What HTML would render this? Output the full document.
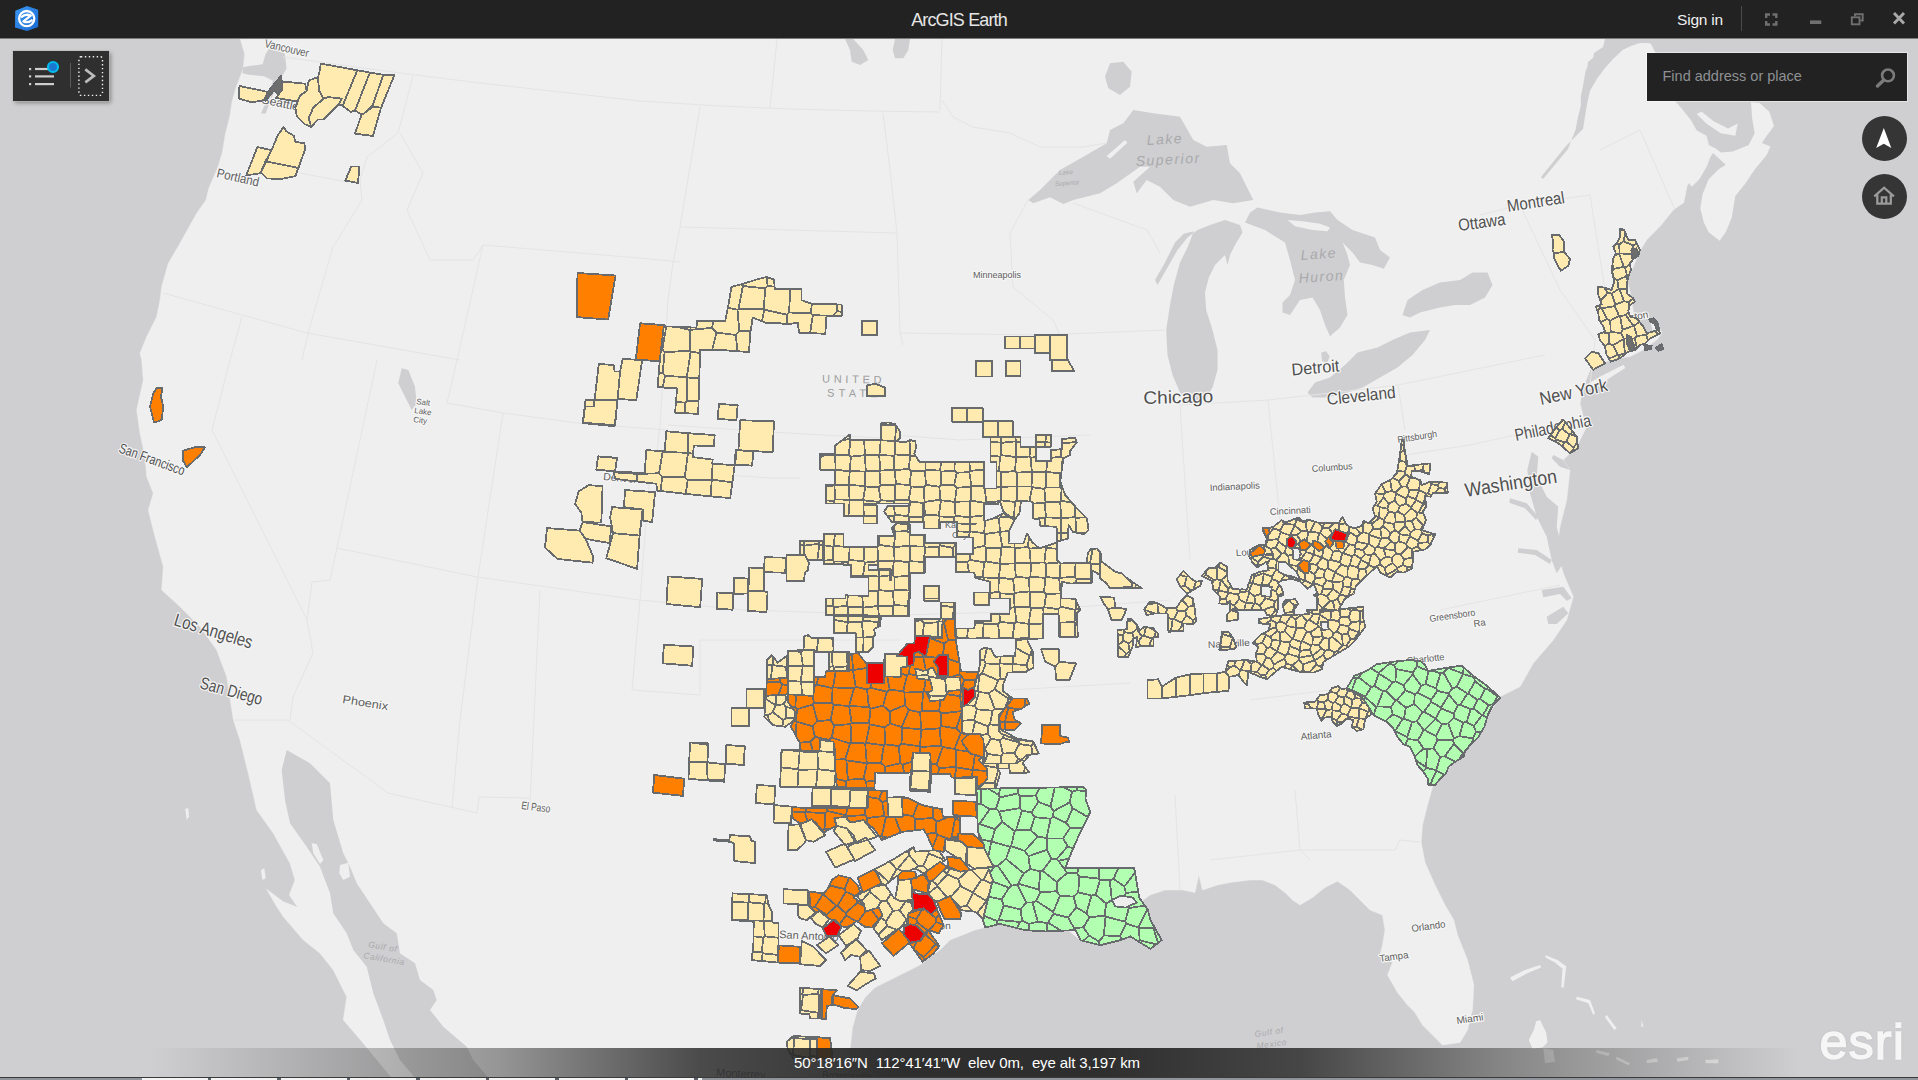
<!DOCTYPE html>
<html><head><meta charset="utf-8"><title>ArcGIS Earth</title>
<style>
html,body{margin:0;padding:0;background:#cfcfd1;overflow:hidden;}
body{width:1918px;height:1080px;position:relative;font-family:"Liberation Sans",sans-serif;}
#map{position:absolute;left:0;top:0;width:1918px;height:1080px;}
#titlebar{position:absolute;left:0;top:0;width:1918px;height:38px;background:#222222;border-bottom:1px solid #7c7c7d;}
#title{position:absolute;left:0;width:1918px;top:9px;text-align:center;color:#e6e6e6;font-size:18px;line-height:22px;letter-spacing:-0.86px;}
#signin{position:absolute;left:1677px;top:9px;color:#f0f0f0;font-size:15.5px;line-height:22px;letter-spacing:-0.2px;}
#tsep{position:absolute;left:1741px;top:6px;width:1px;height:25px;background:#4a4a4a;}
#toolbar{position:absolute;left:13px;top:51px;width:96px;height:50px;background:#2f2f2f;box-shadow:0 0 0 1px rgba(190,190,190,.55),2px 2px 4px rgba(0,0,0,.35);}
#search{position:absolute;left:1647px;top:53px;width:260px;height:48px;background:#222222;box-shadow:0 0 0 1px rgba(255,255,255,.45);}
#search span{position:absolute;left:15.5px;top:13px;color:#8e9093;font-size:14.5px;line-height:20px;letter-spacing:0px;}
.round{position:absolute;width:45px;height:45px;border-radius:50%;background:#353535;}
#status{position:absolute;left:0;top:1048px;width:1918px;height:29px;background:linear-gradient(90deg,rgba(64,64,64,0) 0px,rgba(64,64,64,0) 150px,rgba(60,60,60,.5) 500px,rgba(46,46,46,.85) 700px,rgba(34,34,34,.93) 900px,rgba(34,34,34,.93) 1100px,rgba(46,46,46,.85) 1300px,rgba(60,60,60,.5) 1500px,rgba(64,64,64,0) 1800px);}
#coords{position:absolute;left:794px;top:1052.5px;color:#fff;font-size:15px;line-height:20px;white-space:pre;letter-spacing:-0.125px;}
#esri{position:absolute;left:1819.5px;top:1012px;color:#f6f6f6;font-size:50.5px;line-height:60px;letter-spacing:1px;-webkit-text-stroke:1.5px #f6f6f6;text-shadow:0 0 2px rgba(0,0,0,.35);}
#bottomw{position:absolute;left:142px;top:1078px;width:560px;height:2px;background:repeating-linear-gradient(90deg,#f4f4f4 0px,#f4f4f4 66px,#5a6068 66px,#5a6068 69.5px);}
#bottom{position:absolute;left:0;top:1077px;width:1918px;height:3px;background:#8f959b;border-top:1px solid #3a3a3a;box-sizing:border-box;}
</style></head><body>
<svg id="map" width="1918" height="1080" viewBox="0 0 1918 1080">
<rect x="0" y="0" width="1918" height="1080" fill="#cfcfd1"/>
<polygon points="240.3,39 244.7,53.9 243.2,68.8 235.8,88.2 232.1,101.6 229.8,116.5 225.3,134.4 222.4,152.3 217.9,167.2 208.9,188.1 206,200 196.7,213.3 180,243.3 168.3,263.3 161.7,286.7 160,300 156.7,316.7 146.7,336.7 140,353.3 141.7,359.7 143.3,380 136.7,410 140,433.3 145,456.7 146.7,476.7 153.3,493.3 148.3,510 155,536.7 163.3,566.7 161.7,590 180,606.7 200,626.7 216.7,650 226.7,676.7 233.3,719.7 240,740 248.3,773.3 256.7,810 273.3,833.3 290,863.3 295,880 289.3,895 297.7,907.3 283.3,901.7 266.7,889.3 276.7,906.7 283.3,916.7 303.3,940 320,953.3 333.3,970 346.7,996.7 343.3,1020 363.3,1043.3 393.3,1079.7 848,1080 850,1049.8 852.5,1027.5 857.5,1010 865,997.5 875,987.5 890,980 905,972.5 920,965 932.5,955 940,950 950,940 962.5,935 975,930 985,927.5 1000,923.8 1025,930 1045,931.2 1055,925 1065,927.5 1080,940 1100,945 1120,940 1130,935 1150,947.5 1161.2,940 1147.5,920 1145,907.5 1137.5,905 1140,897.5 1140,902.5 1150,895 1165,890 1182.5,890 1195,892.5 1198.8,875 1202.5,890 1217.5,885 1230,882.5 1250,880 1262.5,880 1275,885 1285,892.5 1292.5,900 1300,905 1312.5,897.5 1325,887.5 1337.5,881.2 1350,890 1360,900 1370,910 1382.5,915 1385,930 1382.5,945 1380,955 1392.5,962.5 1387.5,975 1397.5,992.5 1407.5,1005 1415,1012.5 1422.5,1025 1432.5,1035 1442.5,1045 1460,1042.5 1467.5,1030 1472.5,1010 1473.8,985 1467.5,960 1457.5,935 1453.8,920 1445,905 1435,885 1425,862.5 1421.2,842.5 1422.5,825 1427.5,805 1432.5,787.5 1435,780 1433.3,783.3 1446.7,770 1463.3,753.3 1480,733.3 1485,720 1500,696.7 1520,686.7 1533.3,663.3 1553.3,640 1566.7,620 1573.3,596.7 1563.3,573.3 1556.7,550 1560,526.7 1566.7,500 1570,470 1563.3,460 1576.7,446.7 1586.7,426.7 1583.3,416.7 1580,403.3 1583.5,386.5 1590.2,369.8 1610.3,359.7 1630.3,356.4 1643.7,349.7 1657,339.7 1662,333 1657,323 1650.4,321.3 1653.7,333 1640.3,333 1633.6,313 1630.3,292.9 1627,279.6 1633.6,266.2 1638.7,252.8 1647,239.5 1660.4,226.1 1673.7,209.4 1683.8,202.7 1687.1,186 1689.1,182.7 1691.8,186.4 1699.1,179.2 1706.3,167.1 1710,157.4 1713.6,151.4 1716,149 1708.7,145.3 1706.3,135.7 1696.7,130.8 1690.6,120 1681,107.9 1674.9,101.3 1672.5,87.3 1648.3,39 240,39" fill="#efefef" stroke="#efefef" stroke-width="0.5" stroke-linejoin="round"/>
<polygon points="286.7,750 310,763.3 330,783.3 333.3,820 343.3,853.3 350,866.7 356.7,883.3 370,903.3 383.3,923.3 396.7,933.3 400,953.3 415,963.3 420,980 433.3,990 436.7,1000 430,1010 443.3,1026.7 466.7,1046.7 473.3,1060 490,1079.7 416.7,1079.7 400,1060 390,1040 383.3,1020 373.3,993.3 366.7,966.7 353.3,950 346.7,933.3 333.3,913.3 330,893.3 320,866.7 306.7,846.7 290,823.3 285,800 281.7,770" fill="#cfcfd1"/>
<polygon points="243.2,67.3 250.7,65.8 262.6,64.3 265.6,53.9 271.6,45 277.5,47.9 285,53.9 286.5,68.8 282,76.3 280.5,88.2 274.5,91.2 270.1,101.6 265.6,113.5 261.1,113.5 267.1,98.6 273,80.7 264.1,76.3 249.2,74.8 242.5,73.3" fill="#cfcfd1"/>
<polygon points="1028.3,200 1040,190 1060,170 1083.3,156.7 1106.7,143.3 1110,130 1123.3,123.3 1133.3,110 1153.3,113.3 1180,116.7 1193.3,140 1206.7,146.7 1226.7,145 1230,163.3 1240,173.3 1246.7,186.7 1253.3,200 1233.3,203.3 1213.3,200 1190,206.7 1173.3,200 1160,186.7 1146.7,180 1136.7,193.3 1133.3,181.7 1150,166.7 1140,166.7 1116.7,183.3 1100,193.3 1073.3,200 1063.3,204 1050,197.3 1033.3,203.3" fill="#cfcfd1"/>
<polygon points="1110,63.3 1123.3,61.7 1131.7,71.7 1130,86.7 1120,95 1108.3,88.3 1105,76.7" fill="#cfcfd1"/>
<polygon points="845,39 853.3,39 863.3,50 868.3,60 860,65 851.7,61.7 850,50" fill="#cfcfd1"/>
<polygon points="895,39 910,39 908.3,50 903.3,58.3 895,58.3 892.7,50" fill="#cfcfd1"/>
<polygon points="1240,225 1225,220 1210,225 1197.5,230 1187.5,237.5 1177.5,250 1167.5,267.5 1157.5,285 1155,280 1165,262.5 1175,242.5 1183.8,233.8 1193.8,231.2 1187.5,247.5 1180,262.5 1173.8,285 1170,305 1166.2,330 1167.5,355 1172.5,375 1180,392.5 1190,405 1205,400 1212.5,387.5 1217.5,370 1217.5,350 1212.5,330 1206.2,310 1205,292.5 1208.8,277.5 1215,265 1225,255 1227.5,265 1230,255 1235,245 1242.5,232.5" fill="#cfcfd1"/>
<polygon points="1245,222.5 1250,212.5 1257.5,207.5 1280,212.5 1300,215 1315,212.5 1330,211.2 1337.5,220 1352.5,230 1375,237.5 1380,250 1390,257.5 1383.8,268.8 1372.5,265 1360,262.5 1352.5,252.5 1342.5,242.5 1347.5,255 1350,265 1343.8,280 1345,297.5 1347.5,315 1340,327.5 1330,336.2 1325,325 1320,310 1312.5,297.5 1300,300 1290,315 1282.5,312.5 1282.5,302.5 1290,295 1295,280 1290,260 1285,242.5 1265,230" fill="#cfcfd1"/>
<polygon points="1321.2,352.5 1326.2,351.2 1329.5,356.2 1327.5,362.5 1322,361.2" fill="#cfcfd1"/>
<polygon points="1307.5,392.5 1315,382.5 1330,377.5 1345,365 1357.5,352.5 1377.5,347.5 1392.5,340 1410,332.5 1430,330 1425,340 1412.5,355 1397.5,367.5 1380,377.5 1362.5,387.5 1340,395 1325,397.5 1312.5,397.5" fill="#cfcfd1"/>
<polygon points="1402.5,315 1407.5,300 1422.5,290 1440,282.5 1460,280 1472.5,272.5 1487.5,272.5 1492.5,285 1485,297.5 1470,305 1455,305 1440,307.5 1420,312.5 1410,317.5" fill="#cfcfd1"/>
<polygon points="1605,39 1603,47 1594,53 1593,58 1588,62 1587.5,66.5 1585.4,72 1583,85.7 1580.8,97 1580.8,105.7 1577.5,119 1575.8,129 1568,149 1543,179 1541,177 1566,146 1583,129 1586.7,105.7 1590,90.7 1597.5,78 1605,68 1613,59 1623,49.8 1631.7,45.7 1640,43 1648,43 1658,45.7 1665,49.4 1673,50.7 1700,51.5 1700,39" fill="#cfcfd1"/>
<polygon points="1531.7,451.7 1538.3,456.7 1536.7,476.7 1546.7,496.7 1558.3,506.7 1556.7,526.7 1561.7,546.7 1563.3,563.3 1556.7,573.3 1551.7,560 1546.7,536.7 1536.7,516.7 1530,493.3 1527.3,470" fill="#cfcfd1"/>
<polygon points="1510,498.3 1526.7,503.3 1538.3,516.7 1536,520 1525,508.3 1509.3,502.7" fill="#cfcfd1"/>
<polygon points="1518.3,548.3 1536.7,550 1551.7,560 1550,564 1535,555 1517.7,552.7" fill="#cfcfd1"/>
<polygon points="1541.7,590 1563.3,586.7 1571.7,598.3 1566.7,600.7 1560,594 1543.3,597.3" fill="#cfcfd1"/>
<polygon points="1546.7,616.7 1563.3,606.7 1568.3,613.3 1556.7,624 1548.3,624" fill="#cfcfd1"/>
<polygon points="1563.3,460 1570,470 1560,466.7 1551.7,458.3 1553.3,455" fill="#cfcfd1"/>
<polygon points="401.7,368.3 408.3,370 415,386.7 416.7,403.3 411.7,410 405,396.7 398.3,383.3" fill="#cfcfd1"/>
<polygon points="1287.5,220 1302.5,221.2 1320,223.8 1330,227.5 1327.5,231.2 1312.5,230 1295,226.2" fill="#efefef"/>
<polygon points="1106.7,156 1125,140 1127.3,142.7 1110,158.7" fill="#efefef"/>
<polygon points="1583.5,386.5 1600.2,376.5 1623.6,364.8 1625.3,368.1 1606.9,379.8 1588.5,389.8" fill="#efefef"/>
<polygon points="1696.7,113.9 1701.5,111.5 1713.6,121.2 1728.1,128.4 1737.7,123.6 1735.3,135.7 1720.8,133.2 1706.3,123.6" fill="#efefef"/>
<polygon points="1712.4,152.6 1725.7,164.7 1718.4,169.5 1708.7,179.2 1702.7,193.7 1700.3,208.2 1703.9,222.7 1708.7,232.3 1719.6,240.8 1725.7,232.3 1731.7,217.8 1735.3,196.1 1745,184 1754.7,169.5 1766.7,155 1770.4,146.5 1761.9,142.9 1766.7,135.7 1774,126 1769.2,111.5 1759.5,103 1751,102.3 1752.2,118.7 1754.7,133.2 1748.6,145.3 1745,146.5 1732.9,151.4 1720.8,152.6 1715.5,148.2" fill="#efefef"/>
<polygon points="1510,977.5 1525,970 1540,965 1541.2,967.5 1526.2,973.8 1512.5,981.2" fill="#efefef"/>
<polygon points="1545,955 1557.5,960 1566.2,966.2 1563.8,987.5 1561.2,987.5 1562.5,968.8 1555,962.5 1546.2,958" fill="#efefef"/>
<polygon points="1536.2,1021.2 1540,1020 1546.2,1032.5 1547.5,1042.5 1542.5,1047.5 1532.5,1048.8 1528.8,1040 1533.8,1030" fill="#efefef"/>
<polygon points="311.7,843.3 316.7,844 323.3,860 320,864 313.3,853.3" fill="#efefef"/>
<polygon points="340,865 348.3,862.7 350,876.7 343.3,880 339.3,873.3" fill="#efefef"/>
<polygon points="261,870 264.3,868.3 265.7,878.3 262.3,880" fill="#efefef"/>
<polygon points="185.3,808.7 188.3,808.3 189,816.7 186.7,820" fill="#efefef"/>
<polygon points="1576.7,996.7 1590,1000 1595,1013.3 1593.3,1015 1588.3,1003.3 1576,999.3" fill="#efefef"/>
<polygon points="1606.7,1015 1616.7,1028.3 1614.3,1030 1605,1017.3" fill="#efefef"/>
<polygon points="1641.7,1020 1643.3,1026.7 1641.3,1026.7" fill="#efefef"/>
<polygon points="1543.3,1048.3 1553.3,1050 1555,1061.7 1545,1063.3" fill="#efefef"/>
<polygon points="1596.7,1050 1610,1053.3 1608.3,1056 1596,1052.7" fill="#efefef"/>
<polygon points="1616.7,1056.7 1630,1063.3 1628.3,1065.3 1616,1059.3" fill="#efefef"/>
<polygon points="1646.7,1060 1656.7,1058.3 1658.3,1061.7 1646.7,1063.3" fill="#efefef"/>
<polygon points="1676.7,1058.3 1688.3,1056.7 1688.3,1060 1677.3,1061.7" fill="#efefef"/>
<polygon points="1705,1060 1718.3,1059.3 1718.3,1063.3 1706,1063.3" fill="#efefef"/>
<g fill="none" stroke="#e4e4e4" stroke-width="1" stroke-linejoin="round">
<polyline points="283,57 320,62 400,73 480,83 560,92 640,101 720,106 790,109 870,111 940,112"/>
<polyline points="413,76 398,133 367,157 360,180 362,200 333,247 308,333 302,360"/>
<polyline points="300,173 347,182"/>
<polyline points="163,293 307,333 460,360"/>
<polyline points="400,133 423,173 407,210 430,260 473,260 483,245"/>
<polyline points="483,245 639,258 680,262"/>
<polyline points="483,245 457,360 447,403"/>
<polyline points="700,107 680,227 673,263 668,300"/>
<polyline points="680,227 897,233"/>
<polyline points="883,113 890,170 897,233 900,333 903,345"/>
<polyline points="942,39 940,110"/>
<polyline points="777,39 770,108"/>
<polyline points="447,403 503,413 585,424 668,430"/>
<polyline points="668,300 660,425 655,470"/>
<polyline points="242,317 230,360 212,430 307,620"/>
<polyline points="377,360 337,548 330,580 312,582 307,620 313,653 293,697 290,720"/>
<polyline points="503,413 478,577 460,720 452,808"/>
<polyline points="337,548 477,577 639,600"/>
<polyline points="233,720 288,720 388,793 477,813 479,797 530,798"/>
<polyline points="668,425 770,432 880,438"/>
<polyline points="655,470 770,478 800,478"/>
<polyline points="640,600 745,610 900,615 1010,612"/>
<polyline points="650,470 640,600 632,690"/>
<polyline points="540,590 530,803"/>
<polyline points="632,690 700,695 700,640 900,640"/>
<polyline points="900,333 1040,335 1165,330"/>
<polyline points="893,435 960,440 1090,435"/>
<polyline points="1028,200 1010,233 1013,287 1053,320 1060,335"/>
<polyline points="1073,203 1147,230 1160,253"/>
<polyline points="942,100 953,117 973,127 1010,133 1040,147 1083,147 1107,143"/>
<polyline points="1010,612 1170,600"/>
<polyline points="1010,690 1130,683"/>
<polyline points="1180,405 1190,560"/>
<polyline points="1268,400 1280,520"/>
<polyline points="1180,405 1268,400 1340,392"/>
<polyline points="1398,385 1405,430"/>
<polyline points="1340,392 1398,385 1545,355"/>
<polyline points="1405,455 1470,445 1560,425"/>
<polyline points="1250,700 1330,690 1420,680"/>
<polyline points="1440,610 1560,585"/>
<polyline points="1175,795 1180,890"/>
<polyline points="1295,790 1300,850 1310,860"/>
<polyline points="1210,860 1300,850 1395,850 1400,840 1420,842"/>
<polyline points="1590,385 1595,340 1560,290 1520,205"/>
<polyline points="1480,215 1520,205 1590,195"/>
<polyline points="1590,195 1605,290 1625,300"/>
<polyline points="1600,150 1640,130 1675,210"/>
</g>
<g font-family="Liberation Sans, sans-serif"><text x="264" y="47" transform="rotate(13 264 47)" fill="#606060" text-anchor="start" style="font-size:11.5px;" stroke="#f6f6f6" stroke-width="2.4" paint-order="stroke" stroke-linejoin="round" textLength="45" lengthAdjust="spacingAndGlyphs">Vancouver</text>
<text x="261" y="103" transform="rotate(12 261 103)" fill="#606060" text-anchor="start" style="font-size:12px;" stroke="#f6f6f6" stroke-width="2.4" paint-order="stroke" stroke-linejoin="round" textLength="38" lengthAdjust="spacingAndGlyphs">Seattle</text>
<text x="216" y="177" transform="rotate(13 216 177)" fill="#606060" text-anchor="start" style="font-size:13px;" stroke="#f6f6f6" stroke-width="2.4" paint-order="stroke" stroke-linejoin="round" textLength="43" lengthAdjust="spacingAndGlyphs">Portland</text>
<text x="118" y="452" transform="rotate(20 118 452)" fill="#505050" text-anchor="start" style="font-size:14px;" stroke="#f6f6f6" stroke-width="2.4" paint-order="stroke" stroke-linejoin="round" textLength="69" lengthAdjust="spacingAndGlyphs">San Francisco</text>
<text x="173" y="625" transform="rotate(17 173 625)" fill="#505050" text-anchor="start" style="font-size:18px;" stroke="#f6f6f6" stroke-width="2.4" paint-order="stroke" stroke-linejoin="round" textLength="81" lengthAdjust="spacingAndGlyphs">Los Angeles</text>
<text x="199" y="688" transform="rotate(15.5 199 688)" fill="#505050" text-anchor="start" style="font-size:17px;" stroke="#f6f6f6" stroke-width="2.4" paint-order="stroke" stroke-linejoin="round" textLength="64" lengthAdjust="spacingAndGlyphs">San Diego</text>
<text x="342" y="703" transform="rotate(9 342 703)" fill="#606060" text-anchor="start" style="font-size:11.5px;" stroke="#f6f6f6" stroke-width="2.4" paint-order="stroke" stroke-linejoin="round" textLength="46" lengthAdjust="spacingAndGlyphs">Phoenix</text>
<text x="416" y="404" transform="rotate(8 416 404)" fill="#606060" text-anchor="start" style="font-size:8px;" stroke="#f6f6f6" stroke-width="2.4" paint-order="stroke" stroke-linejoin="round">Salt</text>
<text x="414" y="413" transform="rotate(8 414 413)" fill="#606060" text-anchor="start" style="font-size:8px;" stroke="#f6f6f6" stroke-width="2.4" paint-order="stroke" stroke-linejoin="round">Lake</text>
<text x="413" y="422" transform="rotate(8 413 422)" fill="#606060" text-anchor="start" style="font-size:8px;" stroke="#f6f6f6" stroke-width="2.4" paint-order="stroke" stroke-linejoin="round">City</text>
<text x="521" y="809" transform="rotate(7 521 809)" fill="#606060" text-anchor="start" style="font-size:11px;" stroke="#f6f6f6" stroke-width="2.4" paint-order="stroke" stroke-linejoin="round" textLength="29" lengthAdjust="spacingAndGlyphs">El Paso</text>
<text x="603" y="480" transform="rotate(5 603 480)" fill="#606060" text-anchor="start" style="font-size:10.5px;" stroke="#f6f6f6" stroke-width="2.4" paint-order="stroke" stroke-linejoin="round">Denver</text>
<text x="973" y="278" transform="rotate(0 973 278)" fill="#606060" text-anchor="start" style="font-size:9.5px;" stroke="#f6f6f6" stroke-width="2.4" paint-order="stroke" stroke-linejoin="round" textLength="48" lengthAdjust="spacingAndGlyphs">Minneapolis</text>
<text x="822" y="382.5" transform="rotate(1 822 382.5)" fill="#9c9c9c" text-anchor="start" style="font-size:11px;letter-spacing:3.7px;">UNITED</text>
<text x="827" y="396.5" transform="rotate(1 827 396.5)" fill="#9c9c9c" text-anchor="start" style="font-size:11px;letter-spacing:4.2px;">STATE</text>
<text x="1143.5" y="404" transform="rotate(-1.5 1143.5 404)" fill="#505050" text-anchor="start" style="font-size:18px;" stroke="#f6f6f6" stroke-width="2.4" paint-order="stroke" stroke-linejoin="round" textLength="70" lengthAdjust="spacingAndGlyphs">Chicago</text>
<text x="1292" y="375.5" transform="rotate(-5 1292 375.5)" fill="#505050" text-anchor="start" style="font-size:17px;" stroke="#f6f6f6" stroke-width="2.4" paint-order="stroke" stroke-linejoin="round" textLength="48" lengthAdjust="spacingAndGlyphs">Detroit</text>
<text x="1327.5" y="405" transform="rotate(-6 1327.5 405)" fill="#505050" text-anchor="start" style="font-size:17px;" stroke="#f6f6f6" stroke-width="2.4" paint-order="stroke" stroke-linejoin="round" textLength="69" lengthAdjust="spacingAndGlyphs">Cleveland</text>
<text x="1210" y="491" transform="rotate(-3 1210 491)" fill="#606060" text-anchor="start" style="font-size:9.5px;" stroke="#f6f6f6" stroke-width="2.4" paint-order="stroke" stroke-linejoin="round" textLength="50" lengthAdjust="spacingAndGlyphs">Indianapolis</text>
<text x="1312" y="472" transform="rotate(-4 1312 472)" fill="#606060" text-anchor="start" style="font-size:9.5px;" stroke="#f6f6f6" stroke-width="2.4" paint-order="stroke" stroke-linejoin="round" textLength="41" lengthAdjust="spacingAndGlyphs">Columbus</text>
<text x="1398" y="443" transform="rotate(-9 1398 443)" fill="#606060" text-anchor="start" style="font-size:9.5px;" stroke="#f6f6f6" stroke-width="2.4" paint-order="stroke" stroke-linejoin="round" textLength="40" lengthAdjust="spacingAndGlyphs">Pittsburgh</text>
<text x="1270" y="515" transform="rotate(-3 1270 515)" fill="#606060" text-anchor="start" style="font-size:9.5px;" stroke="#f6f6f6" stroke-width="2.4" paint-order="stroke" stroke-linejoin="round" textLength="41" lengthAdjust="spacingAndGlyphs">Cincinnati</text>
<text x="1236" y="556" transform="rotate(-3 1236 556)" fill="#606060" text-anchor="start" style="font-size:9.5px;" stroke="#f6f6f6" stroke-width="2.4" paint-order="stroke" stroke-linejoin="round" textLength="40" lengthAdjust="spacingAndGlyphs">Louisville</text>
<text x="1208" y="648" transform="rotate(-3 1208 648)" fill="#606060" text-anchor="start" style="font-size:9.5px;" stroke="#f6f6f6" stroke-width="2.4" paint-order="stroke" stroke-linejoin="round" textLength="42" lengthAdjust="spacingAndGlyphs">Nashville</text>
<text x="1430" y="622" transform="rotate(-8 1430 622)" fill="#606060" text-anchor="start" style="font-size:9.5px;" stroke="#f6f6f6" stroke-width="2.4" paint-order="stroke" stroke-linejoin="round" textLength="46" lengthAdjust="spacingAndGlyphs">Greensboro</text>
<text x="1474" y="627" transform="rotate(-8 1474 627)" fill="#606060" text-anchor="start" style="font-size:9.5px;" stroke="#f6f6f6" stroke-width="2.4" paint-order="stroke" stroke-linejoin="round">Ra</text>
<text x="1407" y="664" transform="rotate(-6 1407 664)" fill="#606060" text-anchor="start" style="font-size:9.5px;" stroke="#f6f6f6" stroke-width="2.4" paint-order="stroke" stroke-linejoin="round" textLength="38" lengthAdjust="spacingAndGlyphs">Charlotte</text>
<text x="1301" y="740" transform="rotate(-5 1301 740)" fill="#606060" text-anchor="start" style="font-size:10px;" stroke="#f6f6f6" stroke-width="2.4" paint-order="stroke" stroke-linejoin="round" textLength="31" lengthAdjust="spacingAndGlyphs">Atlanta</text>
<text x="1466" y="497" transform="rotate(-9 1466 497)" fill="#505050" text-anchor="start" style="font-size:19.5px;" stroke="#f6f6f6" stroke-width="2.4" paint-order="stroke" stroke-linejoin="round" textLength="93" lengthAdjust="spacingAndGlyphs">Washington</text>
<text x="1516" y="441" transform="rotate(-11.5 1516 441)" fill="#505050" text-anchor="start" style="font-size:17px;" stroke="#f6f6f6" stroke-width="2.4" paint-order="stroke" stroke-linejoin="round" textLength="77.5" lengthAdjust="spacingAndGlyphs">Philadelphia</text>
<text x="1541" y="405" transform="rotate(-12 1541 405)" fill="#505050" text-anchor="start" style="font-size:18px;" stroke="#f6f6f6" stroke-width="2.4" paint-order="stroke" stroke-linejoin="round" textLength="69" lengthAdjust="spacingAndGlyphs">New York</text>
<text x="1459" y="231" transform="rotate(-7.7 1459 231)" fill="#505050" text-anchor="start" style="font-size:17px;" stroke="#f6f6f6" stroke-width="2.4" paint-order="stroke" stroke-linejoin="round" textLength="47.5" lengthAdjust="spacingAndGlyphs">Ottawa</text>
<text x="1508" y="212" transform="rotate(-9 1508 212)" fill="#505050" text-anchor="start" style="font-size:17px;" stroke="#f6f6f6" stroke-width="2.4" paint-order="stroke" stroke-linejoin="round" textLength="58" lengthAdjust="spacingAndGlyphs">Montreal</text>
<text x="1618" y="323" transform="rotate(-10 1618 323)" fill="#606060" text-anchor="start" style="font-size:10px;" stroke="#f6f6f6" stroke-width="2.4" paint-order="stroke" stroke-linejoin="round">Boston</text>
<text x="1412" y="932" transform="rotate(-8 1412 932)" fill="#606060" text-anchor="start" style="font-size:10px;" stroke="#f6f6f6" stroke-width="2.4" paint-order="stroke" stroke-linejoin="round" textLength="34" lengthAdjust="spacingAndGlyphs">Orlando</text>
<text x="1380" y="962" transform="rotate(-8 1380 962)" fill="#606060" text-anchor="start" style="font-size:10px;" stroke="#f6f6f6" stroke-width="2.4" paint-order="stroke" stroke-linejoin="round" textLength="29" lengthAdjust="spacingAndGlyphs">Tampa</text>
<text x="1457" y="1024" transform="rotate(-8 1457 1024)" fill="#606060" text-anchor="start" style="font-size:10px;" stroke="#f6f6f6" stroke-width="2.4" paint-order="stroke" stroke-linejoin="round" textLength="27" lengthAdjust="spacingAndGlyphs">Miami</text>
<text x="779" y="938" transform="rotate(3 779 938)" fill="#606060" text-anchor="start" style="font-size:11px;" stroke="#f6f6f6" stroke-width="2.4" paint-order="stroke" stroke-linejoin="round">San Antonio</text>
<text x="913" y="931" transform="rotate(-3 913 931)" fill="#606060" text-anchor="start" style="font-size:10px;" stroke="#f6f6f6" stroke-width="2.4" paint-order="stroke" stroke-linejoin="round" textLength="38" lengthAdjust="spacingAndGlyphs">Houston</text>
<text x="716" y="1076" transform="rotate(3 716 1076)" fill="#606060" text-anchor="start" style="font-size:11px;" stroke="#f6f6f6" stroke-width="2.4" paint-order="stroke" stroke-linejoin="round">Monterrey</text>
<text x="822" y="1078" transform="rotate(2 822 1078)" fill="#606060" text-anchor="start" style="font-size:10px;" stroke="#f6f6f6" stroke-width="2.4" paint-order="stroke" stroke-linejoin="round">Brownsville</text>
<text x="945" y="528" transform="rotate(0 945 528)" fill="#606060" text-anchor="start" style="font-size:9px;" stroke="#f6f6f6" stroke-width="2.4" paint-order="stroke" stroke-linejoin="round">Kansas</text>
<text x="952" y="538" transform="rotate(0 952 538)" fill="#606060" text-anchor="start" style="font-size:9px;" stroke="#f6f6f6" stroke-width="2.4" paint-order="stroke" stroke-linejoin="round">City</text>
<text x="1147" y="145" transform="rotate(-3 1147 145)" fill="#a9a9ac" text-anchor="start" style="font-size:14px;font-style:italic;letter-spacing:1.5px;">Lake</text>
<text x="1136" y="166" transform="rotate(-3 1136 166)" fill="#a9a9ac" text-anchor="start" style="font-size:14px;font-style:italic;letter-spacing:1.5px;">Superior</text>
<text x="1059" y="175" transform="rotate(-4 1059 175)" fill="#a9a9ac" text-anchor="start" style="font-size:6.5px;font-style:italic;">Lake</text>
<text x="1055" y="186" transform="rotate(-4 1055 186)" fill="#a9a9ac" text-anchor="start" style="font-size:6.5px;font-style:italic;">Superior</text>
<text x="1301" y="260" transform="rotate(-4 1301 260)" fill="#a9a9ac" text-anchor="start" style="font-size:14px;font-style:italic;letter-spacing:1.5px;">Lake</text>
<text x="1299" y="283" transform="rotate(-4 1299 283)" fill="#a9a9ac" text-anchor="start" style="font-size:14px;font-style:italic;letter-spacing:1.5px;">Huron</text>
<text x="368" y="947" transform="rotate(10 368 947)" fill="#a9a9ac" text-anchor="start" style="font-size:8.5px;font-style:italic;letter-spacing:0.6px;">Gulf of</text>
<text x="363" y="958" transform="rotate(10 363 958)" fill="#a9a9ac" text-anchor="start" style="font-size:8.5px;font-style:italic;letter-spacing:0.6px;">California</text>
<text x="1255" y="1037" transform="rotate(-8 1255 1037)" fill="#a9a9ac" text-anchor="start" style="font-size:8.5px;font-style:italic;letter-spacing:0.6px;">Gulf of</text>
<text x="1257" y="1049" transform="rotate(-8 1257 1049)" fill="#a9a9ac" text-anchor="start" style="font-size:8.5px;font-style:italic;letter-spacing:0.6px;">Mexico</text></g>
<g stroke="#686b6e" stroke-width="1.8" stroke-linejoin="round" shape-rendering="crispEdges">
<path fill="#ffebaf" d="M660.7,349.3 660.9,347.6 663.9,326.3 666.3,326.4 662.4,349.5ZM658.8,373.0 660.7,349.3 662.4,349.5 664.6,352.3 662.6,373.1ZM662.8,387.5 657.6,387.1 658.8,373.0 662.6,373.1 665.0,375.8ZM677.0,326.8 690.6,327.4 690.3,329.9 690.2,330.0ZM666.3,326.4 677.0,326.8 690.2,330.0 689.9,350.6 664.6,352.3 662.4,349.5ZM686.8,377.2 665.0,375.8 662.6,373.1 664.6,352.3 689.9,350.6 690.7,351.7ZM676.0,401.6 677.1,388.4 662.8,387.5 665.0,375.8 686.8,377.2 687.1,377.5 687.1,400.8 685.1,402.8ZM685.1,413.2 675.1,412.7 676.0,401.6 685.1,402.8ZM690.6,327.4 696.4,327.6 697.2,320.6 713.7,320.7 712.0,327.8 690.3,329.9ZM716.4,332.6 712.2,349.9 700.2,349.6 700.1,353.1 690.7,351.7 689.9,350.6 690.2,330.0 690.3,329.9 712.0,327.8ZM700.1,353.1 699.3,378.3 687.1,377.5 686.8,377.2 690.7,351.7ZM699.3,378.3 698.6,401.2 687.1,400.8 687.1,377.5ZM698.6,401.2 698.2,413.9 685.1,413.2 685.1,402.8 687.1,400.8ZM738.6,308.8 737.5,309.7 727.9,307.9 731.4,287.0 741.4,284.2 742.9,286.0ZM713.7,320.7 725.2,320.8 727.7,308.8 727.9,307.9 737.5,309.7 739.3,331.0 735.9,335.0 716.4,332.6 712.0,327.8ZM737.4,351.2 722.7,350.1 712.2,349.9 716.4,332.6 735.9,335.0ZM742.9,286.0 741.4,284.2 749.0,282.0 756.5,279.5 766.5,277.0 766.9,277.2 767.6,286.1 765.3,288.4ZM738.6,308.8 742.9,286.0 765.3,288.4 763.7,308.8ZM761.9,321.3 752.7,317.6 750.6,331.2 739.3,331.0 737.5,309.7 738.6,308.8 763.7,308.8 764.3,309.7ZM750.6,331.2 750.2,333.8 749.0,352.1 737.4,351.2 735.9,335.0 739.3,331.0ZM766.9,277.2 774.0,279.5 774.6,286.6 767.6,286.1ZM774.6,286.6 774.7,288.8 790.3,288.8 789.1,312.5 786.8,314.7 764.3,309.7 763.7,308.8 765.3,288.4 767.6,286.1ZM786.7,324.5 786.5,324.6 777.7,322.6 765.2,322.6 761.9,321.3 764.3,309.7 786.8,314.7ZM810.9,313.2 789.1,312.5 790.3,288.8 798.9,288.8 801.5,289.1 801.5,300.1 811.5,303.8 811.8,303.8ZM810.9,313.2 812.8,315.2 810.1,333.1 809.0,333.1 799.0,332.6 797.8,322.6 786.7,324.5 786.8,314.7 789.1,312.5ZM811.8,303.8 837.0,304.4 837.4,311.0 832.9,315.8 812.8,315.2 810.9,313.2ZM832.9,316.3 826.5,316.3 825.3,333.8 810.1,333.1 812.8,315.2 832.9,315.8ZM837.0,304.4 841.6,304.6 841.6,312.0 837.4,311.0ZM841.6,312.0 841.6,316.3 832.9,316.3 832.9,315.8 837.4,311.0Z"/>
<path fill="#ffebaf" d="M614.0,472.3 613.8,471.3 637.2,472.7 637.3,473.9ZM636.5,481.4 615.1,478.8 614.0,472.3 637.3,473.9 637.4,473.9ZM637.2,472.7 644.6,473.1 646.4,450.1 662.1,451.1 662.6,451.7 659.1,473.3 637.4,473.9 637.3,473.9ZM660.8,491.0 657.1,490.6 656.4,483.8 636.5,481.4 637.4,473.9 659.1,473.3 662.1,476.7ZM662.1,451.1 664.6,451.3 666.4,431.3 688.4,433.2 687.8,452.9 662.6,451.7ZM687.8,452.9 688.0,453.0 684.8,477.0 662.1,476.7 659.1,473.3 662.6,451.7ZM685.8,493.9 685.2,493.8 660.8,491.0 662.1,476.7 684.8,477.0 687.6,480.2ZM688.4,433.2 694.7,433.8 714.7,435.0 713.9,446.3 693.9,445.5 693.1,453.6 688.0,453.0 687.8,452.9ZM687.6,480.2 684.8,477.0 688.0,453.0 693.1,453.6 692.7,457.1 712.7,459.6 712.2,463.8 712.6,463.8 711.9,479.7 711.7,479.9ZM710.8,496.4 709.7,496.3 685.8,493.9 687.6,480.2 711.7,479.9ZM712.6,463.8 734.7,465.1 732.4,482.3 711.9,479.7ZM732.4,482.3 730.2,498.1 710.8,496.4 711.7,479.9 711.9,479.7Z"/>
<path fill="#ffebaf" d="M748.5,902.2 748.1,902.6 732.4,901.8 732.3,901.6 732.5,893.4 749.2,894.2ZM731.7,919.4 732.2,903.0 732.4,901.8 748.1,902.6 747.6,919.7ZM748.2,921.3 731.7,920.1 731.7,919.4 747.6,919.7 748.3,920.4ZM749.2,894.2 766.1,895.0 765.1,903.3 764.4,903.8 748.5,902.2ZM764.4,903.8 763.5,920.7 748.3,920.4 747.6,919.7 748.1,902.6 748.5,902.2ZM764.7,936.4 763.4,937.6 753.5,936.3 753.7,921.7 748.2,921.3 748.3,920.4 763.5,920.7 764.0,921.1ZM761.7,952.2 752.5,952.2 753.4,944.3 753.5,936.3 763.4,937.6ZM761.7,961.0 751.7,960.1 752.5,952.2 761.7,952.2 762.6,953.3ZM766.1,895.0 766.7,895.0 768.3,903.8 765.1,903.3ZM768.3,903.8 768.4,904.2 771.7,911.7 772.4,920.6 764.0,921.1 763.5,920.7 764.4,903.8 765.1,903.3ZM772.4,920.6 772.6,922.6 778.4,923.4 778.4,937.7 764.7,936.4 764.0,921.1ZM778.4,937.7 778.4,945.1 778.2,955.0 762.6,953.3 761.7,952.2 763.4,937.6 764.7,936.4ZM778.2,955.0 778.1,962.6 761.7,961.0 762.6,953.3Z"/>
<path fill="#ffebaf" d="M868.7,888.2 871.0,886.7 873.0,886.5 869.9,889.0ZM869.7,891.8 862.2,900.6 860.5,899.9 856.8,895.9 868.7,888.2 869.9,889.0ZM862.5,902.2 860.5,899.9 862.2,900.6ZM873.0,886.5 885.2,885.0 891.0,893.5 886.7,900.5 881.2,901.4 869.7,891.8 869.9,889.0ZM865.0,910.0 864.3,904.2 862.5,902.2 862.2,900.6 869.7,891.8 881.2,901.4 877.0,908.0 867.1,911.1ZM867.1,911.1 865.2,911.7 865.0,910.0ZM891.0,893.5 894.4,898.4 905.2,899.5 905.8,901.1 899.6,910.3 893.0,910.7 886.7,900.5ZM880.9,917.6 882.7,915.1 878.5,907.5 877.0,908.0 881.2,901.4 886.7,900.5 893.0,910.7 886.0,921.2ZM877.5,934.0 873.5,928.4 880.9,917.6 886.0,921.2 886.9,926.0 878.3,934.6ZM905.2,899.5 910.2,900.0 911.2,902.9 905.8,901.1ZM911.2,902.9 913.5,910.1 908.5,913.4 907.6,919.3 906.5,919.4 899.6,910.3 905.8,901.1ZM901.3,927.1 896.6,929.7 886.9,926.0 886.0,921.2 893.0,910.7 899.6,910.3 906.5,919.4ZM896.6,929.7 896.0,930.1 881.8,940.1 878.3,935.1 878.3,934.6 886.9,926.0ZM907.6,919.3 906.9,924.2 901.9,926.7 901.3,927.1 906.5,919.4Z"/>
<path fill="#ffebaf" d="M905.9,851.6 912.1,847.9 908.7,852.2ZM889.4,861.4 893.5,859.2 905.9,851.6 908.7,852.2 909.1,855.1 897.6,869.0 896.6,869.0ZM889.6,881.5 888.8,882.2 875.5,870.0 875.2,869.2 889.4,861.4 896.6,869.0ZM888.8,882.2 885.2,885.0 881.8,883.4 875.5,870.0ZM912.1,847.9 913.5,847.0 915.2,851.7 928.1,850.7 928.8,853.4 923.3,865.7 918.2,866.0 909.1,855.1 908.7,852.2ZM909.1,855.1 918.2,866.0 915.6,868.6 915.2,868.3 904.8,872.6 897.6,869.0ZM904.8,872.6 896.9,875.8 889.6,881.5 896.6,869.0 897.6,869.0ZM928.1,850.7 938.6,850.0 943.5,857.4 942.3,859.1 928.8,853.4ZM923.3,865.7 928.8,853.4 942.3,859.1 942.8,861.7 933.6,868.3 928.2,871.0ZM928.2,871.0 923.6,873.3 915.6,868.6 918.2,866.0 923.3,865.7ZM943.5,857.4 945.2,860.0 942.8,861.7 942.3,859.1Z"/>
<path fill="#ffebaf" d="M943.2,870.7 946.9,867.5 949.7,868.4 947.2,874.1ZM931.7,880.5 943.2,870.7 947.2,874.1 947.2,874.4 937.5,885.2ZM928.0,893.7 927.7,893.4 930.2,881.7 931.7,880.5 937.5,885.2 937.5,886.2ZM949.7,868.4 960.3,871.7 968.0,870.4 958.4,879.2 947.2,874.4 947.2,874.1ZM950.9,896.8 950.3,895.9 947.3,897.2 946.8,897.2 937.5,886.2 937.5,885.2 947.2,874.4 958.4,879.2 960.5,886.0ZM946.8,897.2 946.6,897.5 936.9,901.7 933.6,900.0 928.0,893.7 937.5,886.2ZM971.2,869.8 980.3,867.5 989.5,868.3 983.6,879.6 981.2,879.9ZM968.0,870.4 970.3,870.0 971.2,869.8 981.2,879.9 972.9,892.4 960.5,886.0 958.4,879.2ZM952.5,899.1 950.9,896.8 960.5,886.0 972.9,892.4 973.0,892.8 966.6,905.4 960.4,907.0ZM947.3,897.2 946.6,897.5 946.8,897.2ZM959.5,909.0 952.5,899.1 960.4,907.0ZM983.6,879.6 989.5,868.3 990.3,868.3 995.3,875.0 992.7,884.4ZM992.7,884.4 991.1,890.0 988.5,896.3 985.8,900.7 973.0,892.8 972.9,892.4 981.2,879.9 983.6,879.6ZM976.9,913.2 975.3,911.7 973.1,911.5 966.6,905.4 973.0,892.8 985.8,900.7 986.2,901.5ZM973.1,911.5 960.3,910.1 959.5,909.0 960.4,907.0 966.6,905.4ZM988.5,896.3 987.0,900.0 987.0,902.0 986.2,901.5 985.8,900.7ZM987.0,902.0 987.0,913.4 983.6,919.2 976.9,913.2 986.2,901.5Z"/>
<path fill="#ffebaf" d="M800.1,994.0 800.1,987.6 802.7,987.8 802.6,994.4ZM802.6,994.4 803.1,994.9 801.0,1010.1 800.1,1010.9 800.1,994.0ZM802.7,987.8 818.8,989.1 818.0,994.0 803.1,994.9 802.6,994.4ZM803.1,994.9 818.0,994.0 819.3,995.4 819.2,1011.9 818.2,1012.8 801.0,1010.1ZM817.9,1018.5 810.1,1018.5 809.3,1014.3 800.1,1013.5 800.1,1010.9 801.0,1010.1 818.2,1012.8ZM818.8,989.1 821.0,989.3 820.8,995.5 819.3,995.4 818.0,994.0ZM819.2,1011.9 819.3,995.4 820.8,995.5 820.3,1011.9ZM820.3,1011.9 820.1,1018.5 817.9,1018.5 818.2,1012.8 819.2,1011.9Z"/>
<path fill="#ffebaf" d="M794.3,1037.9 791.3,1037.9 793.4,1036.0 794.3,1036.1ZM794.3,1037.9 794.5,1038.1 792.8,1054.9 792.5,1055.1 791.4,1055.1 787.6,1048.5 786.8,1041.8 791.3,1037.9ZM792.3,1056.6 791.4,1055.1 792.5,1055.1ZM794.3,1036.1 811.0,1036.9 810.8,1038.8 810.3,1039.2 794.5,1038.1 794.3,1037.9ZM794.5,1038.1 810.3,1039.2 810.3,1056.1 808.3,1057.8 792.8,1054.9ZM792.5,1055.1 792.8,1054.9 808.3,1057.8 808.2,1058.5 793.4,1058.5 792.3,1056.6ZM811.0,1036.9 816.8,1037.2 816.8,1039.5 810.8,1038.8ZM816.8,1039.5 816.8,1056.5 810.3,1056.1 810.3,1039.2 810.8,1038.8ZM816.8,1056.5 816.8,1058.5 808.2,1058.5 808.3,1057.8 810.3,1056.1Z"/>
<path fill="#ff7f00" d="M822.9,893.3 822.7,893.2 823.0,893.2ZM828.0,888.1 828.5,887.5 830.2,883.6 830.4,885.7ZM812.0,907.9 810.1,905.0 809.3,891.7 822.7,893.2 822.9,893.3 822.9,893.9 814.9,907.0ZM830.2,883.6 831.8,880.0 838.5,875.3 849.0,877.9 844.6,889.0 830.4,885.7ZM823.0,893.2 824.3,893.4 828.0,888.1 830.4,885.7 844.6,889.0 845.7,891.7 837.5,905.8 836.4,905.8 822.9,893.9 822.9,893.3ZM814.9,907.0 822.9,893.9 836.4,905.8 826.5,914.8ZM826.6,916.9 819.3,910.9 815.1,912.6 812.0,907.9 814.9,907.0 826.5,914.8ZM849.0,877.9 851.0,878.4 857.7,885.0 860.1,891.5 855.3,895.9 845.7,891.7 844.6,889.0ZM845.5,913.1 837.5,905.8 845.7,891.7 855.3,895.9 855.3,895.9 853.5,897.5 856.6,899.5 857.7,902.5ZM839.4,924.3 835.1,920.1 829.3,919.2 826.6,916.9 826.5,914.8 836.4,905.8 837.5,905.8 845.5,913.1 846.1,915.3ZM860.1,891.5 860.2,891.7 855.3,895.9 855.3,895.9ZM856.6,899.5 864.3,904.2 864.6,906.5 857.7,902.5ZM864.6,906.5 865.2,911.7 865.2,911.7 858.0,921.8 856.8,920.9 856.2,921.4 846.1,915.3 845.5,913.1 857.7,902.5ZM856.2,921.4 852.7,924.2 845.1,927.6 841.0,925.9 839.4,924.3 846.1,915.3ZM871.6,909.7 878.5,907.5 882.7,915.1 878.7,919.7ZM865.2,911.7 871.6,909.7 878.7,919.7 871.8,927.6 866.8,927.0 862.9,925.6 858.0,921.8ZM866.8,927.0 864.3,926.7 862.9,925.6Z"/>
<path fill="#ff7f00" d="M921.5,910.6 920.3,909.5 923.6,908.4 924.8,909.3ZM921.5,910.6 916.4,919.1 908.3,916.4 908.5,913.4 920.3,909.5ZM914.2,925.4 907.7,924.2 908.3,916.4 916.4,919.1 916.9,922.4ZM931.2,914.1 936.9,909.2 939.3,914.8 935.9,918.4ZM924.8,909.3 931.1,914.2 931.2,914.1 935.9,918.4 936.3,922.1 929.0,930.2 928.6,930.1 928.0,930.5 916.9,922.4 916.4,919.1 921.5,910.6ZM928.0,930.5 924.4,933.4 916.9,925.9 914.2,925.4 916.9,922.4ZM939.3,914.8 943.4,924.6 936.3,922.1 935.9,918.4ZM943.4,924.6 943.6,925.1 938.6,933.4 929.0,930.2 936.3,922.1Z"/>
<path fill="#ff7f00" d="M913.5,947.9 912.2,947.3 909.4,943.4 916.7,941.7ZM914.0,949.5 913.9,949.6 912.2,947.3 913.5,947.9ZM935.9,944.2 935.9,944.2 925.7,934.7 926.6,933.2 928.6,930.9 937.1,942.8ZM923.5,957.2 914.0,949.5 913.5,947.9 916.7,941.7 920.2,940.9 925.4,934.7 925.7,934.7 935.9,944.2ZM923.5,961.2 922.7,961.8 913.9,949.6 914.0,949.5 923.5,957.2 923.9,960.5ZM937.1,942.8 939.4,945.9 938.7,946.8 935.9,944.2ZM938.7,946.8 933.6,953.4 924.2,960.6 923.9,960.5 923.5,957.2 935.9,944.2 935.9,944.2Z"/>
<path fill="#ffebaf" d="M983.8,751.2 984.3,745.0 983.7,733.9 983.9,734.1 985.4,749.7ZM982.9,764.5 978.4,760.0 983.3,756.8ZM979.5,789.1 977.6,789.2 979.9,786.9ZM983.7,733.9 983.4,728.3 997.8,728.3 996.6,732.3 983.9,734.1ZM996.6,732.3 998.9,734.9 999.9,748.0 1000.0,748.4 995.7,750.9 985.4,749.7 983.9,734.1ZM983.9,765.5 982.9,764.5 983.3,756.8 983.4,756.7 983.8,751.2 985.4,749.7 995.7,750.9 997.1,767.8ZM983.5,783.3 987.6,778.4 986.8,768.4 983.9,765.5 997.1,767.8 997.6,768.2 997.6,768.4 998.3,769.7 994.7,783.3ZM994.8,783.5 995.2,788.4 979.5,789.1 979.9,786.9 983.4,783.4 983.5,783.3 994.7,783.3ZM997.8,728.3 998.4,728.3 998.9,734.9 996.6,732.3ZM1000.0,748.4 1000.1,750.0 997.6,768.2 997.1,767.8 995.7,750.9 1000.0,748.4ZM998.3,769.7 1000.1,773.4 997.2,783.8 994.8,783.5 994.7,783.3ZM997.2,783.8 995.9,788.4 995.2,788.4 994.8,783.5Z"/>
<path fill="#ffebaf" d="M999.4,740.3 998.4,728.3 1013.9,736.8 1013.7,742.3 1012.0,743.7ZM999.0,757.8 1000.1,750.0 999.4,740.3 1012.0,743.7 1008.0,758.2ZM1008.9,768.4 997.6,768.4 999.0,757.8 1008.0,758.2 1008.8,759.0ZM1013.9,736.8 1016.8,738.3 1028.6,740.7 1027.7,745.9 1013.7,742.3ZM1028.7,747.5 1026.2,758.9 1024.7,760.8 1008.8,759.0 1008.0,758.2 1012.0,743.7 1013.7,742.3 1027.7,745.9ZM1024.2,772.8 1010.1,773.4 1009.3,768.4 1008.9,768.4 1008.8,759.0 1024.7,760.8 1022.6,763.4 1024.7,766.2ZM1028.6,740.7 1033.5,741.7 1035.9,747.3 1028.7,747.5 1027.7,745.9ZM1035.9,747.3 1038.5,753.4 1030.1,754.2 1026.2,758.9 1028.7,747.5ZM1024.7,766.2 1029.3,772.5 1024.2,772.8Z"/>
<path fill="#ffebaf" d="M1180.0,575.2 1183.4,570.9 1188.0,575.5 1188.0,576.2 1186.6,576.8ZM1179.9,586.3 1176.7,579.2 1180.0,575.2 1186.6,576.8 1184.7,585.7 1180.4,586.7ZM1193.3,589.5 1190.5,590.1 1184.7,585.7 1186.6,576.8 1188.0,576.2 1189.1,576.5 1190.9,578.4 1195.9,581.7ZM1189.2,592.2 1186.8,593.4 1180.3,587.0 1180.4,586.7 1184.7,585.7 1190.5,590.1ZM1195.9,581.7 1195.9,581.7 1201.8,580.9 1200.1,585.9 1193.5,589.7 1193.3,589.5ZM1193.5,589.7 1190.1,591.7 1189.2,592.2 1190.5,590.1 1193.3,589.5Z"/>
<path fill="#ffebaf" d="M1144.3,609.5 1144.2,609.2 1146.1,606.8 1144.8,609.5ZM1148.2,604.1 1150.1,601.7 1156.7,602.6 1157.5,603.0 1157.3,603.1ZM1146.1,606.8 1148.2,604.1 1157.3,603.1 1158.2,612.7 1156.8,613.4 1155.1,613.4 1154.9,613.4 1145.0,610.0 1144.8,609.5ZM1154.9,613.4 1146.7,615.1 1145.0,611.0 1145.0,610.0ZM1165.5,613.4 1160.2,613.4 1158.2,612.7 1157.3,603.1 1157.5,603.0 1166.7,608.4 1168.1,608.3ZM1160.2,613.4 1156.8,613.4 1158.2,612.7ZM1167.8,617.5 1167.6,613.4 1165.5,613.4 1168.1,608.3 1175.1,607.7 1175.2,607.7 1178.1,611.2 1174.0,619.0 1172.7,619.5ZM1172.7,619.5 1171.1,630.3 1168.4,631.3 1167.8,617.5ZM1182.1,599.7 1186.8,595.1 1192.6,598.4 1193.0,600.2 1192.3,605.5 1188.4,606.9ZM1178.1,611.2 1175.2,607.7 1175.2,607.7 1176.7,607.6 1181.7,600.1 1182.1,599.7 1188.4,606.9 1185.3,611.2ZM1174.0,619.0 1178.1,611.2 1185.3,611.2 1186.6,615.4 1181.5,622.6ZM1172.7,619.5 1174.0,619.0 1181.5,622.6 1182.4,625.4 1177.7,631.2 1174.3,631.4 1171.1,630.3ZM1174.3,631.4 1168.4,631.8 1168.4,631.3 1171.1,630.3ZM1193.0,600.2 1194.3,606.4 1192.3,605.5ZM1194.3,606.4 1195.1,610.1 1195.7,618.6 1193.1,620.2 1186.6,615.4 1185.3,611.2 1188.4,606.9 1192.3,605.5ZM1182.4,625.4 1181.5,622.6 1186.6,615.4 1193.1,620.2 1192.6,624.2 1183.4,623.4 1183.4,625.7ZM1183.4,625.7 1183.4,630.9 1177.7,631.2 1182.4,625.4ZM1195.7,618.6 1195.9,621.7 1193.4,624.3 1192.6,624.2 1193.1,620.2Z"/>
<path fill="#ffebaf" d="M1127.4,621.1 1127.5,619.2 1131.7,619.2 1132.6,620.3ZM1117.7,635.4 1117.5,630.1 1123.5,629.5 1124.2,632.2 1122.9,634.9ZM1118.0,645.6 1117.7,635.4 1122.9,634.9 1123.5,640.4ZM1132.6,620.3 1137.5,625.8 1136.6,628.8 1132.0,633.2 1124.2,632.2 1123.5,629.5 1126.7,629.3 1127.4,621.1ZM1134.1,638.1 1133.4,638.4 1133.1,640.6 1128.3,643.2 1123.5,640.4 1122.9,634.9 1124.2,632.2 1132.0,633.2ZM1118.0,646.1 1118.0,645.6 1123.5,640.4 1128.3,643.2 1129.8,651.7 1126.4,653.7ZM1124.8,656.8 1118.4,656.8 1118.0,646.1 1126.4,653.7ZM1144.1,635.7 1141.9,636.5 1136.6,628.8 1137.5,625.8 1138.4,626.8 1139.2,630.9 1144.2,626.8 1145.9,627.1ZM1138.5,641.2 1136.9,640.6 1137.5,636.8 1134.1,638.1 1132.0,633.2 1136.6,628.8 1141.9,636.5ZM1139.7,646.6 1135.9,646.8 1136.9,640.6 1138.5,641.2 1140.4,645.8ZM1133.1,640.6 1132.5,646.8 1130.4,651.8 1129.8,651.7 1128.3,643.2ZM1129.8,651.7 1130.4,651.8 1128.4,656.8 1124.8,656.8 1126.4,653.7ZM1150.0,627.8 1153.4,628.4 1155.6,631.1ZM1155.6,631.1 1156.1,631.6 1154.0,637.5 1153.4,637.6 1153.4,638.0 1152.2,638.7 1144.1,635.7 1145.9,627.1 1150.0,627.8ZM1148.8,646.2 1143.4,646.4 1140.4,645.8 1138.5,641.2 1141.9,636.5 1144.1,635.7 1152.2,638.7ZM1143.4,646.4 1139.7,646.6 1140.4,645.8ZM1156.1,631.6 1157.6,633.4 1158.4,636.8 1154.0,637.5ZM1153.4,638.0 1153.4,645.9 1148.8,646.2 1152.2,638.7Z"/>
<path fill="#ffebaf" d="M1221.6,633.9 1221.8,631.8 1223.7,631.8 1223.1,634.1 1222.8,634.3ZM1221.2,638.4 1221.6,633.9 1222.8,634.3ZM1219.8,650.1 1219.3,650.1 1220.4,644.5 1221.4,647.3ZM1223.7,631.8 1228.5,631.8 1232.8,637.5 1223.1,634.1ZM1220.4,644.5 1221.0,641.8 1221.2,638.4 1222.8,634.3 1223.1,634.1 1232.8,637.5 1232.8,637.5 1229.7,647.3 1221.4,647.3ZM1231.1,649.4 1219.8,650.1 1221.4,647.3 1229.7,647.3ZM1232.8,637.5 1233.5,638.4 1236.0,646.8 1233.5,649.3 1231.1,649.4 1229.7,647.3Z"/>
<path fill="#ffebaf" d="M1283.1,606.6 1282.7,605.1 1285.2,600.1 1288.6,599.8 1288.7,600.2ZM1288.6,599.8 1295.2,599.2 1298.2,603.8 1294.4,605.5 1288.7,600.2ZM1284.6,612.9 1283.1,606.6 1288.7,600.2 1294.4,605.5 1292.8,612.0ZM1293.8,613.0 1293.5,615.1 1285.2,615.1 1284.6,612.9 1292.8,612.0ZM1298.2,603.8 1298.5,604.2 1294.4,608.4 1293.8,613.0 1292.8,612.0 1294.4,605.5Z"/>
<path fill="#ffebaf" d="M1304.4,704.4 1304.2,702.6 1308.6,702.2 1308.1,703.7ZM1309.1,708.4 1305.0,708.4 1304.4,704.4 1308.1,703.7 1310.0,707.3ZM1316.7,708.5 1316.7,708.4 1312.9,708.4 1310.0,707.3 1308.1,703.7 1308.6,702.2 1315.0,701.7 1317.0,699.1 1318.5,701.5ZM1312.9,708.4 1309.1,708.4 1310.0,707.3ZM1329.4,692.5 1330.8,690.0 1330.8,691.6ZM1317.0,699.1 1320.0,695.1 1327.6,694.3 1327.7,699.7 1324.0,702.2 1318.5,701.5ZM1318.5,701.5 1324.0,702.2 1325.7,709.0 1316.8,708.7 1316.7,708.5ZM1319.6,717.3 1318.4,715.1 1316.8,708.7 1325.7,709.0 1326.6,709.8 1322.7,718.0 1321.4,718.1ZM1320.9,719.6 1319.6,717.3 1321.4,718.1ZM1330.8,691.6 1330.8,690.0 1331.7,688.4 1338.4,685.9 1339.0,686.5 1339.8,688.2 1336.8,693.7ZM1327.6,694.3 1328.4,694.2 1329.4,692.5 1330.8,691.6 1336.8,693.7 1338.5,696.2 1334.9,701.9 1332.8,703.2 1327.7,699.7ZM1332.8,703.2 1331.8,709.5 1326.6,709.8 1325.7,709.0 1324.0,702.2 1327.7,699.7ZM1331.8,709.5 1332.6,710.3 1332.0,717.7 1331.9,717.8 1331.7,716.7 1325.0,717.6 1323.9,718.7 1322.7,718.0 1326.6,709.8ZM1323.9,718.7 1321.7,720.9 1320.9,719.6 1321.4,718.1 1322.7,718.0ZM1339.0,686.5 1340.7,688.2 1339.8,688.2ZM1340.7,688.2 1341.7,689.2 1346.6,688.4 1347.7,691.2 1345.6,696.1 1343.5,697.3 1338.5,696.2 1336.8,693.7 1339.8,688.2ZM1334.9,701.9 1338.5,696.2 1343.5,697.3 1344.2,703.7 1341.2,706.0ZM1332.8,703.2 1334.9,701.9 1341.2,706.0 1339.8,711.2 1332.6,710.3 1331.8,709.5ZM1332.6,710.3 1339.8,711.2 1341.9,713.5 1336.6,720.4 1332.0,717.7ZM1336.1,725.4 1332.5,721.7 1331.9,717.8 1332.0,717.7 1336.6,720.4 1337.1,721.8ZM1346.6,688.4 1346.7,688.4 1351.3,691.3 1347.7,691.2ZM1351.3,691.3 1353.4,692.6 1353.8,692.8 1355.4,698.1 1352.5,699.7 1345.6,696.1 1347.7,691.2ZM1343.5,697.3 1345.6,696.1 1352.5,699.7 1351.1,707.4 1344.2,703.7ZM1341.2,706.0 1344.2,703.7 1351.1,707.4 1351.1,707.5 1347.6,715.0 1341.9,713.5 1339.8,711.2ZM1348.3,716.6 1347.9,718.7 1346.7,718.4 1342.8,722.4 1337.1,721.8 1336.6,720.4 1341.9,713.5 1347.6,715.0ZM1342.8,722.4 1341.7,723.4 1336.7,725.9 1336.1,725.4 1337.1,721.8ZM1353.8,692.8 1361.7,696.7 1361.8,696.9 1360.7,698.7 1355.4,698.1ZM1362.0,702.6 1359.2,708.1 1358.7,708.4 1351.1,707.5 1351.1,707.4 1352.5,699.7 1355.4,698.1 1360.7,698.7ZM1359.0,718.5 1348.3,716.6 1347.6,715.0 1351.1,707.5 1358.7,708.4 1359.3,718.3ZM1351.7,726.7 1353.4,720.1 1347.9,718.7 1348.3,716.6 1359.0,718.5 1356.4,726.5 1354.5,727.5ZM1354.4,729.0 1351.7,726.8 1351.7,726.7 1354.5,727.5ZM1361.8,696.9 1366.3,703.6 1362.0,702.6 1360.7,698.7ZM1366.3,703.6 1368.4,706.7 1369.2,708.4 1368.8,711.0 1367.9,711.8 1359.2,708.1 1362.0,702.6ZM1365.8,718.0 1365.1,718.4 1365.0,719.0 1359.3,718.3 1358.7,708.4 1359.2,708.1 1367.9,711.8ZM1356.4,726.5 1359.0,718.5 1359.3,718.3 1365.0,719.0 1363.4,729.3 1362.4,729.5ZM1354.5,727.5 1356.4,726.5 1362.4,729.5 1356.7,730.9 1354.4,729.0ZM1369.2,708.4 1370.6,711.6 1368.8,711.0ZM1370.6,711.6 1371.7,714.2 1365.8,718.0 1367.9,711.8 1368.8,711.0Z"/>
<path fill="#b2ffb2" d="M1353.6,676.9 1354.2,675.9 1362.2,672.7 1358.9,677.5 1356.0,678.4ZM1347.5,688.8 1346.7,688.4 1353.6,676.9 1356.0,678.4 1351.9,690.2 1351.9,690.2ZM1351.4,691.3 1347.5,688.8 1351.9,690.2ZM1370.8,668.2 1376.8,664.2 1388.8,662.4 1389.5,663.6 1378.5,673.0ZM1362.2,672.7 1366.7,670.9 1370.8,668.2 1378.5,673.0 1378.6,673.4 1374.6,686.1 1371.2,687.1 1358.9,677.5ZM1371.2,687.1 1365.2,696.8 1351.9,690.2 1356.0,678.4 1358.9,677.5ZM1363.5,699.4 1361.7,696.7 1353.4,692.6 1351.4,691.3 1351.9,690.2 1351.9,690.2 1365.2,696.8 1365.3,697.3ZM1388.8,662.4 1393.4,661.7 1398.6,661.2 1394.2,665.1 1389.5,663.6ZM1389.5,663.6 1394.2,665.1 1396.3,669.0 1395.4,681.2 1392.6,682.3 1378.6,673.4 1378.5,673.0ZM1386.0,691.0 1383.0,691.3 1374.6,686.1 1378.6,673.4 1392.6,682.3ZM1383.0,691.3 1377.2,706.4 1376.2,707.0 1365.3,697.3 1365.2,696.8 1371.2,687.1 1374.6,686.1ZM1373.9,714.5 1373.2,714.7 1368.4,706.7 1363.5,699.4 1365.3,697.3 1376.2,707.0ZM1414.3,660.4 1417.5,660.6 1416.6,661.6ZM1398.6,661.2 1410.1,660.0 1414.3,660.4 1416.6,661.6 1417.3,666.1 1412.8,672.4 1396.3,669.0 1394.2,665.1ZM1403.5,685.4 1395.4,681.2 1396.3,669.0 1412.8,672.4 1412.6,674.4ZM1386.0,691.0 1392.6,682.3 1395.4,681.2 1403.5,685.4 1405.3,690.3 1396.7,700.4 1395.5,700.6ZM1386.0,691.0 1395.5,700.6 1390.9,706.9 1377.2,706.4 1383.0,691.3ZM1377.2,706.4 1390.9,706.9 1392.6,714.2 1385.6,721.1 1380.1,718.4 1375.1,715.9 1373.9,714.5 1376.2,707.0ZM1375.1,715.9 1373.4,715.1 1373.2,714.7 1373.9,714.5ZM1432.6,670.6 1428.4,671.3 1417.3,666.1 1416.6,661.6 1417.5,660.6 1420.1,660.9 1425.1,665.0 1427.6,670.9 1432.6,670.1ZM1428.4,671.3 1425.6,684.1 1421.3,685.8 1412.6,674.4 1412.8,672.4 1417.3,666.1ZM1421.3,685.8 1417.4,692.7 1414.7,694.2 1405.3,690.3 1403.5,685.4 1412.6,674.4ZM1405.9,707.7 1396.7,700.4 1405.3,690.3 1414.7,694.2 1414.2,704.0ZM1395.5,700.6 1396.7,700.4 1405.9,707.7 1404.1,718.4 1402.8,718.8 1392.6,714.2 1390.9,706.9ZM1394.3,730.4 1393.4,728.4 1386.8,721.7 1385.6,721.1 1392.6,714.2 1402.8,718.8 1395.1,730.9 1395.0,730.9ZM1432.6,670.6 1432.6,670.1 1448.3,667.5 1448.3,668.1 1443.4,672.5 1440.5,673.4ZM1432.6,670.6 1440.5,673.4 1436.0,688.3 1425.6,684.1 1428.4,671.3ZM1421.3,685.8 1425.6,684.1 1436.0,688.3 1437.3,690.9 1431.2,699.8 1417.4,692.7ZM1417.4,692.7 1431.2,699.8 1431.2,701.8 1424.1,711.6 1422.6,711.9 1414.2,704.0 1414.7,694.2ZM1405.9,707.7 1414.2,704.0 1422.6,711.9 1416.9,721.4 1412.0,722.1 1404.1,718.4ZM1412.0,722.1 1407.2,737.2 1395.1,730.9 1402.8,718.8 1404.1,718.4ZM1407.2,737.2 1408.1,739.1 1405.0,744.9 1403.4,744.3 1396.8,735.9 1394.7,731.4 1395.0,730.9 1395.1,730.9ZM1448.3,667.5 1453.5,666.7 1461.8,665.9 1463.9,667.7 1462.7,673.4 1448.3,668.1ZM1448.3,668.1 1462.7,673.4 1463.2,674.1 1456.6,686.6 1452.4,688.5 1443.4,672.5ZM1440.5,673.4 1443.4,672.5 1452.4,688.5 1448.6,693.5 1437.3,690.9 1436.0,688.3ZM1437.3,690.9 1448.6,693.5 1448.9,694.8 1441.0,707.6 1431.2,701.8 1431.2,699.8ZM1431.2,701.8 1441.0,707.6 1441.2,708.3 1435.6,718.7 1424.1,711.6ZM1422.6,711.9 1424.1,711.6 1435.6,718.7 1435.7,719.0 1424.7,730.0 1423.8,730.0 1416.9,721.4ZM1412.0,722.1 1416.9,721.4 1423.8,730.0 1418.0,740.2 1408.1,739.1 1407.2,737.2ZM1408.1,739.1 1418.0,740.2 1423.5,748.5 1414.8,756.5 1414.3,755.1 1410.1,746.8 1405.0,744.9ZM1463.9,667.7 1473.5,675.9 1474.3,676.5 1473.7,677.1 1463.2,674.1 1462.7,673.4ZM1473.7,677.1 1475.1,681.4 1468.2,693.3 1467.3,693.5 1456.6,686.6 1463.2,674.1ZM1448.6,693.5 1452.4,688.5 1456.6,686.6 1467.3,693.5 1460.4,704.8 1457.9,705.4 1448.9,694.8ZM1441.0,707.6 1448.9,694.8 1457.9,705.4 1453.6,713.7 1441.2,708.3ZM1441.9,724.1 1435.7,719.0 1435.6,718.7 1441.2,708.3 1453.6,713.7 1453.8,717.9 1448.2,723.5ZM1436.1,736.2 1424.7,730.0 1435.7,719.0 1441.9,724.1ZM1436.1,736.2 1437.4,740.3 1433.5,748.3 1427.1,749.1 1423.5,748.5 1418.0,740.2 1423.8,730.0 1424.7,730.0ZM1427.1,749.1 1426.1,767.2 1416.1,760.5 1414.8,756.5 1423.5,748.5ZM1423.0,771.3 1417.6,765.1 1416.1,760.5 1426.1,767.2 1426.6,768.0ZM1486.9,688.7 1485.0,688.9 1475.1,681.4 1473.7,677.1 1474.3,676.5 1486.9,685.9 1488.1,686.9ZM1485.0,688.9 1479.9,698.9 1477.4,699.9 1468.2,693.3 1475.1,681.4ZM1473.5,708.4 1470.6,709.2 1460.4,704.8 1467.3,693.5 1468.2,693.3 1477.4,699.9ZM1466.7,722.2 1463.3,722.5 1453.8,717.9 1453.6,713.7 1457.9,705.4 1460.4,704.8 1470.6,709.2ZM1454.0,738.5 1448.2,723.5 1453.8,717.9 1463.3,722.5 1459.4,736.1ZM1436.1,736.2 1441.9,724.1 1448.2,723.5 1454.0,738.5 1453.1,740.2 1437.4,740.3ZM1437.4,740.3 1453.1,740.2 1454.0,744.0 1444.8,756.3 1440.2,756.9 1433.5,748.3ZM1433.5,748.3 1440.2,756.9 1436.3,770.1 1426.6,768.0 1426.1,767.2 1427.1,749.1ZM1426.6,768.0 1436.3,770.1 1436.7,770.7 1430.1,784.5 1428.3,783.9 1427.6,778.5 1423.5,771.8 1423.0,771.3ZM1430.3,785.1 1428.5,785.1 1428.3,783.9 1430.1,784.5ZM1497.3,696.2 1486.9,688.7 1488.1,686.9 1498.3,695.9ZM1488.8,705.1 1479.9,698.9 1485.0,688.9 1486.9,688.7 1497.3,696.2 1493.7,704.1ZM1488.8,705.1 1482.8,715.2 1482.0,715.3 1473.5,708.4 1477.4,699.9 1479.9,698.9ZM1482.0,715.3 1473.7,726.1 1466.7,722.2 1470.6,709.2 1473.5,708.4ZM1473.7,726.1 1476.1,731.9 1472.7,738.3 1459.4,736.1 1463.3,722.5 1466.7,722.2ZM1467.7,748.1 1465.2,750.9 1464.8,752.3 1464.4,752.9 1463.0,753.1 1454.0,744.0 1453.1,740.2 1454.0,738.5 1459.4,736.1 1472.7,738.3 1473.1,740.4ZM1454.0,744.0 1463.0,753.1 1459.0,759.5 1455.5,761.6 1444.8,756.3ZM1455.5,761.6 1455.2,761.8 1448.5,766.8 1446.0,773.5 1444.6,774.7 1436.7,770.7 1436.3,770.1 1440.2,756.9 1444.8,756.3ZM1444.6,774.7 1440.2,778.5 1435.1,785.1 1430.3,785.1 1430.1,784.5 1436.7,770.7ZM1498.3,695.9 1500.2,697.6 1493.9,704.5 1493.7,704.1 1497.3,696.2ZM1493.9,704.5 1491.9,706.7 1487.7,715.1 1486.9,718.0 1482.8,715.2 1488.8,705.1 1493.7,704.1ZM1486.9,718.0 1484.4,726.8 1481.4,731.9 1476.1,731.9 1473.7,726.1 1482.0,715.3 1482.8,715.2ZM1473.1,740.4 1472.7,738.3 1476.1,731.9 1481.4,731.9 1478.5,736.8 1474.0,741.3ZM1474.0,741.3 1471.8,743.4 1467.7,748.1 1473.1,740.4ZM1464.8,752.3 1464.6,753.0 1464.4,752.9ZM1464.6,753.0 1463.5,756.8 1459.0,759.5 1463.0,753.1 1464.4,752.9Z"/>
<path fill="#ffebaf" d="M1597.4,310.8 1595.8,306.7 1599.6,305.1 1600.6,307.7ZM1600.7,322.4 1599.2,320.0 1598.3,313.3 1597.4,310.8 1600.6,307.7 1601.7,308.3 1606.8,319.1ZM1602.8,332.5 1605.0,331.7 1603.3,326.7 1600.7,322.4 1606.8,319.1 1610.2,320.7 1610.7,332.0 1609.4,333.0ZM1604.7,346.2 1600.0,340.0 1598.3,334.2 1602.8,332.5 1609.4,333.0 1609.1,343.4ZM1608.9,358.6 1606.7,355.0 1605.0,346.7 1604.7,346.2 1609.1,343.4 1613.0,345.2 1617.9,354.8ZM1617.9,354.8 1619.2,355.0 1619.4,358.5 1610.8,361.7 1608.9,358.6ZM1600.5,301.0 1598.3,295.0 1597.5,286.7 1603.3,287.5 1604.1,287.7 1607.8,292.8ZM1599.6,305.1 1601.7,304.2 1600.5,301.0 1607.8,292.8 1611.8,293.6 1615.4,304.4 1614.8,306.1 1601.7,308.3 1600.6,307.7ZM1614.8,306.1 1619.1,315.9 1610.2,320.7 1606.8,319.1 1601.7,308.3ZM1622.5,329.7 1620.8,333.0 1610.7,332.0 1610.2,320.7 1619.1,315.9 1620.1,316.2ZM1620.8,333.0 1623.8,338.5 1623.6,339.0 1613.0,345.2 1609.1,343.4 1609.4,333.0 1610.7,332.0ZM1623.6,339.0 1624.9,353.5 1619.2,355.0 1617.9,354.8 1613.0,345.2ZM1624.9,353.5 1625.7,353.7 1620.0,358.3 1619.4,358.5 1619.2,355.0ZM1611.9,271.2 1611.7,270.0 1612.4,264.8 1613.6,268.9 1612.3,271.2ZM1613.4,277.6 1613.3,277.7 1611.9,271.2 1612.3,271.2ZM1618.5,289.0 1611.8,293.6 1607.8,292.8 1604.1,287.7 1611.7,290.0 1614.2,281.7 1613.3,277.7 1613.4,277.6 1617.4,280.5ZM1615.4,304.4 1611.8,293.6 1618.5,289.0 1619.7,289.4 1624.0,301.3ZM1628.7,309.4 1628.3,310.8 1628.7,312.2 1625.6,315.0 1620.1,316.2 1619.1,315.9 1614.8,306.1 1615.4,304.4 1624.0,301.3 1628.7,302.0ZM1622.5,329.7 1620.1,316.2 1625.6,315.0 1633.5,325.8ZM1622.5,329.7 1633.5,325.8 1634.0,325.9 1636.9,335.9 1634.8,338.5 1623.8,338.5 1620.8,333.0ZM1623.8,338.5 1634.8,338.5 1637.0,348.0 1635.0,350.0 1628.3,351.7 1625.7,353.7 1624.9,353.5 1623.6,339.0ZM1614.8,255.4 1615.8,253.3 1613.3,246.7 1616.7,243.3 1616.8,243.2 1619.3,244.4 1619.5,253.4 1619.2,253.7ZM1612.4,264.8 1613.3,258.3 1614.8,255.4 1619.2,253.7 1623.7,266.8 1613.6,268.9ZM1623.7,266.8 1625.1,267.5 1626.8,274.8 1626.0,276.3 1617.4,280.5 1613.4,277.6 1612.3,271.2 1613.6,268.9ZM1627.6,280.1 1626.7,285.0 1626.7,289.3 1619.7,289.4 1618.5,289.0 1617.4,280.5 1626.0,276.3ZM1626.7,289.3 1626.7,293.3 1632.8,298.0 1632.9,298.6 1628.7,302.0 1624.0,301.3 1619.7,289.4ZM1633.6,298.9 1635.0,301.7 1630.0,305.0 1628.7,309.4 1628.7,302.0 1632.9,298.6 1633.5,298.8ZM1628.7,312.2 1630.0,316.7 1636.7,318.3 1639.5,321.8 1634.0,325.9 1633.5,325.8 1625.6,315.0ZM1639.5,321.8 1643.3,326.7 1646.7,333.3 1647.9,333.0 1646.3,334.9 1636.9,335.9 1634.0,325.9ZM1634.8,338.5 1636.9,335.9 1646.3,334.9 1647.9,340.4 1645.0,343.3 1640.0,345.0 1637.0,348.0ZM1620.0,230.2 1620.0,228.3 1622.9,229.5ZM1622.9,229.5 1624.2,230.0 1625.4,233.1 1623.6,241.2 1619.3,244.4 1616.8,243.2 1620.0,236.7 1620.0,230.2ZM1619.3,244.4 1623.6,241.2 1633.0,245.6 1631.3,254.1 1619.5,253.4ZM1619.5,253.4 1631.3,254.1 1634.6,258.3 1633.3,259.2 1630.0,263.3 1630.1,264.3 1625.1,267.5 1623.7,266.8 1619.2,253.7ZM1630.1,264.3 1630.8,270.0 1629.0,275.0 1626.8,274.8 1625.1,267.5ZM1629.0,275.0 1628.3,276.7 1627.6,280.1 1626.0,276.3 1626.8,274.8ZM1653.0,331.5 1657.2,330.3 1656.1,331.7ZM1646.3,334.9 1647.9,333.0 1653.0,331.5 1656.1,331.7 1657.9,334.4 1650.0,338.3 1647.9,340.4ZM1625.4,233.1 1628.3,240.0 1635.0,240.0 1636.6,243.2 1633.0,245.6 1623.6,241.2ZM1636.6,243.2 1640.0,250.0 1638.3,255.8 1634.6,258.3 1631.3,254.1 1633.0,245.6ZM1657.2,330.3 1658.3,330.0 1660.0,333.3 1657.9,334.4 1656.1,331.7Z"/>
<path fill="#ffebaf" d="M1556.1,427.4 1556.7,426.7 1563.0,419.7 1564.2,420.5 1565.3,421.9 1562.4,429.1 1559.6,429.9ZM1550.5,435.3 1556.1,427.4 1559.6,429.9 1555.5,438.3ZM1554.5,441.4 1548.3,438.3 1550.5,435.3 1555.5,438.3 1555.8,439.4ZM1562.4,429.1 1565.3,421.9 1572.4,431.1 1570.9,434.3 1569.7,434.7ZM1559.6,429.9 1562.4,429.1 1569.7,434.7 1566.4,441.4 1563.9,442.3 1555.8,439.4 1555.5,438.3ZM1563.9,442.3 1562.8,447.1 1558.3,443.3 1554.5,441.4 1555.8,439.4ZM1572.4,431.1 1576.7,436.7 1576.7,436.8 1570.9,434.3ZM1576.7,436.8 1577.4,442.1 1573.4,447.8 1566.4,441.4 1569.7,434.7 1570.9,434.3ZM1573.4,447.8 1573.7,449.4 1570.1,453.2 1570.0,453.3 1562.8,447.1 1563.9,442.3 1566.4,441.4ZM1577.4,442.1 1578.3,448.3 1575.4,450.1 1573.7,449.4 1573.4,447.8ZM1575.4,450.1 1570.1,453.2 1573.7,449.4Z"/>
<path fill="#ffebaf" d="M766.8,665.3 766.8,660.1 771.8,655.1 772.7,656.2 772.8,665.1 772.5,665.4ZM770.8,679.0 766.8,679.3 766.8,665.3 772.5,665.4ZM772.7,656.2 777.6,662.6 786.8,655.9 787.2,665.4 787.1,666.0 786.1,666.9 772.8,665.1ZM787.6,660.8 787.6,650.9 788.4,650.9 788.6,651.1ZM786.9,677.7 770.8,679.0 772.5,665.4 772.8,665.1 786.1,666.9ZM800.0,545.2 800.0,541.0 803.8,541.0 804.0,545.5ZM800.0,559.6 800.0,545.2 804.0,545.5 804.1,545.7 803.9,559.9ZM804.0,560.1 800.0,560.1 800.0,559.6 803.9,559.9 804.0,560.0ZM788.4,650.9 802.8,650.1 800.9,651.8 788.6,651.1ZM787.6,666.0 787.6,660.8 788.6,651.1 800.9,651.8 803.0,666.1 802.7,666.4ZM787.2,665.4 787.2,666.0 787.1,666.0ZM787.6,681.1 787.6,677.6 787.6,666.0 802.7,666.4 800.7,681.5 787.8,681.2ZM787.2,666.0 787.6,677.6 786.9,677.7 786.1,666.9 787.1,666.0ZM801.9,695.2 787.6,694.3 787.6,682.0 787.8,681.2 800.7,681.5 801.3,682.1ZM819.7,466.3 819.7,454.4 820.9,455.7ZM803.8,541.0 818.6,541.0 818.6,543.8 804.1,545.7 804.0,545.5ZM818.6,543.8 819.3,544.6 817.4,560.1 807.1,560.1 804.0,560.0 803.9,559.9 804.1,545.7ZM806.6,635.5 808.5,635.1 809.4,635.9ZM809.4,635.9 812.1,638.2 818.3,637.7 816.9,650.5 803.5,649.8 804.3,635.9 806.6,635.5ZM802.8,650.1 803.5,650.1 803.5,649.8 816.9,650.5 817.7,651.6 817.7,651.7 814.3,651.7 814.3,666.1 803.0,666.1 800.9,651.8ZM814.3,666.1 814.3,676.8 814.1,681.9 801.3,682.1 800.7,681.5 802.7,666.4 803.0,666.1ZM814.1,681.9 813.5,696.0 801.9,695.2 801.3,682.1ZM819.7,454.4 819.7,453.7 834.7,453.7 834.7,445.9 835.1,445.6 835.5,454.8 835.2,455.2 820.9,455.7ZM834.7,470.5 834.7,470.1 820.4,470.1 819.7,469.2 819.7,466.3 820.9,455.7 835.2,455.2 835.6,469.6ZM825.8,486.3 825.8,485.1 834.3,485.1 834.3,485.5ZM825.8,500.5 825.8,486.3 834.3,485.5 834.4,485.5 835.2,499.4 834.0,500.8ZM834.1,503.4 825.8,503.4 825.8,500.5 834.0,500.8ZM824.2,545.3 824.2,533.8 835.0,533.8 833.7,546.0 833.0,546.7ZM818.6,541.0 823.3,541.0 823.3,545.2 819.3,544.6 818.6,543.8ZM824.2,560.6 824.2,545.3 833.0,546.7 832.8,560.1ZM823.3,545.2 823.3,560.1 817.4,560.1 819.3,544.6ZM833.6,564.3 824.2,564.3 824.2,560.6 832.8,560.1 834.0,561.4ZM825.8,606.3 825.8,598.4 833.0,598.4 833.1,606.0ZM834.1,615.1 825.8,615.0 825.8,606.3 833.1,606.0 834.3,607.2ZM829.2,652.2 829.2,652.1 831.8,652.1 831.6,652.3ZM818.3,637.7 819.3,637.6 819.3,637.6 819.6,637.6 820.0,637.6 820.9,637.7 832.2,638.3 833.4,646.9 833.4,650.6 832.2,651.7 821.1,651.7 817.7,651.6 816.9,650.5ZM831.6,652.3 832.7,666.4 829.2,666.8 829.2,652.2ZM821.1,651.7 817.7,651.7 817.7,651.6ZM832.7,666.4 834.1,667.5 833.8,671.4 829.2,671.4 829.2,666.8ZM842.4,440.1 849.4,434.9 849.8,439.0ZM835.1,445.6 842.4,440.1 849.8,439.0 850.5,439.6 848.8,454.9 835.5,454.8ZM835.6,469.6 835.2,455.2 835.5,454.8 848.8,454.9 850.8,456.6 850.0,471.1 849.7,471.4ZM834.3,485.1 834.7,485.1 834.7,470.5 835.6,469.6 849.7,471.4 848.9,484.7 834.4,485.5 834.3,485.5ZM849.5,499.8 835.2,499.4 834.4,485.5 848.9,484.7 849.0,484.9ZM844.2,515.4 844.2,503.4 834.1,503.4 834.0,500.8 835.2,499.4 849.5,499.8 849.7,500.0 848.5,515.4 848.4,515.6ZM848.4,515.9 844.2,515.9 844.2,515.4 848.4,515.6ZM846.3,546.8 849.8,546.8 849.6,547.0ZM835.0,533.8 843.4,533.8 843.4,546.6 833.7,546.0ZM843.4,546.6 843.4,546.8 846.3,546.8 849.6,547.0 849.1,560.1 847.6,561.8 834.0,561.4 832.8,560.1 833.0,546.7 833.7,546.0ZM834.0,561.4 847.6,561.8 848.1,565.2 843.4,565.2 843.4,564.3 833.6,564.3ZM833.0,598.4 845.4,598.4 845.4,595.3 847.8,595.4 847.1,605.7 834.3,607.2 833.1,606.0ZM848.2,615.2 834.1,615.1 834.3,607.2 847.1,605.7 848.4,606.9ZM834.2,619.9 834.2,615.9 848.2,616.2 848.1,622.0 847.8,622.3ZM846.5,633.2 834.2,633.1 834.2,619.9 847.8,622.3ZM832.2,638.3 833.5,638.4 833.4,641.0 833.4,646.9ZM831.6,652.3 831.8,652.1 847.1,652.1 847.5,665.6 846.8,666.4 834.1,667.5 832.7,666.4ZM833.4,650.6 833.4,651.7 832.2,651.7ZM847.6,671.4 833.8,671.4 834.1,667.5 846.8,666.4ZM849.8,439.0 849.4,434.9 849.7,434.7 850.8,439.7 850.5,439.6ZM857.4,440.0 863.9,440.0 863.9,440.4ZM850.8,439.7 850.9,440.0 857.4,440.0 863.9,440.4 864.2,440.7 864.9,455.2 850.8,456.6 848.8,454.9 850.5,439.6ZM865.3,471.6 850.0,471.1 850.8,456.6 864.9,455.2 865.0,455.3 865.8,471.1ZM865.3,471.6 864.8,486.0 849.0,484.9 848.9,484.7 849.7,471.4 850.0,471.1ZM849.7,500.0 849.5,499.8 849.0,484.9 864.8,486.0 865.3,486.5 863.1,499.9ZM863.4,516.0 863.4,515.9 862.6,515.9 848.5,515.4 849.7,500.0 863.1,499.9 863.4,500.3 863.5,503.4 863.4,503.4 863.4,505.1 863.5,505.1 863.7,515.7 863.4,516.0ZM862.6,515.9 848.4,515.9 848.4,515.6 848.5,515.4ZM863.4,516.5 863.4,516.0 863.4,516.0ZM849.8,546.8 864.1,546.8 863.6,561.1 849.1,560.1 849.6,547.0ZM847.6,561.8 849.1,560.1 863.6,561.1 865.0,562.7 863.0,575.7 862.5,576.2 850.9,576.0 850.9,565.2 848.1,565.2ZM862.6,576.8 850.9,576.8 850.9,576.0 862.5,576.2ZM847.8,595.4 862.3,595.7 863.0,607.1 848.4,606.9 847.1,605.7ZM863.1,620.6 861.9,621.9 848.1,622.0 848.2,616.2 863.2,616.6ZM863.3,615.3 848.2,615.2 848.4,606.9 863.0,607.1 863.4,607.6ZM855.9,637.6 855.9,633.4 846.5,633.2 847.8,622.3 848.1,622.0 861.9,621.9 863.2,637.4ZM855.9,651.5 855.9,637.6 863.2,637.4 863.5,637.6 863.3,651.4 863.2,651.5ZM863.2,652.4 855.9,652.1 855.9,651.5 863.2,651.5ZM847.1,652.1 849.2,652.1 849.2,665.6 847.5,665.6ZM846.8,666.4 847.5,665.6 849.2,665.6 849.2,671.4 847.6,671.4ZM863.9,440.0 873.2,440.0 864.2,440.7 863.9,440.4ZM879.4,455.0 879.2,455.2 865.0,455.3 864.9,455.2 864.2,440.7 873.2,440.0 880.4,440.0 880.7,440.3ZM865.8,471.1 865.0,455.3 879.2,455.2 880.3,470.6 879.5,471.4ZM865.3,471.6 865.8,471.1 879.5,471.4 880.5,485.2 878.7,487.3 865.3,486.5 864.8,486.0ZM878.9,501.9 863.4,500.3 863.1,499.9 865.3,486.5 878.7,487.3 880.8,500.2ZM863.5,505.1 876.7,505.1 876.7,515.8 863.7,515.7ZM878.8,503.4 863.5,503.4 863.4,500.3 878.9,501.9ZM876.7,515.8 876.7,523.4 863.4,523.4 863.4,516.5 863.4,516.0 863.7,515.7ZM877.6,546.3 877.6,536.0 879.1,536.0 879.0,544.9ZM864.1,546.8 877.4,546.8 878.4,560.9 878.1,561.2 865.0,562.7 863.6,561.1ZM878.1,561.2 878.6,569.3 877.6,569.3 877.6,565.2 868.4,565.2 868.4,570.2 878.6,570.2 878.9,576.5 863.0,575.7 865.0,562.7ZM868.4,590.9 868.4,580.0 868.4,576.8 862.6,576.8 862.5,576.2 863.0,575.7 878.9,576.5 879.1,576.6 879.1,590.1 877.7,591.3ZM862.3,595.7 868.4,595.8 868.4,590.9 877.7,591.3 878.2,605.8 878.1,606.0 863.4,607.6 863.0,607.1ZM879.2,621.2 878.2,622.2 863.1,620.6 863.2,616.6 878.9,617.0ZM878.8,615.6 867.6,615.4 863.3,615.3 863.4,607.6 878.1,606.0ZM878.2,622.2 878.3,626.9 874.2,629.2 875.1,635.1 873.2,636.9 863.5,637.6 863.2,637.4 861.9,621.9 863.1,620.6ZM873.2,636.9 872.6,637.6 873.4,646.7 868.5,651.6 863.3,651.4 863.5,637.6ZM868.5,651.6 867.6,652.6 863.2,652.4 863.2,651.5 863.3,651.4ZM894.6,424.8 880.9,424.6 880.9,423.3 888.4,422.5 894.7,424.1ZM895.0,440.7 894.6,441.0 880.7,440.3 880.4,440.0 880.9,440.0 880.9,424.6 894.6,424.8 896.2,426.3ZM879.4,455.0 880.7,440.3 894.6,441.0 895.1,454.5 894.0,455.8ZM879.4,455.0 894.0,455.8 894.4,469.8 880.3,470.6 879.2,455.2ZM879.5,471.4 880.3,470.6 894.4,469.8 894.8,470.2 895.9,484.1 895.0,485.1 880.5,485.2ZM893.8,501.3 880.8,500.2 878.7,487.3 880.5,485.2 895.0,485.1 895.0,500.1ZM893.9,515.8 887.6,516.3 884.2,511.8 887.6,505.9 894.1,505.9 894.9,514.8ZM893.9,503.4 878.8,503.4 878.9,501.9 880.8,500.2 893.8,501.3ZM894.1,521.8 891.7,521.8 887.6,516.3 893.9,515.8ZM892.6,530.7 891.7,528.4 894.3,525.9 894.4,530.7ZM879.1,536.0 894.6,536.0 892.6,530.7 894.4,530.7 895.4,531.5 893.9,546.9 879.0,544.9ZM879.0,544.9 893.9,546.9 894.2,547.2 894.5,560.6 893.7,561.3 878.4,560.9 877.4,546.8 877.6,546.8 877.6,546.3ZM893.7,561.3 892.7,575.0 890.9,575.2 890.9,569.3 878.6,569.3 878.1,561.2 878.4,560.9ZM878.6,570.2 890.1,570.2 890.1,575.3 879.1,576.6 878.9,576.5ZM894.5,589.9 892.9,591.4 879.1,590.1 879.1,576.6 890.1,575.3 890.1,580.0 890.9,580.0 890.9,575.2 892.7,575.0 894.5,576.9ZM892.9,606.2 878.2,605.8 877.7,591.3 879.1,590.1 892.9,591.4 893.9,605.1ZM878.9,617.0 880.9,617.0 880.5,621.1 879.2,621.2ZM892.9,615.9 888.4,615.9 878.8,615.6 878.1,606.0 878.2,605.8 892.9,606.2ZM880.5,621.1 880.1,625.9 878.3,626.9 878.2,622.2 879.2,621.2ZM894.7,424.1 895.1,424.2 896.5,426.3 896.2,426.3 894.6,424.8ZM909.6,441.3 907.8,441.2 910.1,440.0 910.7,440.2ZM896.5,426.3 900.1,431.7 900.1,438.4 896.9,440.8 895.0,440.7 896.2,426.3ZM896.9,440.8 896.8,440.9 895.1,440.8 895.1,440.9 905.1,442.5 907.8,441.2 909.6,441.3 909.7,455.2 895.1,454.5 894.6,441.0 895.0,440.7ZM894.0,455.8 895.1,454.5 909.7,455.2 910.2,455.7 908.8,468.8 894.8,470.2 894.4,469.8ZM895.9,484.1 894.8,470.2 908.8,468.8 911.2,471.3 909.6,485.0ZM895.0,500.1 895.0,485.1 895.9,484.1 909.6,485.0 911.0,486.6 908.8,499.9ZM908.1,516.1 894.9,514.8 894.1,505.9 908.4,505.9 908.4,503.4 893.9,503.4 893.8,501.3 895.0,500.1 908.8,499.9 910.3,501.6ZM894.3,525.9 896.8,523.4 908.4,524.2 907.5,531.3 895.4,531.5 894.4,530.7ZM908.6,521.8 908.4,521.8 894.1,521.8 893.9,515.8 894.9,514.8 908.1,516.1 909.2,517.3ZM893.9,546.9 895.4,531.5 907.5,531.3 909.4,533.0 909.4,545.7 894.2,547.2ZM909.4,545.7 909.9,546.2 909.8,561.3 908.7,562.2 894.5,560.6 894.2,547.2ZM894.5,560.6 908.7,562.2 908.6,575.8 894.5,576.9 892.7,575.0 893.7,561.3ZM908.9,590.5 894.5,589.9 894.5,576.9 908.6,575.8 909.1,576.4ZM893.9,605.1 892.9,591.4 894.5,589.9 908.9,590.5 909.5,591.1 907.7,605.8ZM907.6,615.9 892.9,615.9 892.9,606.2 893.9,605.1 907.7,605.8 907.8,605.9ZM909.7,455.2 909.6,441.3 910.7,440.2 915.4,441.4 915.9,448.4 914.3,453.7 915.5,455.6 910.2,455.7ZM915.5,455.6 919.3,461.7 925.5,461.7 925.6,469.9 924.8,470.9 911.2,471.3 908.8,468.8 910.2,455.7ZM911.0,486.6 909.6,485.0 911.2,471.3 924.8,470.9 926.1,484.9 924.0,486.7ZM910.3,501.6 908.8,499.9 911.0,486.6 924.0,486.7 924.5,501.9 923.6,503.0ZM923.4,517.1 923.4,503.4 922.6,503.4 922.6,517.4 909.2,517.3 908.1,516.1 910.3,501.6 923.6,503.0 925.2,514.8ZM908.4,524.2 910.1,524.3 910.1,532.9 909.4,533.0 907.5,531.3ZM922.6,517.4 922.6,521.8 908.6,521.8 909.2,517.3ZM924.4,528.4 923.4,528.4 923.4,519.5ZM910.1,532.9 910.1,535.1 923.9,535.1 924.4,546.6 909.9,546.2 909.4,545.7 909.4,533.0ZM909.9,546.2 924.4,546.6 925.5,547.6 923.5,561.7 923.4,561.8 909.8,561.3ZM923.6,572.7 910.1,572.7 910.1,576.4 909.1,576.4 908.6,575.8 908.7,562.2 909.8,561.3 923.4,561.8ZM910.1,576.4 910.1,591.1 909.5,591.1 908.9,590.5 909.1,576.4ZM910.1,591.1 910.1,598.5 908.9,598.5 909.0,606.0 907.8,605.9 907.7,605.8 909.5,591.1ZM914.8,620.9 914.8,618.7 921.9,618.7 921.6,620.4ZM909.0,606.0 909.3,615.9 907.6,615.9 907.8,605.9ZM914.8,635.6 914.8,620.9 921.6,620.4 924.0,623.3 922.8,635.9ZM923.5,636.7 914.8,636.7 914.8,635.6 922.8,635.9ZM925.5,461.7 941.0,461.7 940.2,470.6 925.6,469.9ZM940.8,485.1 939.3,486.7 926.1,484.9 924.8,470.9 925.6,469.9 940.2,470.6 941.1,471.6ZM924.5,501.9 924.0,486.7 926.1,484.9 939.3,486.7 940.4,499.7ZM925.2,514.8 923.6,503.0 924.5,501.9 940.4,499.7 941.0,500.3 938.8,515.5ZM938.6,528.4 924.4,528.4 923.4,519.5 923.4,517.1 925.2,514.8 938.8,515.5 939.6,516.4ZM923.9,535.1 925.1,535.1 925.1,542.6 939.8,542.6 940.0,545.5 938.8,546.6 925.5,547.6 924.4,546.6ZM938.8,556.8 925.1,556.8 925.1,561.9 923.5,561.7 925.5,547.6 938.8,546.6ZM925.1,561.9 925.1,572.7 923.6,572.7 923.4,561.8 923.5,561.7ZM921.9,618.7 938.5,618.7 939.0,621.5 938.3,622.2 924.0,623.3 921.6,620.4ZM937.9,636.7 923.5,636.7 922.8,635.9 924.0,623.3 938.3,622.2ZM941.0,461.7 954.7,461.7 954.5,470.6 941.1,471.6 940.2,470.6ZM954.5,470.6 956.6,472.7 954.2,485.1 940.8,485.1 941.1,471.6ZM941.0,500.3 940.4,499.7 939.3,486.7 940.8,485.1 954.2,485.1 956.7,487.8 954.9,501.7 954.7,501.9ZM941.0,500.3 954.7,501.9 955.5,515.8 954.1,517.2 939.6,516.4 938.8,515.5ZM953.9,521.8 940.1,521.8 940.1,528.4 938.6,528.4 939.6,516.4 954.1,517.2ZM939.8,542.6 954.9,542.6 954.9,545.9 952.6,547.8 940.0,545.5ZM953.3,556.8 938.8,556.8 938.8,546.6 940.0,545.5 952.6,547.8ZM941.0,605.8 941.0,602.5 953.8,602.5 953.7,607.0ZM952.7,618.7 942.6,618.7 942.6,621.6 939.0,621.5 938.5,618.7 941.0,618.7 941.0,605.8 953.7,607.0 953.9,607.3ZM942.6,621.6 942.6,636.7 937.9,636.7 938.3,622.2 939.0,621.5ZM954.7,461.7 956.8,461.7 969.2,461.7 970.4,470.8 969.3,472.2 956.6,472.7 954.5,470.6ZM971.1,486.7 956.7,487.8 954.2,485.1 956.6,472.7 969.3,472.2 971.5,486.3ZM971.1,486.7 970.7,500.5 969.8,501.4 954.9,501.7 956.7,487.8ZM954.9,501.7 969.8,501.4 970.0,517.0 969.7,517.3 955.5,515.8 954.7,501.9ZM970.0,523.4 956.8,523.4 956.8,521.8 953.9,521.8 954.1,517.2 955.5,515.8 969.7,517.3ZM956.8,531.3 956.8,523.4 970.0,524.1 970.3,531.4 969.7,531.9ZM968.9,537.4 956.8,536.8 956.8,531.3 969.7,531.9ZM954.9,542.6 956.0,542.6 956.0,546.0 954.9,545.9ZM956.2,562.4 956.5,554.3 969.6,554.3 969.6,559.7 967.3,562.1ZM956.0,546.0 956.0,556.8 953.3,556.8 952.6,547.8 954.9,545.9ZM969.1,572.4 956.0,571.8 956.2,562.4 967.3,562.1ZM953.8,602.5 954.8,602.5 954.8,607.3 953.9,607.3 953.7,607.0ZM954.8,607.3 954.8,618.7 952.7,618.7 953.9,607.3ZM957.4,638.4 956.8,638.4 956.0,628.4 967.9,628.4 967.2,637.3ZM968.4,638.4 957.4,638.4 967.2,637.3ZM969.2,461.7 984.3,461.7 984.3,469.7 970.4,470.8ZM984.3,486.3 971.5,486.3 969.3,472.2 970.4,470.8 984.3,469.7 984.3,486.1ZM984.3,486.3 984.3,488.4 984.7,488.4 986.4,502.3 985.7,503.1 970.7,500.5 971.1,486.7 971.5,486.3 984.3,486.3ZM970.7,500.5 985.7,503.1 985.5,504.3 984.3,504.3 984.3,514.0 984.2,515.3 970.0,517.0 969.8,501.4ZM969.7,517.3 970.0,517.0 984.2,515.3 984.3,515.5 984.3,521.1 985.0,520.9 984.2,533.2 970.3,531.4 970.0,524.1 973.5,524.3 976.4,523.4 970.0,523.4ZM972.7,548.2 972.7,537.6 968.9,537.4 969.7,531.9 970.3,531.4 984.2,533.2 984.9,534.0 984.6,546.0ZM984.3,562.5 969.6,559.7 969.6,554.3 972.7,554.3 972.7,548.2 984.6,546.0 986.4,548.0 985.7,561.3ZM975.1,577.2 974.3,572.7 969.1,572.4 967.3,562.1 969.6,559.7 984.3,562.5 982.6,576.5ZM983.8,580.1 975.2,577.7 975.1,577.2 982.6,576.5 983.8,577.5ZM975.0,622.6 975.2,620.9 983.0,621.1 982.7,623.0ZM976.1,638.4 968.4,638.4 967.2,637.3 967.9,628.4 974.3,628.4 975.0,622.6 982.7,623.0 983.5,623.8 983.1,637.9ZM983.2,638.4 976.1,638.4 983.1,637.9 983.2,638.0ZM990.5,441.7 990.5,436.7 1000.9,436.7 1000.6,442.7ZM990.5,455.9 990.5,441.7 1000.6,442.7 1000.8,442.9 1001.2,455.1 999.9,456.5ZM996.5,471.0 996.5,461.7 990.5,461.7 990.5,455.9 999.9,456.5 999.2,470.8ZM996.5,486.8 996.5,471.0 999.2,470.8 1000.8,472.3 1000.9,486.7 1000.7,486.9ZM984.3,486.1 984.3,486.3 984.3,486.3ZM998.8,501.4 997.7,501.2 997.7,501.5 986.4,502.3 984.7,488.4 996.5,488.4 996.5,486.8 1000.7,486.9 1000.8,500.4 999.8,501.4ZM997.7,501.5 997.7,504.3 985.5,504.3 985.7,503.1 986.4,502.3ZM999.8,501.7 998.8,501.4 999.8,501.4ZM994.5,517.9 1001.0,514.7 1001.1,516.6 999.1,518.6ZM984.3,514.0 984.3,515.5 984.2,515.3ZM999.7,532.0 984.9,534.0 984.2,533.2 985.0,520.9 993.5,518.4 994.5,517.9 999.1,518.6 999.9,531.8ZM986.4,548.0 984.6,546.0 984.9,534.0 999.7,532.0 1002.3,547.0 1001.3,547.9ZM985.7,561.3 986.4,548.0 1001.3,547.9 999.9,563.7ZM982.6,576.5 984.3,562.5 985.7,561.3 999.9,563.7 1000.1,563.9 999.1,577.7 998.8,578.0 983.8,577.5ZM990.2,593.1 990.2,583.3 990.2,581.8 983.8,580.1 983.8,577.5 998.8,578.0 998.4,591.5ZM999.8,598.5 990.2,598.5 990.2,595.8 990.2,593.1 998.4,591.5 1000.4,593.4ZM983.0,621.1 991.0,621.4 991.0,614.2 999.5,614.2 1000.1,621.9 998.1,624.0 983.5,623.8 982.7,623.0ZM998.5,638.4 990.3,638.4 983.2,638.0 983.1,637.9 983.5,623.8 998.1,624.0 999.4,637.5ZM990.3,638.4 983.2,638.4 983.2,638.0ZM1015.8,441.3 1000.8,442.9 1000.6,442.7 1000.9,436.7 1015.4,436.7ZM1016.2,441.6 1015.7,457.1 1001.2,455.1 1000.8,442.9 1015.8,441.3ZM1015.7,457.1 1016.1,457.4 1015.0,471.1 1000.8,472.3 999.2,470.8 999.9,456.5 1001.2,455.1ZM1000.9,486.7 1000.8,472.3 1015.0,471.1 1016.6,472.7 1016.9,486.5 1016.9,486.5ZM1000.8,500.4 1000.7,486.9 1000.9,486.7 1016.9,486.5 1016.8,500.6 1014.9,501.9ZM1009.8,516.6 1003.5,511.8 1000.2,501.8 999.8,501.7 999.8,501.4 1000.8,500.4 1014.9,501.9 1014.1,516.6ZM1001.0,514.7 1003.5,513.4 1008.6,516.6 1001.1,516.6ZM1001.1,516.6 1008.6,516.6 1014.4,520.1 1009.4,530.1 1009.3,531.1 999.9,531.8 999.1,518.6ZM1015.8,518.2 1014.4,520.1 1009.8,516.6 1014.1,516.6ZM1002.3,547.0 999.7,532.0 999.9,531.8 1009.3,531.1 1008.5,543.5 1014.6,543.5 1014.4,547.6ZM1002.3,547.0 1014.4,547.6 1014.9,548.0 1014.9,563.3 1014.9,563.4 1000.1,563.9 999.9,563.7 1001.3,547.9ZM1013.1,579.2 999.1,577.7 1000.1,563.9 1014.9,563.4 1015.8,576.6ZM1014.6,592.8 1013.6,594.0 1000.4,593.4 998.4,591.5 998.8,578.0 999.1,577.7 1013.1,579.2ZM1014.7,607.2 1009.7,607.9 1010.1,598.5 999.8,598.5 1000.4,593.4 1013.6,594.0ZM999.5,614.2 1009.4,614.2 1009.7,607.9 1014.7,607.2 1014.9,607.4 1016.2,622.1 1014.5,623.4 1000.1,621.9ZM1000.1,621.9 1014.5,623.4 1012.5,638.4 999.4,637.5 998.1,624.0ZM1012.5,638.4 998.5,638.4 999.4,637.5 1012.5,638.4ZM1016.2,441.6 1015.8,441.3 1015.4,436.7 1020.5,436.7 1020.5,441.6ZM1020.5,441.6 1020.5,446.7 1030.2,446.7 1029.5,456.5 1016.1,457.4 1015.7,457.1 1016.2,441.6ZM1015.0,471.1 1016.1,457.4 1029.5,456.5 1030.7,457.6 1031.8,471.6 1016.6,472.7ZM1031.5,486.5 1016.9,486.5 1016.6,472.7 1031.8,471.6 1032.2,471.9ZM1029.4,501.5 1021.0,500.9 1021.0,501.4 1016.8,500.6 1016.9,486.5 1016.9,486.5 1031.5,486.5 1032.2,487.2ZM1021.0,501.4 1019.4,513.4 1015.8,518.2 1014.1,516.6 1014.9,501.9 1016.8,500.6ZM1014.6,543.5 1023.5,543.5 1026.9,533.5 1029.1,537.2 1027.8,547.2 1014.9,548.0 1014.4,547.6ZM1027.8,547.2 1029.5,548.7 1030.7,562.8 1014.9,563.3 1014.9,548.0ZM1014.9,563.4 1014.9,563.3 1030.7,562.8 1031.0,563.1 1030.4,576.7 1029.1,578.1 1015.8,576.6ZM1014.6,592.8 1013.1,579.2 1015.8,576.6 1029.1,578.1 1029.6,591.5ZM1014.9,607.4 1014.7,607.2 1013.6,594.0 1014.6,592.8 1029.6,591.5 1030.1,591.9 1030.1,606.6ZM1014.9,607.4 1030.1,606.6 1031.1,607.6 1028.6,623.9 1016.2,622.1ZM1016.0,638.8 1016.0,638.4 1012.5,638.4 1012.5,638.4 1014.5,623.4 1016.2,622.1 1028.6,623.9 1028.9,624.2 1029.2,637.6ZM1027.9,652.7 1016.0,652.8 1016.0,638.8 1029.2,637.6 1029.8,638.4 1029.7,639.1 1026.9,639.2 1028.1,651.1ZM1028.3,653.2 1028.6,655.9 1016.0,655.9 1016.0,652.8 1027.9,652.7ZM1045.4,442.2 1045.3,442.3 1035.6,441.6 1035.6,435.0 1046.3,435.0ZM1045.3,446.7 1035.6,446.7 1035.6,441.6 1045.3,442.3ZM1030.2,446.7 1035.6,446.7 1035.6,457.1 1030.7,457.6 1029.5,456.5ZM1035.6,457.1 1035.6,460.9 1047.2,460.9 1046.3,471.8 1032.2,471.9 1031.8,471.6 1030.7,457.6ZM1044.3,488.9 1032.2,487.2 1031.5,486.5 1032.2,471.9 1046.3,471.8 1046.4,471.9 1045.8,487.4ZM1044.3,488.9 1045.5,502.0 1044.7,503.0 1032.7,503.6 1032.7,501.8 1029.4,501.5 1032.2,487.2ZM1034.0,518.6 1032.7,518.4 1032.7,503.6 1044.7,503.0 1046.0,517.4 1045.3,518.1ZM1045.4,526.2 1040.2,525.9 1039.4,519.3 1034.0,518.6 1045.3,518.1ZM1029.1,537.2 1031.9,541.8 1038.6,547.7 1029.5,548.7 1027.8,547.2ZM1043.2,547.2 1045.1,546.6 1045.1,547.0ZM1038.6,547.7 1039.4,548.5 1043.2,547.2 1045.1,547.0 1045.9,547.9 1044.4,562.4 1031.0,563.1 1030.7,562.8 1029.5,548.7ZM1045.6,563.6 1046.4,577.1 1045.6,577.9 1030.4,576.7 1031.0,563.1 1044.4,562.4ZM1043.9,591.8 1030.1,591.9 1029.6,591.5 1029.1,578.1 1030.4,576.7 1045.6,577.9ZM1031.1,607.6 1030.1,606.6 1030.1,591.9 1043.9,591.8 1046.1,594.0 1044.3,607.3 1043.1,608.4ZM1043.7,614.2 1042.7,614.2 1042.7,623.5 1028.9,624.2 1028.6,623.9 1031.1,607.6 1043.1,608.4ZM1042.7,623.5 1042.7,638.4 1034.2,638.8 1029.8,638.4 1029.2,637.6 1028.9,624.2ZM1028.1,651.1 1028.3,653.2 1027.9,652.7ZM1034.2,638.8 1029.7,639.1 1029.8,638.4ZM1046.3,435.0 1051.1,435.0 1051.1,442.6 1045.4,442.2ZM1051.1,442.6 1051.1,446.7 1045.3,446.7 1045.3,442.3 1045.4,442.2ZM1051.1,457.9 1051.1,450.0 1061.0,449.3 1061.0,456.6ZM1061.5,471.5 1061.4,472.4 1060.0,473.4 1046.4,471.9 1046.3,471.8 1047.2,460.9 1051.1,460.9 1051.1,457.9 1061.0,456.6 1062.7,458.3ZM1045.8,487.4 1046.4,471.9 1060.0,473.4 1060.0,487.6ZM1061.1,501.0 1060.3,501.8 1045.5,502.0 1044.3,488.9 1045.8,487.4 1060.0,487.6 1061.5,489.2ZM1061.0,517.9 1046.0,517.4 1044.7,503.0 1045.5,502.0 1060.3,501.8ZM1061.0,517.9 1061.3,518.2 1060.7,532.6 1060.7,532.7 1056.7,533.0 1056.6,526.8 1045.4,526.2 1045.3,518.1 1046.0,517.4ZM1060.7,532.7 1061.5,540.4 1056.9,541.8 1056.7,533.0ZM1045.1,546.6 1056.9,542.6 1057.0,548.8 1045.9,547.9 1045.1,547.0ZM1057.0,548.8 1057.2,560.1 1059.4,562.5 1045.6,563.6 1044.4,562.4 1045.9,547.9ZM1045.6,563.6 1059.4,562.5 1060.3,563.5 1060.5,563.5 1059.7,577.8 1059.2,578.3 1046.4,577.1ZM1043.9,591.8 1045.6,577.9 1046.4,577.1 1059.2,578.3 1060.6,593.3 1060.5,593.4 1046.1,594.0ZM1046.1,594.0 1060.5,593.4 1060.6,606.7 1058.4,609.1 1044.3,607.3ZM1043.1,608.4 1044.3,607.3 1058.4,609.1 1058.4,614.2 1043.7,614.2ZM1059.7,636.7 1059.4,636.7 1058.9,621.5 1060.2,622.6ZM1076.1,442.0 1061.9,443.5 1061.9,439.2 1075.3,437.5 1075.9,439.9ZM1076.6,442.4 1076.6,442.5 1070.3,450.9 1070.3,455.0 1063.8,458.3 1062.7,458.3 1061.0,456.6 1061.0,449.3 1061.9,449.2 1061.9,443.5 1076.1,442.0ZM1063.8,458.3 1063.6,458.4 1061.9,468.4 1061.5,471.5 1062.7,458.3ZM1061.5,489.2 1060.0,487.6 1060.0,473.4 1061.4,472.4 1060.3,481.7 1062.9,488.9ZM1062.9,488.9 1065.3,495.1 1071.5,502.2 1061.1,501.0 1061.5,489.2ZM1071.5,502.2 1075.3,506.6 1074.8,517.2 1061.3,518.2 1061.0,517.9 1060.3,501.8 1061.1,501.0ZM1076.4,532.6 1072.8,531.8 1068.6,525.1 1068.1,532.7 1060.7,532.6 1061.3,518.2 1074.8,517.2 1075.4,517.7ZM1068.1,532.7 1067.8,538.5 1061.5,540.4 1060.7,532.7 1060.7,532.6ZM1060.5,563.5 1075.6,563.0 1074.7,576.9 1059.7,577.8ZM1074.7,576.9 1076.6,579.4 1075.9,583.3 1070.3,583.5 1061.9,581.8 1061.3,593.3 1060.6,593.3 1059.2,578.3 1059.7,577.8ZM1060.6,606.7 1060.5,593.4 1060.6,593.3 1061.3,593.3 1061.1,598.4 1075.3,598.7 1075.7,599.7 1075.7,608.9 1074.9,609.8ZM1074.6,622.1 1060.2,622.6 1058.9,621.5 1058.6,614.2 1058.4,614.2 1058.4,609.1 1060.6,606.7 1074.9,609.8ZM1074.9,636.7 1059.7,636.7 1060.2,622.6 1074.6,622.1 1075.2,622.7ZM1075.3,506.6 1076.9,508.4 1086.1,517.5 1075.4,517.7 1074.8,517.2ZM1086.1,517.5 1086.9,518.4 1088.6,530.1 1085.9,532.4 1078.1,533.0 1076.4,532.6 1075.4,517.7ZM1085.9,532.4 1083.6,534.3 1078.1,533.0ZM1079.2,562.9 1086.9,562.6 1087.8,553.5 1090.3,549.3 1092.6,549.0 1090.0,563.4ZM1090.0,563.4 1090.8,564.3 1091.0,578.9 1090.7,579.1 1076.6,579.4 1074.7,576.9 1075.6,563.0 1079.2,562.9ZM1090.7,582.7 1075.9,583.3 1076.6,579.4 1090.7,579.1ZM1075.7,599.7 1079.6,608.6 1075.7,608.9ZM1079.6,608.6 1080.3,610.0 1076.9,613.4 1077.3,622.7 1075.2,622.7 1074.6,622.1 1074.9,609.8 1075.7,608.9ZM1077.3,622.7 1077.8,636.7 1074.9,636.7 1075.2,622.7ZM1092.6,549.0 1097.0,548.5 1101.1,553.5 1100.3,560.1 1103.1,564.3 1090.8,564.3 1090.0,563.4ZM1103.9,579.6 1100.3,575.2 1091.9,570.2 1091.9,578.9 1091.0,578.9 1090.8,564.3 1103.1,564.3 1103.6,565.2 1104.8,565.8 1105.4,579.2 1104.9,579.7ZM1105.0,581.0 1103.9,579.6 1104.9,579.7ZM1091.9,578.9 1091.9,582.7 1090.7,582.7 1090.7,579.1 1091.0,578.9ZM1104.8,565.8 1119.2,574.0 1119.2,577.9 1105.4,579.2ZM1105.4,579.2 1119.2,577.9 1121.2,579.8 1120.9,588.0 1110.3,587.7 1105.0,581.0 1104.9,579.7ZM1119.2,574.0 1127.9,579.0 1121.2,579.8 1119.2,577.9ZM1127.9,579.0 1130.0,580.2 1135.7,584.1 1135.4,588.3 1120.9,588.0 1121.2,579.8ZM1135.7,584.1 1142.0,588.5 1135.4,588.3Z"/>
<path fill="#ff7f00" d="M766.7,682.0 766.8,679.3 780.1,678.2 780.0,681.8ZM778.6,695.0 766.0,696.0 766.7,682.0 780.0,681.8 782.2,684.4ZM780.1,678.2 787.6,677.6 787.6,685.0 782.2,684.4 780.0,681.8ZM787.6,685.0 787.6,694.3 778.6,695.0 782.2,684.4ZM791.0,706.3 787.6,701.8 787.6,694.3 795.9,694.8 795.4,707.3ZM792.3,722.0 795.2,711.8 791.0,706.3 795.4,707.3 797.0,709.2 796.1,721.2ZM796.0,736.0 791.0,726.8 792.3,722.0 796.1,721.2 796.5,721.7ZM813.9,686.5 814.3,676.8 818.2,676.8 816.9,684.7ZM795.4,707.3 795.9,694.8 812.5,695.9 812.7,695.8 813.9,703.2 812.8,704.5 797.0,709.2ZM817.4,721.1 812.6,726.2 796.5,721.7 796.1,721.2 797.0,709.2 812.8,704.5ZM799.7,742.7 796.0,736.0 796.5,721.7 812.6,726.2 814.9,736.8 810.2,741.8ZM815.7,760.2 813.0,762.5 810.0,762.0 810.0,750.9 800.2,750.3 800.2,743.5 799.7,742.7 810.2,741.8ZM812.9,763.5 810.0,763.5 810.0,762.0 813.0,762.5ZM792.3,811.2 792.2,807.1 806.8,808.0 805.2,812.1 804.9,812.3 792.5,811.5ZM804.9,812.3 807.7,822.6 800.2,823.4 792.7,818.4 792.4,811.9 792.5,811.5ZM818.2,676.8 825.2,676.8 825.8,671.4 835.3,671.2 835.7,671.5 833.1,687.4 832.5,688.1 816.9,684.7ZM812.7,695.8 813.5,695.5 813.9,686.5 816.9,684.7 832.5,688.1 832.2,703.0 813.9,703.2ZM833.7,704.9 830.5,720.1 817.4,721.1 812.8,704.5 813.9,703.2 832.2,703.0ZM830.5,720.1 834.2,725.4 831.8,737.6 828.8,739.9 814.9,736.8 812.6,726.2 817.4,721.1ZM828.2,758.5 815.7,760.2 810.2,741.8 814.9,736.8 828.8,739.9ZM830.3,763.5 819.2,763.5 812.9,763.5 813.0,762.5 815.7,760.2 828.2,758.5 830.1,759.8ZM806.8,808.0 814.3,808.4 827.1,808.1 827.1,810.9 825.4,813.2 805.2,812.1ZM804.9,812.3 805.2,812.1 825.4,813.2 824.5,828.8 822.1,830.6 822.0,830.6 815.2,821.8 807.7,822.6ZM849.2,654.4 849.2,653.4 854.1,653.4 852.0,655.5ZM849.2,670.4 849.2,654.4 852.0,655.5 853.0,670.0 853.0,670.1ZM835.3,671.2 840.7,671.1 835.7,671.5ZM833.1,687.4 835.7,671.5 840.7,671.1 849.2,670.9 849.2,670.4 853.0,670.1 855.7,686.8 853.9,688.4ZM833.1,687.4 853.9,688.4 849.1,706.0 833.7,704.9 832.2,703.0 832.5,688.1ZM849.1,706.0 849.1,706.0 851.6,722.9 850.5,724.1 834.2,725.4 830.5,720.1 833.7,704.9ZM850.5,724.1 851.4,742.7 850.0,743.6 831.8,737.6 834.2,725.4ZM830.1,759.8 828.2,758.5 828.8,739.9 831.8,737.6 850.0,743.6 845.3,759.2ZM836.1,779.0 835.2,768.4 834.9,763.5 830.3,763.5 830.1,759.8 845.3,759.2 846.4,760.4 847.9,779.8 846.4,781.3ZM846.1,787.4 836.9,787.1 836.1,779.0 846.4,781.3ZM827.1,810.9 827.1,808.1 830.2,808.1 847.3,808.1 846.0,815.3ZM846.3,817.1 846.0,816.7 834.4,818.4 836.0,825.9 829.4,829.4 824.5,828.8 825.4,813.2 827.1,810.9 846.0,815.3 846.3,816.0ZM822.1,830.6 824.5,828.8 829.4,829.4 823.5,832.6 822.2,830.8ZM854.1,653.4 858.4,653.4 865.9,663.1 870.7,663.1 869.3,667.7 853.0,670.0 852.0,655.5ZM853.0,670.1 853.0,670.0 869.3,667.7 874.2,672.9 870.3,687.7 867.0,689.5 855.7,686.8ZM853.9,688.4 855.7,686.8 867.0,689.5 868.9,707.0 849.1,706.0 849.1,706.0ZM870.6,708.7 869.0,723.4 851.6,722.9 849.1,706.0 868.9,707.0ZM869.0,723.4 869.7,724.4 866.0,742.9 865.2,743.5 851.4,742.7 850.5,724.1 851.6,722.9ZM845.3,759.2 850.0,743.6 851.4,742.7 865.2,743.5 866.8,763.2 846.4,760.4ZM846.4,760.4 866.8,763.2 866.9,763.4 863.7,778.6 847.9,779.8ZM866.7,788.1 846.1,787.4 846.4,781.3 847.9,779.8 863.7,778.6 866.2,781.7ZM847.3,808.1 865.0,808.1 865.1,815.2 846.3,816.0 846.0,815.3ZM867.4,818.0 866.5,822.6 863.6,820.1 850.2,822.6 846.3,817.1 846.3,816.0 865.1,815.2ZM886.5,654.2 891.9,654.0 891.9,654.5 891.1,655.0ZM870.7,663.1 884.2,663.1 884.7,654.2 886.5,654.2 891.1,655.0 889.7,669.4 886.7,672.9 874.2,672.9 869.3,667.7ZM886.8,691.7 870.3,687.7 874.2,672.9 886.7,672.9 889.7,689.7ZM870.6,708.7 868.9,707.0 867.0,689.5 870.3,687.7 886.8,691.7 883.2,705.6ZM889.6,711.5 890.3,723.5 884.5,727.3 869.7,724.4 869.0,723.4 870.6,708.7 883.2,705.6ZM869.7,724.4 884.5,727.3 885.0,744.4 883.8,745.3 866.0,742.9ZM865.2,743.5 866.0,742.9 883.8,745.3 881.1,763.0 866.9,763.4 866.8,763.2ZM885.1,773.0 875.2,772.5 874.8,780.5 866.2,781.7 863.7,778.6 866.9,763.4 881.1,763.0 885.4,766.7ZM879.0,798.7 868.2,796.9 868.6,790.1 882.7,790.7ZM874.8,780.5 874.4,788.4 866.7,788.1 866.2,781.7ZM884.4,816.0 867.4,818.0 865.1,815.2 865.0,808.1 867.7,808.1 868.2,796.9 879.0,798.7 882.2,802.0ZM881.8,836.1 878.7,835.7 873.6,828.4 870.2,825.9 866.5,822.6 867.4,818.0 884.4,816.0 885.9,817.3ZM881.8,836.1 882.6,837.2 882.3,839.9 881.9,840.1 878.7,835.7ZM891.9,654.0 898.7,653.7 906.8,644.4 906.8,643.4 907.6,643.4 911.4,643.4 910.7,655.8 891.9,654.5ZM910.7,655.8 911.2,656.4 908.9,673.8 907.0,675.5 889.7,669.4 891.1,655.0 891.9,654.5ZM903.2,691.2 889.7,689.7 886.7,672.9 889.7,669.4 907.0,675.5ZM889.6,711.5 883.2,705.6 886.8,691.7 889.7,689.7 903.2,691.2 904.4,692.6 904.9,705.1ZM901.6,727.1 890.3,723.5 889.6,711.5 904.9,705.1 909.0,710.0ZM901.6,727.1 902.2,727.8 901.5,743.8 898.9,746.0 885.0,744.4 884.5,727.3 890.3,723.5ZM900.2,763.2 885.4,766.7 881.1,763.0 883.8,745.3 885.0,744.4 898.9,746.0ZM904.3,772.9 893.6,773.4 885.1,773.0 885.4,766.7 900.2,763.2 902.4,764.5ZM882.7,790.7 886.9,790.9 887.2,797.6 898.8,797.2 882.2,802.0 879.0,798.7ZM885.9,817.3 884.4,816.0 882.2,802.0 898.8,797.2 899.6,797.1 900.3,797.8 900.6,814.2 895.2,817.6ZM900.7,832.6 888.4,837.5 882.6,837.2 881.8,836.1 885.9,817.3 895.2,817.6ZM888.4,837.5 882.3,839.9 882.6,837.2ZM914.6,640.0 915.1,635.9 927.9,635.9 927.9,636.1ZM927.9,636.1 929.0,637.7 923.4,657.0 923.2,657.2 911.2,656.4 910.7,655.8 911.4,643.4 914.3,643.4 914.6,640.0ZM923.2,657.2 927.2,676.9 925.8,678.3 908.9,673.8 911.2,656.4ZM904.4,692.6 903.2,691.2 907.0,675.5 908.9,673.8 925.8,678.3 924.0,691.2 923.2,691.8ZM909.0,710.0 904.9,705.1 904.4,692.6 923.2,691.8 921.7,711.2 920.3,712.3ZM901.6,727.1 909.0,710.0 920.3,712.3 920.9,729.2 902.2,727.8ZM902.2,727.8 920.9,729.2 921.4,729.7 919.9,746.3 901.5,743.8ZM920.4,747.0 919.8,759.6 902.4,764.5 900.2,763.2 898.9,746.0 901.5,743.8 919.9,746.3ZM921.8,763.5 911.9,763.5 911.1,772.5 904.3,772.9 902.4,764.5 919.8,759.6 921.9,762.0ZM899.6,797.1 901.9,797.1 906.9,797.6 907.4,797.8 900.3,797.8ZM907.4,797.8 918.2,803.2 913.1,816.0 900.6,814.2 900.3,797.8ZM913.1,816.0 915.2,819.2 915.0,830.3 902.8,831.8 900.7,832.6 895.2,817.6 900.6,814.2ZM942.5,622.0 942.6,618.7 947.3,618.7 943.8,622.0ZM948.2,640.3 944.4,643.6 930.8,638.4 941.8,638.4 942.5,622.0 943.8,622.0ZM927.9,635.9 930.1,635.9 930.1,638.1 929.0,637.7 927.9,636.1ZM944.4,643.6 942.7,657.0 941.9,657.7 923.4,657.0 929.0,637.7 930.1,638.1 930.1,638.4 930.8,638.4ZM939.1,675.1 927.2,676.9 923.2,657.2 923.4,657.0 941.9,657.7ZM939.1,675.1 944.3,679.4 944.8,693.9 941.0,697.1 924.0,691.2 925.8,678.3 927.2,676.9ZM924.0,691.2 941.0,697.1 939.1,710.9 921.7,711.2 923.2,691.8ZM920.9,729.2 920.3,712.3 921.7,711.2 939.1,710.9 940.8,713.5 941.3,726.1 939.6,728.3 921.4,729.7ZM941.3,745.7 920.4,747.0 919.9,746.3 921.4,729.7 939.6,728.3ZM930.7,763.5 930.7,763.5 930.7,763.5 921.9,762.0 919.8,759.6 920.4,747.0 941.3,745.7 942.7,747.1 936.6,764.5ZM930.7,763.5 921.8,763.5 921.9,762.0ZM938.1,774.2 931.1,774.2 930.7,763.5 936.6,764.5 939.1,768.1ZM918.2,803.2 921.9,805.1 932.7,807.3 933.2,818.0 915.2,819.2 913.1,816.0ZM926.2,833.9 923.6,829.3 915.0,830.3 915.2,819.2 933.2,818.0 936.5,821.8 935.9,832.7ZM935.9,832.7 937.6,834.8 932.5,847.5 927.0,835.1 926.2,833.9ZM954.8,619.0 955.1,635.1 955.8,639.7 948.2,640.3 943.8,622.0 947.3,618.7 953.9,618.7ZM955.8,639.7 956.8,646.7 959.5,662.6 942.7,657.0 944.4,643.6 948.2,640.3ZM942.7,657.0 959.5,662.6 960.0,665.7 959.4,674.3 944.3,679.4 939.1,675.1 941.9,657.7ZM944.3,679.4 959.4,674.3 964.1,679.6 959.9,696.2 944.8,693.9ZM961.7,711.1 940.8,713.5 939.1,710.9 941.0,697.1 944.8,693.9 959.9,696.2 960.2,696.6ZM962.0,711.5 956.4,728.4 941.3,726.1 940.8,713.5 961.7,711.1ZM954.6,748.9 942.7,747.1 941.3,745.7 939.6,728.3 941.3,726.1 956.4,728.4 960.7,733.1ZM936.6,764.5 942.7,747.1 954.6,748.9 955.7,750.2 956.1,766.9 939.1,768.1ZM939.1,768.1 956.1,766.9 956.4,767.3 954.7,777.8 952.0,777.5 950.3,774.2 938.1,774.2ZM932.7,807.3 942.0,809.2 942.8,816.7 949.6,816.7 936.5,821.8 933.2,818.0ZM955.0,818.4 951.7,837.3 949.0,839.0 937.6,834.8 935.9,832.7 936.5,821.8 949.6,816.7 953.8,816.7ZM949.0,839.1 945.3,839.3 943.6,851.8 933.6,850.1 932.5,847.5 937.6,834.8 949.0,839.0ZM960.0,665.7 961.0,671.4 978.5,672.1 975.8,679.8 964.1,679.6 959.4,674.3ZM960.2,696.6 959.9,696.2 964.1,679.6 975.8,679.8 975.2,681.8 974.4,687.8 975.1,696.0ZM962.0,711.5 961.7,711.1 960.2,696.6 975.1,696.0 975.2,696.8 968.5,703.5 962.7,706.8 962.6,711.7ZM962.6,711.7 962.3,728.3 975.4,728.3 975.5,729.3 973.2,732.1 960.7,733.1 956.4,728.4 962.0,711.5ZM954.6,748.9 960.7,733.1 973.2,732.1 977.0,750.1 975.3,751.5 955.7,750.2ZM956.1,766.9 955.7,750.2 975.3,751.5 972.9,769.9 972.7,770.1 956.4,767.3ZM972.0,776.9 960.0,777.5 960.0,778.4 954.7,777.8 956.4,767.3 972.7,770.1ZM953.8,816.7 960.0,816.7 960.0,820.1 955.0,818.4ZM960.0,820.1 960.0,837.4 951.7,837.3 955.0,818.4ZM960.0,837.4 960.0,838.4 949.0,839.1 949.0,839.0 951.7,837.3ZM975.5,729.3 975.4,728.3 983.4,728.3 983.5,729.9ZM973.2,732.1 975.5,729.3 983.5,729.9 984.3,745.0 983.9,750.2 977.0,750.1ZM983.9,750.2 983.4,756.7 978.4,760.0 986.8,768.4 987.0,771.0 972.9,769.9 975.3,751.5 977.0,750.1ZM987.0,771.0 987.6,778.4 983.4,783.4 977.6,786.7 976.7,776.7 972.0,776.9 972.7,770.1 972.9,769.9Z"/>
<path fill="#ffebaf" d="M916.3,675.8 915.1,668.4 923.4,670.9 928.6,669.1 927.5,674.8ZM928.9,679.9 916.8,678.4 916.3,675.8 927.5,674.8 929.2,676.7ZM927.3,693.2 927.4,693.1 927.4,693.2ZM929.3,699.0 926.8,693.4 927.3,693.2 927.4,693.2 930.2,695.5ZM928.6,669.1 932.6,667.6 937.6,676.8 946.8,677.1 945.2,679.3 929.2,676.7 927.5,674.8ZM945.2,679.3 946.6,693.7 945.1,696.2 930.2,695.5 927.4,693.2 927.4,693.1 932.6,690.1 930.1,680.1 928.9,679.9 929.2,676.7ZM945.2,696.9 943.5,700.1 930.1,701.0 929.3,699.0 930.2,695.5 945.1,696.2ZM960.2,677.6 961.0,690.1 948.5,690.9 947.0,693.6 946.6,693.7 945.2,679.3 946.8,677.1 960.0,677.6ZM947.0,693.6 945.2,696.9 945.1,696.2 946.6,693.7Z"/>
<path fill="#ffebaf" d="M884.7,654.2 906.8,653.4 906.8,666.8 900.9,667.6 900.9,676.8 885.1,676.4Z"/>
<path fill="#ffebaf" d="M820.0,740.2 830.0,741.0 835.0,748.5 835.0,763.5 834.9,763.5 819.2,763.5Z"/>
<path fill="#ffebaf" d="M887.2,797.6 901.9,797.1 902.8,816.7 888.6,817.1Z"/>
<path fill="#ee0000" d="M866.7,663.4 884.2,663.4 884.2,683.4 866.7,683.4Z"/>
<path fill="#ee0000" d="M907.6,643.4 914.3,643.4 915.1,635.9 930.1,635.9 925.9,656.7 918.4,651.7 914.3,653.4 913.4,665.1 907.6,665.9 906.8,656.7 896.8,655.9Z"/>
<path fill="#ee0000" d="M933.5,661.7 938.5,655.1 948.1,655.1 948.1,675.9 938.5,675.9 937.6,666.8Z"/>
<path fill="#ee0000" d="M962.7,687.6 967.7,690.1 974.3,686.8 975.2,696.8 968.5,703.5 962.7,706.8Z"/>
<path fill="#ffebaf" d="M980.2,659.4 980.2,650.1 985.2,647.6 987.0,648.1 984.2,660.1ZM977.7,675.1 978.5,672.1 980.2,663.4 980.2,659.4 984.2,660.1 985.7,663.4 982.1,673.4 979.0,675.5ZM974.5,690.4 974.3,688.4 977.7,675.1 979.0,675.5 978.1,690.8ZM965.2,705.2 968.5,703.5 975.2,696.8 974.5,690.4 978.1,690.8 979.0,692.0 975.0,705.8ZM962.0,720.8 962.2,706.8 965.2,705.2 975.0,705.8 976.8,709.3 974.2,719.8ZM961.8,732.5 962.0,720.8 974.2,719.8 975.2,721.3 971.9,735.3 968.5,734.3 968.5,734.3 968.4,734.3ZM968.2,750.9 962.7,743.5 962.2,740.2 968.5,734.3 971.9,735.3 973.2,737.3 972.4,748.0 968.8,751.1ZM968.4,734.3 961.8,733.5 961.8,732.5ZM987.0,648.1 991.0,649.2 995.2,656.7 1000.6,656.5 1000.1,663.5 999.4,664.2 985.7,663.4 984.2,660.1ZM1000.6,678.7 998.1,680.3 982.1,673.4 985.7,663.4 999.4,664.2ZM998.1,680.3 994.7,689.3 988.8,693.2 979.0,692.0 978.1,690.8 979.0,675.5 982.1,673.4ZM976.8,709.3 975.0,705.8 979.0,692.0 988.8,693.2 994.8,709.1 992.6,710.8ZM976.8,709.3 992.6,710.8 989.9,724.3 987.9,726.3 975.2,721.3 974.2,719.8ZM971.9,735.3 975.2,721.3 987.9,726.3 987.8,733.7 973.2,737.3ZM972.4,748.0 973.2,737.3 987.8,733.7 991.0,738.6 984.7,749.2ZM984.3,763.0 984.1,757.6 970.2,753.5 969.0,751.9 968.8,751.1 972.4,748.0 984.7,749.2 987.6,754.0ZM1000.6,656.5 1013.4,656.0 1012.6,664.0 1012.6,664.0 1000.1,663.5ZM1012.4,672.4 1007.7,672.6 1005.1,679.3 1000.6,678.7 999.4,664.2 1000.1,663.5 1012.6,664.0ZM1005.1,679.3 1003.5,683.4 1002.7,690.9 1009.4,696.0 1008.8,698.6 1008.6,698.8 994.7,689.3 998.1,680.3 1000.6,678.7ZM1008.6,698.8 1005.2,707.7 1003.1,709.0 994.8,709.1 988.8,693.2 994.7,689.3ZM989.9,724.3 992.6,710.8 994.8,709.1 1003.1,709.0 1003.2,710.4 998.5,715.1 998.5,725.4ZM999.9,725.5 999.4,716.8 1003.3,710.6 1005.1,726.2ZM998.5,725.4 998.5,730.2 1001.0,733.5 1003.8,734.6 1002.8,737.8 999.8,740.3 991.0,738.6 987.8,733.7 987.9,726.3 989.9,724.3ZM1005.3,729.6 1000.2,729.3 999.9,725.5 1005.1,726.2 1006.1,727.2ZM987.6,754.0 984.7,749.2 991.0,738.6 999.8,740.3 1002.9,753.6 1001.2,755.8ZM1001.0,763.5 984.3,763.5 984.3,763.0 987.6,754.0 1001.2,755.8ZM1015.6,648.0 1015.9,642.4 1016.4,640.0 1026.9,639.2 1031.9,649.9 1030.2,655.0 1029.7,655.2ZM1029.7,655.2 1026.6,665.2 1012.6,664.0 1013.4,656.0 1015.2,655.9 1015.6,648.0ZM1028.2,670.6 1026.0,671.8 1012.4,672.4 1012.6,664.0 1012.6,664.0 1026.6,665.2ZM1009.4,696.0 1012.7,698.5 1023.4,698.5 1022.6,699.1 1008.8,698.6ZM1022.6,708.0 1021.9,708.5 1013.0,711.7 1005.2,707.7 1008.6,698.8 1008.8,698.6 1022.6,699.1ZM1013.0,711.7 1012.7,711.8 1014.4,719.3 1018.6,722.0 1017.3,726.3 1006.1,727.2 1005.1,726.2 1003.3,710.6 1003.5,710.1 1003.2,710.4 1003.1,709.0 1005.2,707.7ZM1003.8,734.6 1016.9,740.2 1018.8,740.3 1018.6,742.4 1002.8,737.8ZM1017.7,726.9 1014.4,730.2 1005.3,729.6 1006.1,727.2 1017.3,726.3ZM1019.4,744.0 1014.3,752.8 1002.9,753.6 999.8,740.3 1002.8,737.8 1018.6,742.4ZM1015.6,763.5 1001.0,763.5 1001.2,755.8 1002.9,753.6 1014.3,752.8 1017.9,758.9ZM1031.9,649.9 1032.7,651.7 1032.9,655.5 1030.2,655.0ZM1032.9,655.5 1033.6,667.6 1028.2,670.6 1026.6,665.2 1029.7,655.2 1030.2,655.0ZM1023.4,698.5 1026.9,698.5 1029.4,703.5 1022.6,708.0 1022.6,699.1ZM1018.6,722.0 1021.0,723.5 1017.7,726.9 1017.3,726.3ZM1018.8,740.3 1032.7,741.0 1033.4,742.4 1033.0,744.2 1031.3,745.8 1019.4,744.0 1018.6,742.4ZM1032.5,754.4 1026.9,755.2 1021.3,759.8 1017.9,758.9 1014.3,752.8 1019.4,744.0 1031.3,745.8ZM1021.3,759.8 1016.9,763.5 1015.6,763.5 1017.9,758.9ZM1033.4,742.4 1034.3,744.4 1033.0,744.2ZM1034.3,744.4 1038.6,753.5 1032.5,754.4 1031.3,745.8 1033.0,744.2Z"/>
<path fill="#ff7f00" d="M999.7,721.6 999.4,716.8 1003.5,710.1 1007.0,705.7 1008.3,707.6 1004.8,722.3 1004.6,722.6ZM1004.6,722.6 1005.4,729.6 1000.2,729.3 999.7,721.6ZM1025.2,706.2 1021.9,708.5 1019.1,709.5 1008.3,707.6 1007.0,705.7 1012.7,698.5 1024.8,698.5ZM1019.1,709.5 1012.7,711.8 1014.4,719.3 1018.1,721.6 1004.8,722.3 1008.3,707.6ZM1018.1,721.6 1021.0,723.5 1014.4,730.2 1005.4,729.6 1004.6,722.6 1004.8,722.3ZM1024.8,698.5 1026.9,698.5 1029.4,703.5 1025.2,706.2Z"/>
<path fill="#ff7f00" d="M968.5,734.3 980.2,734.3 983.5,740.2 984.3,757.7 970.2,753.5 962.7,743.5 962.2,740.2Z"/>
<path fill="#ffebaf" d="M765.7,698.8 766.0,696.0 773.5,695.1 775.8,695.1 775.9,705.4 775.8,705.4ZM764.5,714.8 765.7,698.8 775.8,705.4 772.7,712.2 767.9,715.5ZM769.1,721.2 764.3,716.8 764.5,714.8 767.9,715.5ZM775.8,695.1 785.1,695.1 786.6,699.0 783.6,704.1 775.9,705.4ZM775.8,705.4 775.9,705.4 783.6,704.1 785.8,706.9 786.4,717.7 783.4,720.2 772.7,712.2ZM782.3,726.4 773.5,725.2 769.1,721.2 767.9,715.5 772.7,712.2 783.4,720.2ZM786.6,699.0 787.6,701.8 792.8,708.6 785.8,706.9 783.6,704.1ZM792.8,708.6 795.2,711.8 794.5,718.0 786.4,717.7 785.8,706.9ZM794.5,718.0 794.3,720.2 785.1,726.8 782.3,726.4 783.4,720.2 786.4,717.7Z"/>
<path fill="#ffebaf" d="M688.4,777.2 689.2,762.0 689.6,762.4ZM691.6,742.6 708.1,743.3 708.0,744.3 707.5,744.8ZM690.4,742.5 691.6,742.6 707.5,744.8 707.6,759.4 707.6,761.3 706.7,762.2 689.6,762.4 689.2,762.0 690.0,742.8ZM706.6,780.4 688.4,778.7 688.4,777.2 689.6,762.4 706.7,762.2 707.7,779.4ZM708.0,744.3 707.6,759.4 707.5,744.8ZM707.6,761.3 707.6,762.5 725.1,764.2 724.3,780.5 707.7,779.4 706.7,762.2ZM724.3,780.5 724.3,781.7 706.7,780.4 706.6,780.4 707.7,779.4Z"/>
<path fill="#ffebaf" d="M781.2,757.0 781.5,749.7 781.9,749.7ZM784.1,749.8 799.6,750.3 799.6,751.2ZM781.9,749.7 784.1,749.8 799.6,751.2 799.7,751.4 798.2,769.3 780.8,767.3 781.2,757.0ZM786.8,786.7 780.1,786.7 780.8,767.3 798.2,769.3 798.6,769.8 797.5,786.4ZM797.8,786.7 797.8,786.7 786.8,786.7 797.5,786.4ZM799.6,750.3 800.2,750.3 818.7,751.3 817.5,752.5 799.7,751.4 799.6,751.2ZM817.5,752.5 817.9,769.2 817.6,769.4 798.6,769.8 798.2,769.3 799.7,751.4ZM816.1,786.7 798.0,786.7 797.8,786.7 797.5,786.4 798.6,769.8 817.6,769.4ZM819.4,751.3 820.2,740.0 833.5,741.7 834.2,752.0ZM834.2,752.0 835.2,768.4 835.5,771.2 817.9,769.2 817.5,752.5 818.7,751.3 819.3,751.3 819.4,751.3ZM835.5,771.2 835.6,773.2 834.3,786.7 816.1,786.7 817.6,769.4 817.9,769.2ZM835.6,773.2 836.9,786.7 834.3,786.7Z"/>
<path fill="#ffebaf" d="M813.3,787.6 830.1,788.1 830.1,788.3 813.3,787.7ZM820.0,806.2 811.8,805.9 812.6,788.3 813.3,787.7 830.1,788.3 830.8,789.0 831.0,805.9 830.8,806.1ZM830.8,806.6 820.0,806.2 830.8,806.1ZM830.1,788.1 849.5,788.7 849.4,789.0 830.8,789.0 830.1,788.3ZM850.5,790.2 849.2,807.3 831.0,805.9 830.8,789.0 849.4,789.0ZM849.2,807.4 830.8,806.6 830.8,806.1 831.0,805.9 849.2,807.3ZM849.5,788.7 867.7,789.2 867.7,790.2 867.6,790.4 850.5,790.2 849.4,789.0ZM867.1,802.7 866.9,808.1 849.2,807.4 849.2,807.3 850.5,790.2 867.6,790.4ZM867.7,790.2 867.1,802.7 867.6,790.4Z"/>
<path fill="#ffebaf" d="M911.3,770.6 912.8,752.5 913.1,752.5 911.7,770.7ZM910.2,789.1 909.9,778.4 911.1,772.5 911.3,770.6 911.7,770.7 912.0,770.9 910.3,789.0ZM913.1,752.5 930.3,753.4 930.5,757.4 929.6,771.5 912.0,770.9 911.7,770.7ZM929.9,771.9 928.8,790.1 910.3,789.0 912.0,770.9 929.6,771.5ZM929.2,791.7 910.3,790.9 910.2,789.1 910.3,789.0 928.8,790.1 929.4,790.7ZM930.5,757.4 931.0,771.9 929.9,771.9 929.6,771.5ZM931.0,771.9 931.1,774.2 930.3,790.8 929.4,790.7 928.8,790.1 929.9,771.9ZM930.3,790.8 930.3,791.7 929.2,791.7 929.4,790.7Z"/>
<path fill="#b2ffb2" d="M977.0,804.2 976.5,788.8 980.7,788.7 980.8,803.7ZM977.6,825.2 977.0,804.2 980.8,803.7 989.8,809.2 979.5,823.9ZM980.0,841.2 978.2,832.3 981.6,839.4ZM988.1,788.6 1000.2,788.4 998.7,794.9ZM980.7,788.7 988.1,788.6 998.7,794.9 999.6,797.5 996.1,808.6 989.8,809.2 980.8,803.7ZM999.1,811.6 1002.3,821.9 995.0,829.1 979.5,823.9 989.8,809.2 996.1,808.6ZM978.2,832.3 977.8,830.1 977.6,825.2 979.5,823.9 995.0,829.1 991.6,841.5 991.4,841.5 981.6,839.4ZM984.3,858.9 982.8,855.1 980.0,841.2 981.6,839.4 991.4,841.5 987.7,859.4ZM989.9,872.8 984.3,858.9 987.7,859.4 994.5,866.0ZM982.9,919.8 984.0,915.2 985.0,916.2ZM1017.8,793.4 999.6,797.5 998.7,794.9 1000.2,788.4 1017.9,788.1ZM1017.8,793.4 1020.2,796.5 1019.8,808.2 999.1,811.6 996.1,808.6 999.6,797.5ZM1019.8,808.2 1021.9,810.7 1016.1,830.1 1014.6,831.0 1002.3,821.9 999.1,811.6ZM991.6,841.5 995.0,829.1 1002.3,821.9 1014.6,831.0 1011.2,846.1 1010.2,846.8ZM991.6,841.5 1010.2,846.8 1006.0,858.9 997.7,865.7 994.5,866.0 987.7,859.4 991.4,841.5ZM992.4,881.5 992.8,880.1 989.9,872.8 994.5,866.0 997.7,865.7 1011.5,885.6 1009.1,887.7ZM988.6,896.8 992.4,881.5 1009.1,887.7 1001.7,899.3ZM984.0,915.2 987.8,900.1 988.6,896.8 1001.7,899.3 1003.8,905.5 998.6,920.0 997.4,921.2 985.0,916.2ZM997.3,924.6 985.3,927.6 982.8,920.1 982.9,919.8 985.0,916.2 997.4,921.2ZM1017.9,788.1 1039.4,787.7 1035.9,795.4 1020.2,796.5 1017.8,793.4ZM1020.2,796.5 1035.9,795.4 1038.2,802.0 1031.6,812.4 1021.9,810.7 1019.8,808.2ZM1021.9,810.7 1031.6,812.4 1034.6,817.2 1030.5,830.0 1016.1,830.1ZM1014.6,831.0 1016.1,830.1 1030.5,830.0 1037.7,836.6 1024.8,851.0 1011.2,846.1ZM1010.2,846.8 1011.2,846.1 1024.8,851.0 1028.4,856.2 1030.2,869.0 1023.7,873.3 1006.0,858.9ZM1017.3,884.6 1011.5,885.6 997.7,865.7 1006.0,858.9 1023.7,873.3 1018.1,883.7ZM1020.5,909.4 1003.8,905.5 1001.7,899.3 1009.1,887.7 1011.5,885.6 1017.3,884.6 1026.4,902.5ZM1020.2,922.0 998.6,920.0 1003.8,905.5 1020.5,909.4 1022.2,920.8ZM1017.1,928.1 1000.3,923.9 997.3,924.6 997.4,921.2 998.6,920.0 1020.2,922.0ZM1039.4,787.7 1054.8,787.5 1050.5,806.3 1038.2,802.0 1035.9,795.4ZM1050.5,806.3 1053.6,811.1 1053.1,816.4 1050.6,818.8 1034.6,817.2 1031.6,812.4 1038.2,802.0ZM1050.6,818.8 1046.6,838.1 1037.7,836.6 1030.5,830.0 1034.6,817.2ZM1046.6,838.1 1047.0,838.6 1047.1,849.7 1028.4,856.2 1024.8,851.0 1037.7,836.6ZM1040.3,871.3 1030.2,869.0 1028.4,856.2 1047.1,849.7 1051.5,858.9 1042.6,870.7ZM1038.8,889.5 1018.1,883.7 1023.7,873.3 1030.2,869.0 1040.3,871.3ZM1038.8,889.5 1040.3,892.3 1036.1,900.8 1032.5,902.5 1026.4,902.5 1017.3,884.6 1018.1,883.7ZM1022.2,920.8 1020.5,909.4 1026.4,902.5 1032.5,902.5 1037.8,921.6 1029.1,923.9ZM1020.2,922.0 1022.2,920.8 1029.1,923.9 1028.9,930.4 1025.3,930.2 1017.1,928.1ZM1063.6,787.3 1076.8,787.1 1076.6,790.3 1072.1,791.8ZM1054.8,787.5 1063.6,787.3 1072.1,791.8 1069.5,802.4 1053.6,811.1 1050.5,806.3ZM1072.6,808.1 1066.3,822.9 1053.1,816.4 1053.6,811.1 1069.5,802.4ZM1053.1,816.4 1066.3,822.9 1070.1,827.8 1063.1,838.4 1047.0,838.6 1046.6,838.1 1050.6,818.8ZM1067.7,846.3 1056.5,859.3 1051.5,858.9 1047.1,849.7 1047.0,838.6 1063.1,838.4ZM1058.4,860.8 1067.2,873.0 1056.6,882.0 1042.6,870.7 1051.5,858.9 1056.5,859.3ZM1038.8,889.5 1040.3,871.3 1042.6,870.7 1056.6,882.0 1056.6,891.2 1040.3,892.3ZM1040.3,892.3 1056.6,891.2 1059.9,895.9 1053.3,911.9 1036.1,900.8ZM1036.1,900.8 1053.3,911.9 1053.5,913.9 1048.0,922.6 1047.3,923.1 1037.8,921.6 1032.5,902.5ZM1046.5,931.4 1045.3,931.4 1028.9,930.4 1029.1,923.9 1037.8,921.6 1047.3,923.1ZM1076.8,787.1 1082.9,787.0 1086.6,790.0 1086.5,791.3 1076.6,790.3ZM1086.5,791.3 1085.4,798.8 1090.2,811.9 1087.4,816.8 1072.6,808.1 1069.5,802.4 1072.1,791.8 1076.6,790.3ZM1087.4,818.5 1086.6,820.0 1082.8,827.6 1070.1,827.8 1066.3,822.9 1072.6,808.1 1087.4,816.8ZM1082.8,827.6 1077.9,837.6 1073.1,848.6 1067.7,846.3 1063.1,838.4 1070.1,827.8ZM1073.1,848.6 1070.4,855.1 1069.0,858.5 1058.4,860.8 1056.5,859.3 1067.7,846.3ZM1069.0,858.5 1065.4,867.6 1079.0,867.6 1077.0,873.1 1067.2,873.0 1058.4,860.8ZM1073.6,896.6 1059.9,895.9 1056.6,891.2 1056.6,882.0 1067.2,873.0 1077.0,873.1 1079.2,876.5 1078.3,892.4ZM1073.6,896.6 1076.3,907.4 1068.1,917.5 1053.5,913.9 1053.3,911.9 1059.9,895.9ZM1072.4,930.3 1061.1,930.7 1048.0,922.6 1053.5,913.9 1068.1,917.5 1074.1,928.2ZM1061.1,930.7 1046.5,931.4 1047.3,923.1 1048.0,922.6ZM1090.2,811.9 1090.4,812.5 1087.4,818.5 1087.4,816.8ZM1079.0,867.6 1099.3,867.6 1099.3,878.7 1079.2,876.5 1077.0,873.1ZM1100.0,879.6 1095.8,894.8 1091.5,895.5 1078.3,892.4 1079.2,876.5 1099.3,878.7ZM1073.6,896.6 1078.3,892.4 1091.5,895.5 1086.4,913.3 1076.3,907.4ZM1076.3,907.4 1086.4,913.3 1089.4,917.4 1083.4,927.3 1074.1,928.2 1068.1,917.5ZM1083.3,940.9 1080.4,940.2 1075.4,930.2 1072.4,930.3 1074.1,928.2 1083.4,927.3 1089.1,935.6ZM1113.6,878.8 1109.8,880.3 1100.0,879.6 1099.3,878.7 1099.3,867.6 1118.3,867.6 1118.4,867.7ZM1111.8,900.1 1106.2,903.7 1095.8,894.8 1100.0,879.6 1109.8,880.3ZM1089.4,917.4 1086.4,913.3 1091.5,895.5 1095.8,894.8 1106.2,903.7 1104.6,915.5ZM1103.8,935.5 1099.0,941.5 1089.1,935.6 1083.4,927.3 1089.4,917.4 1104.6,915.5 1105.5,916.6ZM1099.3,944.9 1083.3,940.9 1089.1,935.6 1099.0,941.5ZM1119.1,867.6 1132.3,867.6 1134.5,869.6 1135.0,872.7 1124.3,886.6 1113.6,878.8 1118.4,867.7ZM1123.0,898.2 1111.8,900.1 1109.8,880.3 1113.6,878.8 1124.3,886.6 1125.9,892.9ZM1123.0,898.2 1128.8,908.1 1125.1,921.7 1105.5,916.6 1104.6,915.5 1106.2,903.7 1111.8,900.1ZM1126.4,923.7 1120.3,935.9 1103.8,935.5 1105.5,916.6 1125.1,921.7ZM1121.4,939.8 1120.4,940.2 1100.4,945.2 1099.3,944.9 1099.0,941.5 1103.8,935.5 1120.3,935.9ZM1132.3,867.6 1134.2,867.6 1134.5,869.6ZM1125.9,892.9 1124.3,886.6 1135.0,872.7 1138.2,891.8ZM1123.0,898.2 1125.9,892.9 1138.2,891.8 1139.2,897.6 1143.6,903.9 1144.2,905.7 1128.8,908.1ZM1126.4,923.7 1125.1,921.7 1128.8,908.1 1144.2,905.7 1145.3,906.3 1147.2,909.1 1138.4,927.4ZM1126.4,923.7 1138.4,927.4 1138.9,928.0 1139.7,940.3 1138.8,941.7 1130.4,936.4 1121.4,939.8 1120.3,935.9ZM1143.6,903.9 1145.3,906.3 1144.2,905.7ZM1147.2,909.1 1147.9,910.1 1150.5,920.1 1154.5,927.3 1153.5,928.3 1138.9,928.0 1138.4,927.4ZM1153.5,928.3 1158.1,943.0 1157.8,943.2 1155.7,944.2 1139.7,940.3 1138.9,928.0ZM1155.2,945.2 1150.5,948.9 1138.8,941.7 1139.7,940.3 1155.7,944.2ZM1154.5,927.3 1161.7,940.2 1158.1,943.0 1153.5,928.3ZM1157.8,943.2 1155.2,945.2 1155.7,944.2Z"/>
<path fill="#ffebaf" d="M1203.8,576.9 1201.8,575.9 1205.5,571.6 1205.9,574.8ZM1213.1,567.8 1215.1,567.5 1219.3,563.3 1218.4,566.8 1216.7,568.1ZM1205.5,571.6 1208.4,568.4 1213.1,567.8 1216.7,568.1 1216.7,579.2 1214.1,580.0 1205.9,574.8ZM1212.3,583.8 1211.8,580.9 1203.8,576.9 1205.9,574.8 1214.1,580.0ZM1219.3,563.3 1220.1,562.5 1226.8,566.7 1227.0,570.3 1226.4,571.6 1218.4,566.8ZM1226.4,571.6 1227.2,574.8 1221.4,580.2 1221.0,580.2 1216.7,579.2 1216.7,568.1 1218.4,566.8ZM1213.3,589.3 1212.3,583.8 1214.1,580.0 1216.7,579.2 1221.0,580.2 1218.5,590.5 1218.4,590.5ZM1217.8,594.4 1213.4,590.1 1213.3,589.3 1218.4,590.5ZM1227.0,570.3 1227.3,574.8 1227.2,574.8 1226.4,571.6ZM1227.3,574.8 1227.6,580.0 1231.0,586.0 1228.2,588.7 1221.4,580.2 1227.2,574.8ZM1228.2,592.4 1218.5,590.5 1221.0,580.2 1221.4,580.2 1228.2,588.7ZM1228.2,592.4 1228.4,592.8 1225.9,598.6 1219.9,598.8 1220.1,596.7 1217.8,594.4 1218.4,590.5 1218.5,590.5ZM1226.2,604.2 1219.3,603.4 1219.9,598.8 1225.9,598.6 1227.2,602.5ZM1251.6,549.1 1255.3,546.9 1252.0,549.4ZM1250.6,558.5 1249.3,556.7 1250.2,550.0 1251.6,549.1 1252.0,549.4 1253.7,552.7 1252.5,558.2ZM1231.0,586.0 1231.8,587.5 1232.1,588.7 1239.9,589.5 1240.5,592.1 1238.2,594.4 1228.4,592.8 1228.2,592.4 1228.2,588.7ZM1230.0,603.6 1230.0,600.6 1228.0,602.8 1227.2,602.5 1225.9,598.6 1228.4,592.8 1238.2,594.4 1239.1,599.2 1234.3,605.4ZM1232.1,610.0 1230.0,610.0 1230.0,603.6 1234.3,605.4 1235.1,607.4ZM1228.0,602.8 1226.8,604.2 1226.2,604.2 1227.2,602.5ZM1271.1,527.5 1273.2,526.8 1273.4,527.9ZM1273.4,527.9 1273.7,528.3 1267.5,535.4 1264.6,533.6 1263.4,531.8 1262.7,528.6 1263.4,527.7 1268.4,528.4 1271.1,527.5ZM1264.1,545.1 1264.7,545.1 1264.6,545.3ZM1266.1,543.2 1266.7,536.8 1266.4,536.3 1265.9,536.8 1264.9,534.0 1264.6,533.6 1267.5,535.4 1268.1,540.2ZM1255.3,546.9 1258.5,545.0 1258.9,545.4 1259.2,545.1 1264.1,545.1 1264.6,545.3 1264.7,545.7 1262.7,551.1 1253.7,552.7 1252.0,549.4ZM1258.1,562.2 1252.5,558.2 1253.7,552.7 1262.7,551.1 1263.3,556.6ZM1255.9,566.2 1254.6,564.3 1251.7,561.8 1251.2,559.4 1250.6,558.5 1252.5,558.2 1258.1,562.2 1258.3,563.8ZM1249.3,582.4 1251.7,575.1 1253.3,574.5 1254.2,576.4 1252.6,583.3 1252.1,583.6ZM1248.9,591.3 1240.5,592.1 1239.9,589.5 1241.0,589.6 1241.8,589.2 1246.8,589.9 1248.2,585.6 1248.5,583.4 1249.0,583.3 1249.3,582.4 1252.1,583.6ZM1245.8,603.1 1239.1,599.2 1238.2,594.4 1240.5,592.1 1248.9,591.3 1249.5,592.5 1246.0,603.0ZM1235.1,607.4 1234.3,605.4 1239.1,599.2 1245.8,603.1 1244.3,609.8 1244.0,610.0 1237.8,610.0ZM1235.1,607.4 1237.8,610.0 1232.1,610.0ZM1273.2,526.8 1273.4,526.8 1281.7,520.1 1283.3,521.3 1283.5,523.7 1280.0,530.5 1273.7,528.3 1273.4,527.9ZM1278.0,539.0 1268.1,540.2 1267.5,535.4 1273.7,528.3 1280.0,530.5 1280.9,532.3ZM1275.5,547.6 1271.1,548.8 1264.7,545.7 1264.6,545.3 1264.7,545.1 1265.9,545.1 1266.1,543.2 1268.1,540.2 1278.0,539.0 1278.7,541.8ZM1271.1,548.8 1272.2,554.3 1265.9,554.3 1265.8,555.0 1272.4,555.0 1273.1,558.6 1270.3,559.0 1263.3,556.6 1262.7,551.1 1264.7,545.7ZM1267.3,564.1 1266.8,561.7 1260.3,565.5 1258.3,563.8 1258.1,562.2 1263.3,556.6 1270.3,559.0ZM1253.3,574.5 1260.0,571.8 1260.1,571.8 1260.2,571.7 1260.2,571.8 1263.4,571.2 1263.5,573.2 1254.2,576.4ZM1260.3,565.5 1256.8,567.5 1255.9,566.2 1258.3,563.8ZM1263.5,573.2 1263.9,573.6 1261.9,584.8 1260.3,585.5 1252.6,583.3 1254.2,576.4ZM1249.5,592.5 1248.9,591.3 1252.1,583.6 1252.6,583.3 1260.3,585.5 1261.4,593.7 1254.4,596.1ZM1249.5,592.5 1254.4,596.1 1255.2,603.2 1254.3,603.5 1246.0,603.0ZM1251.0,610.0 1244.8,610.0 1244.3,609.8 1245.8,603.1 1246.0,603.0 1254.3,603.5ZM1234.5,665.7 1229.3,667.6 1227.4,664.5 1228.5,661.0 1234.8,660.7ZM1229.3,667.6 1225.7,671.0 1225.4,671.0 1227.4,664.5ZM1227.3,674.4 1225.1,671.8 1225.4,671.0 1225.7,671.0ZM1283.3,521.3 1285.1,522.6 1296.4,518.3 1296.8,519.8 1294.5,524.8 1283.5,523.7ZM1290.1,534.9 1289.5,535.2 1280.9,532.3 1280.0,530.5 1283.5,523.7 1294.5,524.8 1294.6,525.2ZM1278.7,541.8 1278.0,539.0 1280.9,532.3 1289.5,535.2 1291.0,543.9 1286.2,547.0ZM1281.7,553.8 1275.5,547.6 1278.7,541.8 1286.2,547.0 1284.5,552.8ZM1281.7,553.8 1276.4,559.9 1273.1,558.6 1272.4,555.0 1273.5,555.0 1273.5,554.3 1273.4,554.3 1272.2,554.3 1271.1,548.8 1275.5,547.6ZM1276.4,559.9 1276.7,561.0 1276.0,568.7 1268.0,567.4 1267.3,564.1 1270.3,559.0 1273.1,558.6ZM1263.4,571.2 1268.9,570.3 1268.5,570.0 1268.0,567.4 1276.0,568.7 1276.3,569.5 1271.7,576.7 1263.9,573.6 1263.5,573.2ZM1263.9,573.6 1271.7,576.7 1272.3,579.0 1268.4,584.9 1261.9,584.8ZM1264.5,596.3 1264.8,596.3 1264.7,596.4ZM1269.4,586.6 1260.9,586.0 1261.5,593.8 1261.4,593.7 1260.3,585.5 1261.9,584.8 1268.4,584.9ZM1261.5,593.8 1261.7,596.0 1264.5,596.3 1264.7,596.4 1265.4,598.2 1260.1,605.5 1255.2,603.2 1254.4,596.1 1261.4,593.7ZM1254.3,603.5 1255.2,603.2 1260.1,605.5 1261.6,610.0 1251.0,610.0ZM1259.2,623.0 1258.5,619.2 1259.4,619.1 1259.9,622.6ZM1240.3,670.3 1234.5,665.7 1234.8,660.7 1244.7,660.2 1240.7,670.2ZM1234.0,676.0 1229.3,676.8 1227.3,674.4 1225.7,671.0 1229.3,667.6 1234.5,665.7 1240.3,670.3 1238.8,674.5ZM1239.1,676.0 1238.5,675.1 1234.0,676.0 1238.8,674.5ZM1296.4,518.3 1298.4,517.6 1301.7,520.9 1307.5,520.3 1305.5,522.5 1296.8,519.8ZM1301.4,531.1 1294.6,525.2 1294.5,524.8 1296.8,519.8 1305.5,522.5 1306.9,530.8ZM1297.2,535.0 1290.1,534.9 1294.6,525.2 1301.4,531.1ZM1297.2,535.0 1300.6,541.4 1295.0,545.6 1291.0,543.9 1289.5,535.2 1290.1,534.9ZM1295.9,547.8 1291.9,548.3 1292.6,550.3 1293.0,554.5 1288.2,555.7 1284.5,552.8 1286.2,547.0 1291.0,543.9 1295.0,545.6ZM1281.7,553.8 1284.5,552.8 1288.2,555.7 1289.4,564.5 1287.6,564.0 1285.1,561.8 1279.7,561.8 1276.7,561.0 1276.4,559.9ZM1289.4,565.5 1287.6,564.0 1289.4,564.5 1289.8,565.0ZM1279.7,561.8 1278.4,561.8 1278.4,570.3 1276.3,569.5 1276.0,568.7 1276.7,561.0ZM1278.4,570.3 1278.4,571.8 1284.8,575.0 1280.7,581.0 1278.9,581.9 1272.3,579.0 1271.7,576.7 1276.3,569.5ZM1271.5,589.1 1271.7,586.8 1269.4,586.6 1268.4,584.9 1272.3,579.0 1278.9,581.9 1277.7,582.5 1279.2,584.7 1276.0,591.3ZM1264.8,596.3 1270.9,596.8 1271.5,589.1 1276.0,591.3 1277.9,595.7 1277.4,599.3 1275.0,601.1 1265.4,598.2 1264.7,596.4ZM1275.0,601.1 1273.8,606.1 1263.3,610.0 1261.6,610.0 1260.1,605.5 1265.4,598.2ZM1266.6,614.4 1264.9,610.0 1263.3,610.0 1273.8,606.1 1275.4,610.3 1271.6,615.5 1267.8,615.2ZM1271.4,620.1 1265.2,623.9 1261.6,623.6 1259.9,622.6 1259.4,619.1 1270.7,617.2ZM1267.8,615.2 1266.8,615.1 1266.6,614.4ZM1262.6,633.9 1265.4,632.5 1265.2,633.8ZM1261.6,623.6 1259.3,623.4 1259.2,623.0 1259.9,622.6ZM1254.1,641.8 1260.2,635.1 1262.6,633.9 1265.2,633.8 1266.0,635.3 1262.3,642.9 1256.4,644.1ZM1256.3,645.5 1252.7,643.4 1254.1,641.8 1256.4,644.1ZM1256.2,655.2 1256.0,653.8 1256.3,654.1ZM1246.2,660.1 1246.8,660.1 1254.4,661.4 1251.6,664.0ZM1244.7,660.2 1246.2,660.1 1251.6,664.0 1250.4,671.2 1240.7,670.2ZM1238.8,674.5 1240.3,670.3 1240.7,670.2 1250.4,671.2 1250.4,671.2 1250.3,672.6 1248.5,671.8 1247.1,682.8 1245.8,684.1 1243.5,681.8 1239.1,676.0ZM1306.9,530.8 1305.5,522.5 1307.5,520.3 1310.1,520.1 1314.9,521.7 1310.4,531.6 1308.3,531.9ZM1297.2,535.0 1301.4,531.1 1306.9,530.8 1308.3,531.9 1306.7,541.1 1300.6,541.4ZM1298.9,548.6 1298.5,547.5 1295.9,547.8 1295.0,545.6 1300.6,541.4 1306.7,541.1 1308.0,543.0 1305.5,549.4ZM1299.5,557.6 1299.7,554.9 1301.0,554.2 1300.0,551.5 1300.1,551.0 1299.8,550.9 1298.9,548.6 1305.5,549.4 1305.9,552.1 1301.0,559.3ZM1289.4,564.5 1288.2,555.7 1293.0,554.5 1293.4,559.3 1299.2,560.1 1299.5,557.6 1301.0,559.3 1301.3,561.3 1297.3,565.9 1289.8,565.0ZM1286.0,575.3 1293.4,576.8 1294.1,577.2 1292.2,578.8 1291.9,578.7 1291.9,578.7ZM1296.9,572.2 1296.7,571.8 1289.4,565.5 1289.8,565.0 1297.3,565.9 1298.0,569.1ZM1284.8,575.0 1285.1,575.1 1286.0,575.3 1291.9,578.7 1281.8,580.4 1280.7,581.0ZM1279.2,584.7 1281.8,588.4 1283.0,592.8 1277.9,595.7 1276.0,591.3ZM1283.0,592.8 1283.5,595.1 1278.5,596.7 1278.4,599.8 1277.4,599.3 1277.9,595.7ZM1277.4,599.3 1278.4,599.8 1278.2,606.7 1277.6,610.0 1277.1,610.0 1276.9,611.2 1275.4,610.3 1273.8,606.1 1275.0,601.1ZM1270.7,617.2 1281.2,615.5 1279.9,621.3 1276.5,623.1 1271.4,620.1ZM1276.9,611.2 1276.0,615.9 1271.6,615.5 1275.4,610.3ZM1275.9,627.1 1268.8,629.6 1270.2,624.3 1265.2,623.9 1271.4,620.1 1276.5,623.1ZM1265.4,632.5 1268.5,630.9 1268.8,629.6 1275.9,627.1 1277.4,630.9 1270.0,637.0 1266.0,635.3 1265.2,633.8ZM1270.0,637.0 1272.3,639.9 1270.1,647.2 1267.2,648.0 1262.3,642.9 1266.0,635.3ZM1262.3,642.9 1267.2,648.0 1264.0,654.3 1256.3,654.1 1256.0,653.8 1256.0,653.4 1258.5,646.8 1256.3,645.5 1256.4,644.1ZM1256.3,654.1 1264.0,654.3 1266.4,657.3 1262.3,665.1 1261.7,665.1 1256.8,661.6 1256.2,655.2ZM1254.4,661.4 1256.8,661.8 1256.8,661.6 1261.7,665.1 1257.1,671.9 1250.4,671.2 1250.4,671.2 1251.6,664.0ZM1260.1,676.8 1250.3,672.6 1250.4,671.2 1257.1,671.9 1260.8,675.2ZM1247.1,682.8 1246.8,685.1 1245.8,684.1ZM1318.9,523.0 1320.1,523.4 1324.4,523.1 1322.3,527.2ZM1314.9,521.7 1318.9,523.0 1322.3,527.2 1322.6,528.3 1320.0,532.5 1319.2,532.9 1310.4,531.6ZM1306.7,541.1 1308.3,531.9 1310.4,531.6 1319.2,532.9 1316.5,544.7 1315.4,545.1 1308.0,543.0ZM1305.9,552.1 1305.5,549.4 1308.0,543.0 1315.4,545.1 1313.6,554.3ZM1313.7,554.5 1309.1,563.2 1301.3,561.3 1301.0,559.3 1305.9,552.1 1313.6,554.3ZM1309.8,563.9 1309.6,571.0 1305.3,573.6 1298.0,569.1 1297.3,565.9 1301.3,561.3 1309.1,563.2ZM1299.2,577.9 1296.9,572.2 1298.0,569.1 1305.3,573.6 1305.2,580.6 1304.9,580.7ZM1304.9,580.7 1302.0,583.4 1300.2,581.7 1292.2,578.8 1294.1,577.2 1300.1,580.2 1299.2,577.9ZM1281.2,615.5 1283.5,615.1 1290.0,614.9 1290.8,616.4 1285.7,623.9 1279.9,621.3ZM1277.4,630.9 1275.9,627.1 1276.5,623.1 1279.9,621.3 1285.7,623.9 1287.1,626.1 1284.5,631.2 1280.2,632.9ZM1277.4,630.9 1280.2,632.9 1280.4,640.7 1272.3,639.9 1270.0,637.0ZM1272.3,639.9 1280.4,640.7 1280.9,641.3 1277.1,651.0 1270.1,647.2ZM1270.1,647.2 1277.1,651.0 1277.2,651.3 1271.0,658.9 1266.4,657.3 1264.0,654.3 1267.2,648.0ZM1273.3,668.1 1269.3,669.6 1262.3,665.1 1266.4,657.3 1271.0,658.9 1273.7,664.5ZM1265.4,675.3 1260.8,675.2 1257.1,671.9 1261.7,665.1 1262.3,665.1 1269.3,669.6ZM1267.2,679.0 1266.8,679.3 1260.2,676.8 1260.1,676.8 1260.8,675.2 1265.4,675.3ZM1324.4,523.1 1330.1,522.6 1333.7,523.0 1328.9,528.4 1322.6,528.3 1322.3,527.2ZM1332.5,533.1 1326.6,538.7 1320.0,532.5 1322.6,528.3 1328.9,528.4ZM1326.6,538.7 1327.8,543.5 1326.8,545.8 1323.9,547.1 1316.5,544.7 1319.2,532.9 1320.0,532.5ZM1322.0,557.5 1321.9,557.5 1313.7,554.5 1313.6,554.3 1315.4,545.1 1316.5,544.7 1323.9,547.1ZM1313.7,554.5 1321.9,557.5 1316.6,564.8 1309.8,563.9 1309.1,563.2ZM1316.6,564.8 1318.5,568.0 1314.3,574.5 1309.6,571.0 1309.8,563.9ZM1305.2,580.6 1305.3,573.6 1309.6,571.0 1314.3,574.5 1315.5,578.4 1312.8,582.6 1311.6,583.6ZM1304.9,580.7 1305.2,580.6 1311.6,583.6 1311.5,585.5 1307.7,588.7 1302.0,583.4ZM1290.0,614.9 1301.6,614.5 1301.5,614.9 1295.5,619.2 1290.8,616.4ZM1285.7,623.9 1290.8,616.4 1295.5,619.2 1296.1,627.7 1287.1,626.1ZM1292.7,638.8 1292.6,638.9 1284.5,631.2 1287.1,626.1 1296.1,627.7 1296.7,628.3ZM1289.4,642.5 1280.9,641.3 1280.4,640.7 1280.2,632.9 1284.5,631.2 1292.6,638.9ZM1287.7,653.7 1284.8,655.7 1277.2,651.3 1277.1,651.0 1280.9,641.3 1289.4,642.5 1289.8,646.0ZM1273.7,664.5 1271.0,658.9 1277.2,651.3 1284.8,655.7 1284.5,658.7ZM1273.3,668.1 1273.7,664.5 1284.5,658.7 1286.6,663.3 1284.2,667.5 1281.8,666.8 1276.6,671.0ZM1273.3,668.1 1276.6,671.0 1273.5,673.5 1267.2,679.0 1265.4,675.3 1269.3,669.6ZM1339.4,524.2 1338.3,523.4 1338.4,523.4 1342.6,516.8 1345.9,523.4ZM1338.5,534.1 1337.9,534.9 1332.5,533.1 1328.9,528.4 1333.7,523.0 1338.3,523.4 1339.4,524.2ZM1337.9,534.9 1338.4,539.8 1327.8,543.5 1326.6,538.7 1332.5,533.1ZM1326.8,545.8 1327.8,543.5 1338.4,539.8 1339.6,541.1 1338.5,550.4 1333.2,551.6ZM1326.8,545.8 1333.2,551.6 1330.4,559.8 1328.4,560.8 1322.0,557.5 1323.9,547.1ZM1328.4,560.8 1327.6,568.1 1325.0,570.1 1318.5,568.0 1316.6,564.8 1321.9,557.5 1322.0,557.5ZM1318.5,568.0 1325.0,570.1 1323.7,577.3 1315.5,578.4 1314.3,574.5ZM1323.7,577.3 1326.5,580.3 1322.7,586.3 1312.8,582.6 1315.5,578.4ZM1315.6,594.4 1317.7,593.4 1313.5,583.7 1311.5,585.5 1311.6,583.6 1312.8,582.6 1322.7,586.3 1323.0,589.2 1320.9,593.9 1317.4,595.4ZM1316.8,603.8 1316.8,596.8 1313.5,595.4 1315.6,594.4 1317.4,595.4 1318.0,603.3ZM1307.4,611.5 1307.2,610.0 1312.0,610.0 1311.9,612.9ZM1306.7,610.0 1306.7,610.0 1306.7,609.7ZM1311.9,612.9 1313.0,614.3 1309.4,620.0 1306.8,620.9 1301.5,614.9 1301.6,614.5 1308.5,614.2 1309.1,614.1 1307.7,614.2 1307.4,611.5ZM1296.7,628.3 1296.1,627.7 1295.5,619.2 1301.5,614.9 1306.8,620.9 1303.9,628.4ZM1300.8,641.8 1292.7,638.8 1296.7,628.3 1303.9,628.4 1306.8,631.5 1302.0,641.3ZM1300.0,650.4 1289.8,646.0 1289.4,642.5 1292.6,638.9 1292.7,638.8 1300.8,641.8ZM1300.3,650.9 1298.6,657.0 1287.7,653.7 1289.8,646.0 1300.0,650.4ZM1284.5,658.7 1284.8,655.7 1287.7,653.7 1298.6,657.0 1299.0,657.8 1299.1,659.8 1292.3,665.3 1291.8,665.4 1286.6,663.3ZM1290.9,669.5 1290.2,669.3 1284.2,667.5 1286.6,663.3 1291.8,665.4ZM1338.5,534.1 1339.4,524.2 1345.9,523.4 1346.8,525.1 1348.5,525.8 1349.3,526.8 1349.2,532.0ZM1338.5,534.1 1349.2,532.0 1349.4,532.3 1345.9,541.8 1339.6,541.1 1338.4,539.8 1337.9,534.9ZM1339.6,541.1 1345.9,541.8 1349.2,544.4 1343.0,553.1 1342.3,553.2 1338.5,550.4ZM1333.2,551.6 1338.5,550.4 1342.3,553.2 1339.9,562.3 1330.4,559.8ZM1330.4,559.8 1339.9,562.3 1341.3,564.6 1335.1,571.9 1327.6,568.1 1328.4,560.8ZM1323.7,577.3 1325.0,570.1 1327.6,568.1 1335.1,571.9 1335.2,572.2 1331.8,581.5 1326.5,580.3ZM1323.0,589.2 1322.7,586.3 1326.5,580.3 1331.8,581.5 1332.5,582.4 1333.0,588.6ZM1320.9,593.9 1323.0,589.2 1333.0,588.6 1333.1,588.9 1327.0,596.1ZM1318.0,603.3 1317.4,595.4 1320.9,593.9 1327.0,596.1 1329.9,600.9 1323.3,607.5 1322.3,607.7ZM1312.0,610.0 1316.8,610.0 1316.8,603.8 1318.0,603.3 1322.3,607.7 1321.4,610.0 1320.2,610.0 1320.2,612.3 1320.4,612.3 1319.6,614.1 1313.0,614.3 1311.9,612.9ZM1319.6,614.1 1320.0,614.9 1317.4,624.9 1309.4,620.0 1313.0,614.3ZM1303.9,628.4 1306.8,620.9 1309.4,620.0 1317.4,624.9 1318.1,626.8 1310.3,632.5 1306.8,631.5ZM1302.0,641.3 1306.8,631.5 1310.3,632.5 1312.8,637.2 1312.4,644.3 1311.1,645.3ZM1300.3,650.9 1300.0,650.4 1300.8,641.8 1302.0,641.3 1311.1,645.3 1310.0,649.4ZM1300.3,650.9 1310.0,649.4 1311.9,655.4 1299.0,657.8 1298.6,657.0ZM1303.4,670.6 1300.1,671.8 1298.1,671.3 1292.3,665.3 1299.1,659.8 1302.9,664.4ZM1298.1,671.3 1290.9,669.5 1291.8,665.4 1292.3,665.3ZM1375.3,494.3 1375.1,493.4 1376.1,492.0 1376.5,493.3ZM1362.3,524.4 1363.5,520.9 1365.9,522.1 1362.6,524.5ZM1355.7,528.0 1361.8,525.9 1362.3,524.4 1362.6,524.5 1363.3,532.1 1360.6,533.5ZM1350.1,526.6 1354.3,528.4 1355.7,528.0 1360.6,533.5 1357.2,536.5 1349.4,532.3 1349.2,532.0 1349.3,526.8ZM1349.2,544.4 1345.9,541.8 1349.4,532.3 1357.2,536.5 1356.8,541.9 1354.6,545.1ZM1354.2,554.6 1352.0,556.2 1343.0,553.1 1349.2,544.4 1354.6,545.1 1355.6,548.6ZM1352.0,556.2 1349.9,565.4 1347.7,566.7 1341.3,564.6 1339.9,562.3 1342.3,553.2 1343.0,553.1ZM1347.7,566.7 1347.4,576.5 1344.8,577.8 1335.2,572.2 1335.1,571.9 1341.3,564.6ZM1331.8,581.5 1335.2,572.2 1344.8,577.8 1342.4,581.4 1332.5,582.4ZM1333.0,588.6 1332.5,582.4 1342.4,581.4 1343.4,586.3 1340.1,594.2 1333.1,588.9ZM1333.1,588.9 1340.1,594.2 1340.2,594.4 1337.5,598.8 1332.9,601.1 1329.9,600.9 1327.0,596.1ZM1331.0,611.8 1329.1,610.8 1333.6,610.1 1334.1,610.0 1327.7,610.0 1323.3,607.5 1329.9,600.9 1332.9,601.1 1334.8,610.0ZM1327.7,610.0 1321.4,610.0 1322.3,607.7 1323.3,607.5ZM1320.4,612.3 1329.1,610.8 1331.0,611.8 1330.5,619.6 1328.8,620.5 1320.0,614.9 1319.6,614.1ZM1327.8,622.8 1327.7,621.7 1321.1,621.7 1321.6,627.7 1321.0,627.9 1318.1,626.8 1317.4,624.9 1320.0,614.9 1328.8,620.5ZM1322.4,636.4 1312.8,637.2 1310.3,632.5 1318.1,626.8 1321.0,627.9ZM1323.6,637.8 1318.7,645.2 1312.4,644.3 1312.8,637.2 1322.4,636.4ZM1310.0,649.4 1311.1,645.3 1312.4,644.3 1318.7,645.2 1321.4,648.6 1312.2,655.8 1311.9,655.4ZM1299.0,657.8 1311.9,655.4 1312.2,655.8 1314.6,660.3 1302.9,664.4 1299.1,659.8ZM1309.1,672.4 1305.7,672.1 1303.4,670.6 1302.9,664.4 1314.6,660.3 1314.9,660.5 1316.6,664.4ZM1305.7,672.1 1300.2,671.8 1300.1,671.8 1303.4,670.6ZM1401.2,444.9 1401.8,440.0 1403.5,440.0 1403.8,442.6 1403.3,445.2ZM1400.3,452.6 1401.2,444.9 1403.3,445.2 1404.3,447.0 1403.3,451.0ZM1398.9,460.8 1399.7,455.9 1399.7,460.4ZM1381.9,484.2 1390.2,480.1 1391.9,491.0 1385.4,492.5ZM1376.1,492.0 1381.8,484.2 1381.9,484.2 1385.4,492.5 1383.4,494.5 1376.5,493.3ZM1374.6,505.3 1376.8,501.7 1375.3,494.3 1376.5,493.3 1383.4,494.5 1383.6,497.4 1377.4,505.5ZM1374.8,515.5 1372.6,508.4 1374.6,505.3 1377.4,505.5 1379.6,507.2 1379.2,517.4ZM1369.8,522.1 1375.1,516.8 1374.8,515.5 1379.2,517.4 1379.7,518.0 1371.8,523.7ZM1363.3,532.1 1362.6,524.5 1365.9,522.1 1368.5,523.4 1369.8,522.1 1371.8,523.7 1373.6,528.6 1368.6,533.9ZM1360.6,533.5 1363.3,532.1 1368.6,533.9 1368.9,534.7 1368.8,543.9 1368.6,544.0 1356.8,541.9 1357.2,536.5ZM1355.6,548.6 1354.6,545.1 1356.8,541.9 1368.6,544.0 1363.2,550.2ZM1354.2,554.6 1355.6,548.6 1363.2,550.2 1365.2,554.4 1361.0,558.5ZM1354.2,554.6 1361.0,558.5 1361.3,559.9 1357.1,567.2 1349.9,565.4 1352.0,556.2ZM1358.9,569.3 1357.9,578.8 1352.1,579.0 1347.4,576.5 1347.7,566.7 1349.9,565.4 1357.1,567.2ZM1347.4,576.5 1352.1,579.0 1350.3,587.1 1343.4,586.3 1342.4,581.4 1344.8,577.8ZM1347.8,596.5 1340.2,594.4 1340.1,594.2 1343.4,586.3 1350.3,587.1 1351.2,588.9ZM1348.0,596.8 1345.2,598.5 1345.0,598.7 1341.0,605.5 1337.5,598.8 1340.2,594.4 1347.8,596.5ZM1341.0,605.5 1338.7,609.5 1341.4,609.2 1339.7,611.0 1334.8,610.0 1332.9,601.1 1337.5,598.8ZM1339.7,611.0 1340.6,616.9 1338.5,621.2 1330.5,619.6 1331.0,611.8 1334.8,610.0ZM1328.4,627.8 1327.8,622.8 1328.8,620.5 1330.5,619.6 1338.5,621.2 1340.0,624.6 1336.7,631.4 1333.6,633.0ZM1321.6,627.7 1321.9,630.1 1328.6,629.3 1328.4,627.8 1333.6,633.0 1332.1,636.7 1329.1,638.9 1323.6,637.8 1322.4,636.4 1321.0,627.9ZM1325.1,650.7 1321.4,648.6 1318.7,645.2 1323.6,637.8 1329.1,638.9 1329.3,649.5ZM1325.1,650.7 1323.3,654.7 1314.9,660.5 1314.6,660.3 1312.2,655.8 1321.4,648.6ZM1323.3,654.7 1326.4,660.0 1326.4,660.1 1323.6,661.8 1323.1,663.8 1320.5,666.8 1316.6,664.4 1314.9,660.5ZM1322.0,668.7 1321.9,669.3 1313.5,672.6 1309.1,672.4 1316.6,664.4 1320.5,666.8ZM1403.8,442.6 1404.4,447.0 1404.3,447.0 1403.3,445.2ZM1403.3,451.0 1404.3,447.0 1404.4,447.0 1405.1,452.6ZM1403.3,451.0 1405.1,452.6 1405.2,453.4 1406.5,460.0 1405.1,462.0 1399.7,460.4 1399.7,455.9 1400.2,453.4 1400.3,452.6ZM1399.7,460.4 1405.1,462.0 1406.9,466.5 1404.6,471.7 1397.3,470.9 1398.5,463.4 1398.9,460.8ZM1392.6,477.7 1396.8,473.4 1397.3,470.9 1404.6,471.7 1405.8,474.2 1398.8,481.0ZM1395.6,492.5 1391.9,491.0 1390.2,480.1 1390.2,480.1 1392.6,477.7 1398.8,481.0 1401.4,486.7ZM1383.4,494.5 1385.4,492.5 1391.9,491.0 1395.6,492.5 1396.0,493.5 1394.7,500.8 1388.9,503.8 1383.6,497.4ZM1383.6,497.4 1388.9,503.8 1387.5,508.6 1379.6,507.2 1377.4,505.5ZM1379.2,517.4 1379.6,507.2 1387.5,508.6 1389.0,511.8 1383.8,520.0 1379.7,518.0ZM1379.7,518.0 1383.8,520.0 1384.4,522.1 1383.0,526.0 1380.2,528.8 1373.6,528.6 1371.8,523.7ZM1368.6,533.9 1373.6,528.6 1380.2,528.8 1381.8,538.0 1380.8,538.9 1368.9,534.7ZM1380.8,538.9 1378.0,546.6 1375.2,548.1 1368.8,543.9 1368.9,534.7ZM1365.2,554.4 1363.2,550.2 1368.6,544.0 1368.8,543.9 1375.2,548.1 1374.1,553.1 1371.2,555.0ZM1365.2,554.4 1371.2,555.0 1368.8,564.3 1361.3,559.9 1361.0,558.5ZM1358.9,569.3 1357.1,567.2 1361.3,559.9 1368.8,564.3 1369.1,565.2 1365.3,568.8ZM1366.9,575.4 1361.9,580.0 1361.0,581.0 1360.8,581.0 1357.9,578.8 1358.9,569.3 1365.3,568.8 1367.0,575.2ZM1360.8,581.2 1356.1,585.9 1355.0,589.1 1351.2,588.9 1350.3,587.1 1352.1,579.0 1357.9,578.8 1360.8,581.0ZM1355.0,589.1 1353.6,593.4 1353.5,593.5 1353.5,593.5 1348.0,596.8 1347.8,596.5 1351.2,588.9ZM1347.3,608.5 1355.7,607.6 1356.1,609.6 1351.3,610.7ZM1341.4,609.2 1347.3,608.5 1351.3,610.7 1348.6,616.7 1340.6,616.9 1339.7,611.0ZM1340.6,616.9 1348.6,616.7 1351.2,622.6 1348.4,626.2 1340.0,624.6 1338.5,621.2ZM1342.1,634.7 1336.7,631.4 1340.0,624.6 1348.4,626.2 1349.2,628.9 1347.9,633.3ZM1342.4,645.5 1332.1,636.7 1333.6,633.0 1336.7,631.4 1342.1,634.7 1342.8,645.4ZM1329.3,649.5 1329.1,638.9 1332.1,636.7 1342.4,645.5 1337.6,650.8 1334.4,652.1ZM1334.0,655.5 1331.9,656.8 1326.5,660.0 1326.4,660.0 1323.3,654.7 1325.1,650.7 1329.3,649.5 1334.4,652.1ZM1323.1,663.8 1322.0,668.7 1320.5,666.8ZM1326.5,660.0 1326.4,660.1 1326.4,660.0ZM1406.5,460.0 1407.7,465.9 1414.9,465.1 1414.0,466.1 1406.9,466.5 1405.1,462.0ZM1415.9,471.2 1411.8,470.9 1411.0,476.7 1413.4,477.6 1410.2,477.9 1405.8,474.2 1404.6,471.7 1406.9,466.5 1414.0,466.1ZM1398.8,481.0 1405.8,474.2 1410.2,477.9 1406.4,486.4 1401.4,486.7ZM1395.6,492.5 1401.4,486.7 1406.4,486.4 1409.6,490.0 1407.7,496.2 1405.7,498.1 1396.0,493.5ZM1396.0,493.5 1405.7,498.1 1405.8,503.7 1399.6,506.1 1394.7,500.8ZM1388.9,503.8 1394.7,500.8 1399.6,506.1 1397.9,511.6 1395.2,512.9 1389.0,511.8 1387.5,508.6ZM1389.0,511.8 1395.2,512.9 1395.6,522.0 1393.6,523.9 1384.4,522.1 1383.8,520.0ZM1395.0,530.5 1390.7,533.0 1383.0,526.0 1384.4,522.1 1393.6,523.9ZM1381.8,538.0 1380.2,528.8 1383.0,526.0 1390.7,533.0 1388.4,538.2ZM1383.3,548.7 1378.0,546.6 1380.8,538.9 1381.8,538.0 1388.4,538.2 1391.3,541.6ZM1383.7,549.1 1385.9,556.9 1380.4,560.4 1374.1,553.1 1375.2,548.1 1378.0,546.6 1383.3,548.7ZM1374.4,567.4 1369.1,565.2 1368.8,564.3 1371.2,555.0 1374.1,553.1 1380.4,560.4 1380.0,564.4ZM1374.4,567.4 1374.4,568.5 1367.2,575.1 1367.0,575.2 1365.3,568.8 1369.1,565.2ZM1355.7,607.6 1363.6,606.7 1363.4,609.6 1363.0,610.3 1360.3,611.6 1356.1,609.6ZM1351.3,610.7 1356.1,609.6 1360.3,611.6 1359.6,621.2 1351.2,622.6 1348.6,616.7ZM1359.3,632.5 1349.2,628.9 1348.4,626.2 1351.2,622.6 1359.6,621.2 1359.8,621.4 1359.3,632.5ZM1359.3,632.5 1353.9,638.6 1350.8,639.1 1347.9,633.3 1349.2,628.9ZM1342.8,645.4 1342.1,634.7 1347.9,633.3 1350.8,639.1 1346.4,645.5ZM1348.1,647.1 1340.2,651.8 1339.2,652.4 1337.6,650.8 1342.4,645.5 1342.8,645.4 1346.4,645.5ZM1339.2,652.4 1334.0,655.5 1334.4,652.1 1337.6,650.8ZM1414.9,465.1 1423.7,464.1 1422.8,469.2 1417.4,471.3 1415.9,471.2 1414.0,466.1ZM1424.7,472.7 1421.9,471.7 1417.4,471.3 1422.8,469.2ZM1417.2,479.0 1420.2,480.1 1420.4,480.8 1420.1,480.9ZM1419.0,490.2 1409.6,490.0 1406.4,486.4 1410.2,477.9 1413.4,477.6 1417.2,479.0 1420.1,480.9ZM1407.7,496.2 1409.6,490.0 1419.0,490.2 1419.1,490.2 1415.8,499.2ZM1411.1,507.2 1405.8,503.7 1405.7,498.1 1407.7,496.2 1415.8,499.2 1416.0,500.3ZM1411.1,507.2 1411.4,508.3 1404.1,515.3 1397.9,511.6 1399.6,506.1 1405.8,503.7ZM1404.1,515.3 1405.7,521.6 1405.1,522.3 1395.6,522.0 1395.2,512.9 1397.9,511.6ZM1405.1,522.3 1405.0,526.0 1399.0,532.3 1395.0,530.5 1393.6,523.9 1395.6,522.0ZM1391.3,541.6 1388.4,538.2 1390.7,533.0 1395.0,530.5 1399.0,532.3 1399.7,534.3 1398.6,541.3 1395.0,543.6ZM1383.7,549.1 1383.3,548.7 1391.3,541.6 1395.0,543.6 1394.8,550.2ZM1383.7,549.1 1394.8,550.2 1396.0,553.5 1392.1,557.6 1385.9,556.9ZM1392.5,563.1 1384.5,567.8 1380.0,564.4 1380.4,560.4 1385.9,556.9 1392.1,557.6ZM1386.3,575.7 1380.2,572.6 1376.9,566.2 1374.4,568.5 1374.4,567.4 1380.0,564.4 1384.5,567.8 1386.5,575.0ZM1363.3,610.5 1362.8,616.7 1364.2,622.5 1359.8,621.4 1359.6,621.2 1360.3,611.6 1363.0,610.3ZM1364.2,622.5 1365.3,626.8 1360.5,633.1 1359.3,632.5 1359.8,621.4ZM1359.3,632.5 1359.3,632.5 1360.5,633.1 1360.3,633.4 1355.3,640.0 1353.9,638.6ZM1355.3,640.0 1355.3,640.1 1348.6,646.8 1348.1,647.1 1346.4,645.5 1350.8,639.1 1353.9,638.6ZM1423.7,464.1 1429.4,463.5 1430.1,464.3 1429.5,473.0 1426.6,473.3 1424.7,472.7 1422.8,469.2ZM1429.4,482.0 1430.2,481.7 1430.8,481.7 1430.6,482.2ZM1429.5,473.0 1429.4,474.2 1426.6,473.3ZM1430.6,482.2 1431.5,483.9 1427.8,493.5 1426.6,493.7 1419.1,490.2 1419.0,490.2 1420.1,480.9 1420.4,480.8 1421.9,485.1 1429.4,482.0ZM1425.8,496.0 1425.2,495.9 1425.3,497.6 1423.5,503.4 1416.0,500.3 1415.8,499.2 1419.1,490.2 1426.6,493.7ZM1411.1,507.2 1416.0,500.3 1423.5,503.4 1423.6,503.7 1418.4,512.5 1417.2,513.0 1411.4,508.3ZM1411.4,508.3 1417.2,513.0 1416.2,517.7 1411.8,520.8 1405.7,521.6 1404.1,515.3ZM1410.6,532.2 1405.0,526.0 1405.1,522.3 1405.7,521.6 1411.8,520.8 1415.0,529.4ZM1409.9,535.6 1399.7,534.3 1399.0,532.3 1405.0,526.0 1410.6,532.2ZM1410.1,536.3 1406.0,543.6 1398.6,541.3 1399.7,534.3 1409.9,535.6ZM1394.8,550.2 1395.0,543.6 1398.6,541.3 1406.0,543.6 1407.8,547.2 1400.5,554.6 1396.0,553.5ZM1397.4,568.1 1392.5,563.1 1392.1,557.6 1396.0,553.5 1400.5,554.6 1403.9,559.0 1403.1,564.7ZM1397.2,569.0 1386.5,575.0 1384.5,567.8 1392.5,563.1 1397.4,568.1ZM1398.5,572.0 1396.8,571.8 1390.2,577.6 1386.3,575.7 1386.5,575.0 1397.2,569.0ZM1430.8,481.7 1439.2,482.2 1437.7,485.8 1431.5,483.9 1430.6,482.2ZM1431.5,483.9 1437.7,485.8 1438.9,487.5 1435.7,492.6 1433.5,492.6 1431.5,495.1 1427.8,493.5ZM1431.5,495.1 1430.2,496.7 1425.8,496.0 1426.6,493.7 1427.8,493.5ZM1425.3,497.6 1425.9,504.6 1423.6,503.7 1423.5,503.4ZM1418.4,512.5 1423.6,503.7 1425.9,504.6 1426.0,506.7 1422.7,511.7 1423.5,513.7ZM1423.5,513.7 1426.0,520.1 1424.0,524.9 1423.0,525.3 1416.2,517.7 1417.2,513.0 1418.4,512.5ZM1420.9,529.6 1415.0,529.4 1411.8,520.8 1416.2,517.7 1423.0,525.3ZM1410.1,536.3 1409.9,535.6 1410.6,532.2 1415.0,529.4 1420.9,529.6 1422.1,533.4 1418.1,540.4ZM1410.1,536.3 1418.1,540.4 1418.6,542.9 1417.6,546.6 1412.1,548.7 1407.8,547.2 1406.0,543.6ZM1403.9,559.0 1400.5,554.6 1407.8,547.2 1412.1,548.7 1411.9,557.9ZM1412.9,558.8 1412.7,561.8 1412.1,566.5 1406.6,567.1 1403.1,564.7 1403.9,559.0 1411.9,557.9ZM1397.2,569.0 1397.4,568.1 1403.1,564.7 1406.6,567.1 1406.8,571.0 1403.5,572.6 1398.5,572.0ZM1437.7,485.8 1439.2,482.2 1446.9,482.6 1447.1,485.4 1444.5,489.1 1438.9,487.5ZM1444.7,492.6 1435.7,492.6 1438.9,487.5 1444.5,489.1 1445.3,491.6ZM1431.6,534.1 1428.2,535.6 1422.1,533.4 1420.9,529.6 1423.0,525.3 1424.0,524.9 1421.9,530.1 1432.0,533.3ZM1428.2,535.6 1428.1,542.3 1418.6,542.9 1418.1,540.4 1422.1,533.4ZM1430.4,544.8 1430.2,545.1 1425.2,549.3 1420.9,550.2 1417.6,546.6 1418.6,542.9 1428.1,542.3ZM1420.9,550.2 1413.5,551.8 1412.9,558.8 1411.9,557.9 1412.1,548.7 1417.6,546.6ZM1406.6,567.1 1412.1,566.5 1411.8,568.5 1406.8,571.0ZM1445.3,491.6 1444.5,489.1 1447.1,485.4 1447.7,492.6 1447.1,492.6ZM1447.1,492.6 1444.7,492.6 1445.3,491.6ZM1432.0,533.3 1435.2,534.3 1434.0,536.9 1431.6,534.1ZM1434.0,536.9 1430.4,544.8 1428.1,542.3 1428.2,535.6 1431.6,534.1Z"/>
<path fill="#ff7f00" d="M1262.5,527.6 1268.4,528.4 1270.0,533.4 1265.9,536.8Z"/>
<path fill="#ff7f00" d="M1250.0,553.5 1258.9,545.4 1259.2,545.1 1265.0,550.1 1264.2,554.3 1251.7,556.8Z"/>
<path fill="#ff7f00" d="M1298.4,543.4 1304.2,539.3 1310.9,545.1 1306.7,549.3 1300.9,550.1Z"/>
<path fill="#ff7f00" d="M1312.6,540.9 1318.4,541.8 1325.1,547.6 1319.3,551.0 1313.4,546.8Z"/>
<path fill="#ff7f00" d="M1325.1,541.8 1328.4,536.8 1333.4,543.4 1330.1,547.6Z"/>
<path fill="#ff7f00" d="M1335.1,540.9 1344.3,541.8 1343.4,548.5 1336.8,548.5Z"/>
<path fill="#ff7f00" d="M1297.6,565.1 1303.4,560.1 1309.2,561.8 1308.4,573.5 1303.4,572.6Z"/>
<path fill="#ee0000" d="M1286.7,539.3 1291.7,535.9 1295.9,540.9 1295.1,546.8 1290.1,548.5 1286.7,545.1Z"/>
<path fill="#ee0000" d="M1335.1,529.3 1346.8,533.4 1345.9,540.9 1338.4,540.9 1331.8,540.1 1330.9,536.8Z"/>
<path fill="#ffebaf" d="M357.3,70.3 343.1,104.6 338.6,104.6 341.6,98.6 328.2,97.1 323.7,98.6 319.3,91.2 317.8,77.8 319.3,73.3 320.8,63.6ZM369.9,72.5 355.0,110.6 350.6,112.0 343.1,106.1 343.1,104.6 357.3,70.3ZM383.4,74.8 372.9,104.6 364.0,113.5 361.7,114.3 355.0,110.6 369.9,72.5ZM394.5,74.8 381.1,107.6 372.9,106.8 372.9,104.6 383.4,74.8ZM381.1,107.6 372.9,135.9 355.0,133.7 361.7,114.3 364.0,113.5 372.9,106.8ZM315.5,77.8 317.8,77.8 319.3,91.2 323.7,98.6 313.3,107.6 308.8,118.0 311.1,127.0 304.4,124.0 296.9,116.5 295.4,107.6 299.9,95.6 306.6,91.2 308.8,80.7ZM328.2,97.1 341.6,98.6 338.6,104.6 331.2,112.0 323.7,119.5 317.8,119.5 311.1,127.0 308.8,118.0 313.3,107.6 323.7,98.6ZM267.8,91.9 264.1,100.1 252.2,102.4 238.8,98.6 239.5,86.0ZM305.1,83.7 306.6,91.2 299.9,95.6 297.6,101.6 276.0,97.9 282.0,89.7 282.7,81.5ZM271.6,150.1 260.4,173.2 246.2,175.4 257.4,147.1ZM286.5,131.4 293.9,135.9 295.4,141.9 304.4,143.4 305.1,149.3 298.4,168.0 265.6,161.2 271.6,150.1 277.5,135.9 283.5,127.0ZM298.4,168.0 295.4,176.1 280.5,179.1 267.1,178.4 262.6,173.9 260.4,173.2 265.6,161.2ZM359.5,166.5 358.0,182.9 345.3,180.6 351.3,166.5ZM613.8,365.1 614.6,371.4 620.1,371.4 617.6,398.9 615.1,425.2 583.0,422.7 585.0,406.4 593.8,406.4 598.8,363.9ZM622.6,358.9 642.1,360.1 636.3,400.2 617.6,398.9 620.1,371.4ZM875.3,383.9 885.3,387.6 885.3,395.9 867.3,396.4 867.3,385.1ZM737.7,405.2 736.4,420.2 717.7,418.9 718.9,403.9ZM774.0,421.4 772.7,452.2 738.4,450.2 740.2,420.2ZM753.2,451.0 752.2,465.7 735.2,464.7 736.4,450.2ZM617.1,457.7 615.1,471.5 596.3,469.7 598.1,456.5ZM617.1,458.1 615.1,471.3 596.3,469.6 598.1,456.3ZM617.6,400.0 614.6,426.3 582.6,423.0 585.6,400.0ZM753.2,451.3 752.2,465.6 734.7,464.6 735.7,450.1ZM588.8,485.1 602.6,486.3 601.3,522.6 582.6,522.1 581.3,512.6 575.1,503.9 578.8,491.3ZM611.3,526.4 609.6,543.1 585.6,538.9 579.6,530.6 582.6,522.1ZM579.6,530.6 585.6,538.9 593.1,556.4 592.6,562.7 557.5,558.9 545.0,547.6 547.0,528.1ZM655.1,492.1 652.1,522.1 642.6,520.6 643.1,509.6 623.9,507.1 625.1,490.1ZM642.6,509.6 639.6,535.6 613.1,533.1 610.1,517.6 612.1,507.1ZM639.6,535.6 637.1,568.9 606.3,558.2 613.1,533.1ZM702.2,578.9 700.2,607.2 666.4,604.0 668.1,576.4ZM693.2,646.5 692.2,665.8 662.6,663.3 663.9,644.7ZM951.8,408.3 967.2,408.3 967.2,421.7 951.8,421.7ZM967.2,408.3 982.7,408.3 982.7,421.7 967.2,421.7ZM982.7,420.8 997.7,420.8 997.7,436.7 982.7,436.7ZM997.7,420.8 1012.7,420.8 1012.7,436.7 997.7,436.7ZM924.3,585.5 939.3,585.5 939.3,598.5 924.3,598.5ZM924.3,585.8 939.3,585.8 939.3,600.9 924.3,600.9ZM974.3,592.5 989.3,592.5 989.3,605.0 974.3,605.0ZM1058.6,648.7 1059.4,661.7 1055.2,666.8 1045.2,661.7 1041.1,649.2ZM1076.1,663.4 1069.4,680.1 1056.1,679.8 1055.2,666.8 1059.4,661.7ZM733.4,593.4 732.6,609.7 716.7,608.7 717.1,592.5ZM748.4,578.7 748.1,593.4 733.8,594.2 734.3,577.5ZM764.3,568.3 764.3,590.9 748.4,590.9 749.3,567.5ZM767.6,591.7 766.5,612.1 748.1,610.9 748.4,590.9ZM785.8,557.7 785.3,572.7 764.0,572.2 764.7,557.2ZM805.3,555.2 809.0,562.7 807.8,570.2 804.8,572.7 804.0,581.4 786.5,580.7 786.5,555.2ZM746.4,689.3 764.3,689.3 764.3,707.6 746.4,707.6ZM731.4,707.6 749.3,707.6 749.3,726.0 731.4,726.0ZM744.8,746.3 743.8,765.0 725.9,763.7 726.4,745.0ZM775.1,785.9 774.3,804.2 755.9,803.1 756.8,785.1ZM845.2,843.4 854.4,859.3 835.2,867.6 826.0,851.8ZM866.1,837.6 875.2,850.1 855.2,861.0 846.9,846.8ZM846.9,828.4 855.2,841.8 845.2,845.1 833.5,830.9 836.9,825.9ZM750.1,836.4 751.4,840.9 755.1,841.8 755.1,863.1 734.3,861.0 734.3,843.4 730.1,841.8 713.4,840.4 713.4,839.3 729.3,839.8 730.1,835.1ZM813.4,946.8 826.0,960.1 820.1,965.9 800.1,964.3 801.8,940.9ZM808.1,890.4 808.4,905.0 783.4,903.4 783.4,889.2ZM808.4,905.4 815.1,912.6 806.8,920.1 800.1,918.4 797.6,915.1 797.6,905.0ZM819.3,910.9 829.3,919.2 822.6,927.6 815.1,923.4 810.9,917.6ZM853.5,924.2 861.0,930.9 857.7,938.4 846.0,945.9 838.5,935.1ZM829.3,936.7 838.5,945.1 826.0,953.4 816.8,945.1ZM856.0,939.2 866.8,950.1 860.2,956.8 851.0,955.1 845.1,960.1 841.0,952.6ZM869.3,950.9 880.2,965.9 870.2,970.9 861.0,970.1 860.2,956.8ZM860.2,971.8 873.5,973.4 876.0,978.5 866.8,983.5 856.8,990.1 847.6,986.0ZM911.0,879.2 912.7,900.0 900.2,900.9 895.2,898.4 898.5,880.0ZM975.9,777.5 976.4,795.1 955.1,794.2 955.1,778.4ZM961.7,841.8 966.7,846.8 965.9,863.5 945.0,850.1 945.0,839.3ZM984.3,848.4 987.6,855.1 993.4,866.8 975.1,868.5 973.4,868.5 966.7,863.5 966.7,846.8ZM1101.7,561.7 1115.0,571.7 1121.7,573.4 1131.7,582.5 1132.5,586.7 1110.0,588.4 1106.7,583.4 1100.0,578.4 1100.0,551.7ZM1231.0,610.1 1238.5,612.6 1237.6,620.1 1226.8,620.9 1226.8,615.1ZM1158.4,679.3 1161.7,686.8 1162.1,698.5 1147.5,698.5 1147.5,680.1ZM1161.7,686.8 1175.9,677.6 1175.9,696.8 1162.1,698.5ZM1190.1,674.3 1189.6,695.2 1175.9,696.8 1175.9,677.6ZM1203.4,673.5 1203.4,693.2 1189.6,695.2 1190.1,674.3ZM1216.8,673.5 1216.8,691.8 1203.4,693.2 1203.4,673.5ZM1225.1,671.8 1229.3,676.8 1228.5,691.0 1216.8,691.8 1216.8,673.5ZM1559.2,235.0 1564.2,241.7 1564.2,251.7 1554.2,253.3 1552.5,250.0 1553.3,241.7 1551.7,235.0ZM1564.2,251.7 1570.0,259.2 1568.3,265.8 1560.8,270.8 1557.5,265.0 1554.2,258.3 1554.2,253.3ZM1591.7,351.7 1598.3,353.3 1605.0,363.3 1595.0,368.3 1593.3,370.0 1585.0,358.3ZM1005.0,336.5 1020.0,336.5 1020.0,348.5 1005.0,348.5ZM1020.0,336.5 1035.0,336.5 1035.0,348.5 1020.0,348.5ZM1035.0,335.0 1050.0,335.0 1050.0,353.0 1035.0,353.0ZM1050.0,335.0 1067.0,335.0 1067.0,360.0 1050.0,360.0ZM976.0,360.6 991.7,360.6 991.7,376.4 976.0,376.4ZM1006.0,360.6 1020.5,360.6 1020.5,376.0 1006.0,376.0ZM861.7,320.7 877.3,320.7 877.3,335.0 861.7,335.0ZM1068.0,360.0 1074.0,371.0 1052.0,371.0 1052.0,360.0ZM1114.1,597.7 1115.3,607.7 1107.8,609.0 1104.1,604.0 1100.3,596.5ZM1115.3,607.7 1126.6,609.0 1121.6,620.2 1111.6,620.2 1107.8,609.0ZM791.8,806.7 791.0,823.4 773.5,822.6 774.3,805.1ZM799.3,824.3 806.0,840.1 804.3,843.4 796.8,850.1 788.1,850.1 788.5,825.1ZM811.8,819.3 825.2,835.1 813.5,841.8 806.0,840.1 800.2,824.3ZM845.2,816.7 850.2,822.6 863.6,820.1 876.9,836.8 856.9,843.4 853.5,835.1 846.9,828.4 836.9,825.9 834.4,818.4Z"/>
<path fill="#ff7f00" d="M615.6,275.5 608.1,319.6 576.8,317.1 577.5,273.0ZM663.9,325.1 659.6,361.4 635.8,359.4 640.1,323.3ZM1060.3,724.8 1060.3,736.0 1067.8,737.7 1069.4,741.8 1063.6,742.7 1059.4,744.3 1041.1,743.5 1042.2,725.1ZM684.2,778.7 683.0,795.9 653.0,792.6 654.2,775.0ZM800.1,946.8 799.8,963.4 778.4,962.6 778.7,945.4ZM874.3,869.2 881.8,883.4 862.7,892.5 857.7,877.5ZM902.7,870.8 915.2,871.7 916.9,877.5 911.0,879.2 898.5,880.0 897.7,875.8ZM923.6,874.2 928.6,881.7 927.7,893.4 911.9,889.2 911.0,879.2ZM898.5,929.2 904.4,934.2 909.4,942.6 893.5,955.9 881.8,943.4ZM950.3,895.9 961.1,913.4 960.3,919.2 944.4,919.2 940.2,910.1 936.9,901.7ZM940.2,861.7 946.9,866.7 933.6,880.0 928.6,881.7 925.2,872.5ZM960.3,858.3 970.3,870.0 960.3,871.7 948.6,866.7 946.9,856.7ZM836.8,990.1 831.8,996.8 831.8,1005.1 826.8,1006.0 826.0,1019.3 821.8,1019.3 821.8,989.3ZM850.2,998.5 858.5,1006.8 856.0,1009.3 843.5,1007.6 832.6,1004.3 832.6,995.1ZM830.1,1038.2 832.6,1058.5 816.8,1058.5 816.8,1037.2ZM975.9,801.7 976.7,816.7 953.4,815.1 953.1,800.9ZM973.4,834.3 983.4,843.4 984.3,848.4 966.7,846.8 961.7,841.8 958.4,840.1 957.6,833.4ZM162.3,388.3 161.0,396.7 163.3,406.7 161.7,420.0 154.0,422.7 150.0,406.7 153.3,393.3 156.7,388.3ZM196.7,446.7 205.0,447.3 200.0,455.0 186.7,467.3 182.7,460.0 182.7,450.7Z"/>
<path fill="#ee0000" d="M833.5,920.1 841.8,926.7 836.8,935.9 826.8,935.9 822.6,928.4ZM915.2,893.4 927.7,894.2 933.6,900.0 936.9,908.4 931.1,914.2 923.6,908.4 913.5,910.1 912.7,900.0 911.5,889.7ZM910.2,924.2 916.9,925.9 924.4,933.4 920.2,940.9 910.2,942.6 903.5,934.2 904.4,926.7Z"/>
<path fill="#6e6e6e" d="M282.3,88.2 277.5,94.2 273.8,90.4 265.6,100.9 264.1,99.4 270.1,88.9 274.5,83.7 281.2,75.5ZM1636.3,248.3 1638.3,253.3 1635.0,257.5 1632.0,258.0 1631.3,250.0ZM1630.8,336.7 1635.0,348.3 1630.0,350.8 1626.7,343.3 1626.7,335.0ZM1653.3,318.3 1657.5,322.5 1659.2,329.2 1656.7,329.2 1654.2,323.3 1650.0,321.7 1649.2,319.2ZM1651.7,345.8 1650.8,349.2 1645.0,350.0 1644.2,345.0ZM1661.7,344.2 1663.3,349.2 1658.3,350.8 1655.8,347.5Z"/>
<path fill="#eeeeee" d="M1120.4,895.6 1132.9,897.6 1136.7,902.6 1125.4,907.6 1115.4,906.4 1111.7,900.1Z"/>
</g>
</svg>
<div id="status"></div>
<div id="coords">50°18′16″N  112°41′41″W  elev 0m,  eye alt 3,197 km</div>
<div id="esri">esri</div>
<div id="bottom"></div><div id="bottomw"></div>
<div id="titlebar">
 <svg width="44" height="38" style="position:absolute;left:0;top:0" viewBox="0 0 44 38">
  <defs><linearGradient id="lg" x1="0" y1="0" x2="1" y2="1"><stop offset="0" stop-color="#3b9af5"/><stop offset="1" stop-color="#1868d0"/></linearGradient></defs>
  <polygon points="27,5.9 38.2,9.7 38.2,27 27,31 15,27.5 15.3,10.7" fill="url(#lg)"/>
  <circle cx="26.7" cy="18.6" r="7.6" fill="none" stroke="#fff" stroke-width="2.3"/>
  <path d="M21 17.400 Q25.500 13.300 30.800 15.600 L23.400 21.400 Q28 23.600 32.600 19.800" fill="none" stroke="#fff" stroke-width="2.300" stroke-linejoin="round"/>
 </svg>
 <div id="title">ArcGIS Earth</div>
 <div id="signin">Sign in</div>
 <div id="tsep"></div>
 <svg width="160" height="38" style="position:absolute;left:1758px;top:0" viewBox="1758 0 160 38" fill="none" stroke="#6f6f6f">
  <path d="M1766.200 18v-3.500h3.800M1772.500 14.500h3.800v3.500M1776.300 21v3.500h-3.800M1770 24.500h-3.800v-3.500" stroke-width="2.400"/>
  <rect x="1810" y="20.400" width="11.300" height="3.600" fill="#707070" stroke="none"/>
  <path d="M1855 16.300v-2.100h7.700v6.300h-2.300" stroke-width="1.900"/><rect x="1851.800" y="17.300" width="7.700" height="7" stroke-width="1.900"/>
  <path d="M1894 13l10 10.500M1904 13l-10 10.500" stroke="#a8a8a8" stroke-width="2.900"/>
 </svg>
</div>
<div id="toolbar">
 <svg width="96" height="50" viewBox="13 51 96 50" style="position:absolute;left:0;top:0">
  <g fill="#cdcdcd">
   <rect x="35" y="67.900" width="19" height="2.200"/><rect x="35" y="75.300" width="19" height="2.200"/><rect x="35" y="83" width="19" height="2.200"/>
   <rect x="29" y="68" width="2.200" height="2.200"/><rect x="29" y="75.300" width="2.200" height="2.200"/><rect x="29" y="83" width="2.200" height="2.200"/>
  </g>
  <circle cx="53" cy="67" r="5" fill="#1b78d2" stroke="#00bdec" stroke-width="2.200"/>
  <rect x="70" y="63" width="1" height="24.500" fill="#5c5c5c"/>
  <rect x="78.900" y="56.800" width="23.600" height="38.600" rx="2" fill="none" stroke="#f0f0f0" stroke-width="1.400" stroke-dasharray="1.400 2.550"/>
  <path d="M85.300 69.400l8.600 6.500-8.600 6.500" fill="none" stroke="#bcbcbc" stroke-width="2.600"/>
 </svg>
</div>
<div id="search"><span>Find address or place</span>
 <svg width="36" height="36" style="position:absolute;left:222px;top:6px" viewBox="1869 59 36 36" fill="none" stroke="#7b7b7b">
  <circle cx="1888" cy="75.400" r="5.900" stroke-width="2.600"/><path d="M1883.800 80l-6.300 6" stroke-width="3.400" stroke-linecap="round"/>
 </svg>
</div>
<div class="round" style="left:1862px;top:116px">
 <svg width="45" height="45" viewBox="1862 116 45 45"><polygon points="1883.800,128 1891.300,148 1883.800,143.800 1876.200,148" fill="#fff"/></svg>
</div>
<div class="round" style="left:1862px;top:174px">
 <svg width="45" height="45" viewBox="1862 174 45 45" fill="none" stroke="#9b9b9b" stroke-width="2.300">
  <path d="M1874.300 196.300L1884.100 187.700 1893.900 196.300"/><path d="M1877.300 194.500V203.700H1890.800V194.500"/><path d="M1881.800 203.700V197.400H1886.300V203.700" stroke-width="2.200"/>
 </svg>
</div>
</body></html>
